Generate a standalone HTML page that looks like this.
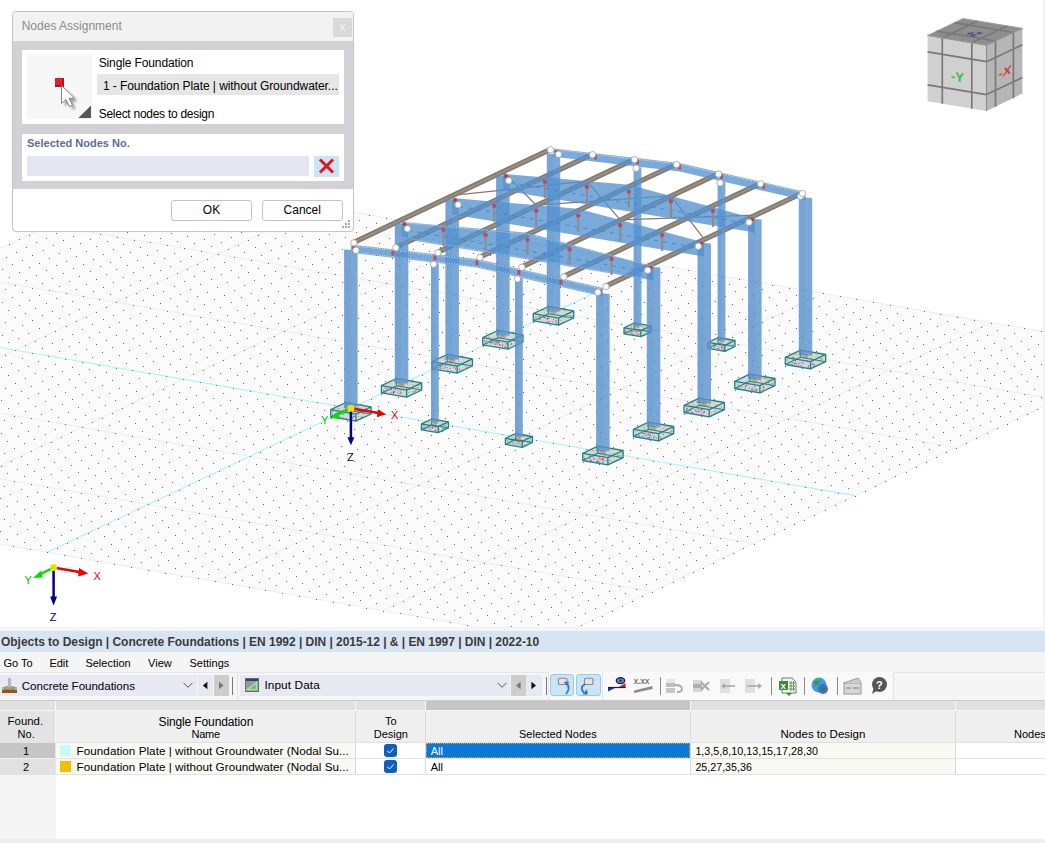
<!DOCTYPE html>
<html><head><meta charset="utf-8"><style>
*{margin:0;padding:0;box-sizing:border-box}
html,body{width:1045px;height:843px;overflow:hidden;background:#fff;font-family:"Liberation Sans",sans-serif;}
.abs{position:absolute}
#vp{position:absolute;left:0;top:0;width:1045px;height:627px;background:#fff;overflow:hidden}
#vp svg.scene{position:absolute;left:0;top:0}
.t{position:absolute;white-space:nowrap;color:#000;font-size:12px;line-height:14px}
</style></head><body>
<div id="vp">
<svg class="scene" width="1045" height="627" viewBox="0 0 1045 627" font-family="Liberation Sans">
<polygon points="150.8,177.0 1158.8,351.6 551.0,639.6 -457.0,465.0" fill="#fbfbfb"/>
<path d="M150.8 177.0L-457.0 465.0M150.8 177.0L1158.8 351.6M318.8 206.1L-289.0 494.1M49.5 225.0L1057.5 399.6M486.8 235.2L-121.0 523.2M-51.8 273.0L956.2 447.6M822.8 293.4L215.0 581.4M-254.4 369.0L753.6 543.6M990.8 322.5L383.0 610.5M-355.7 417.0L652.3 591.6M1158.8 351.6L551.0 639.6M-457.0 465.0L551.0 639.6" stroke="#ededed" stroke-width="1" fill="none"/>
<path d="M-153.1 321.0L854.9 495.6M654.8 264.3L47.0 552.3" stroke="#b2f2fb" stroke-width="1.1" fill="none"/>
<path d="M151 177h1v1h-1zM141 182h1v1h-1zM131 187h1v1h-1zM120 191h1v1h-1zM110 196h1v1h-1zM100 201h1v1h-1zM90 206h1v1h-1zM80 211h1v1h-1zM70 215h1v1h-1zM60 220h1v1h-1zM50 225h1v1h-1zM39 230h1v1h-1zM29 235h1v1h-1zM19 239h1v1h-1zM9 244h1v1h-1zM-1 249h1v1h-1zM168 180h1v1h-1zM157 185h1v1h-1zM147 190h1v1h-1zM137 194h1v1h-1zM127 199h1v1h-1zM117 204h1v1h-1zM107 209h1v1h-1zM97 214h1v1h-1zM87 218h1v1h-1zM76 223h1v1h-1zM66 228h1v1h-1zM56 233h1v1h-1zM46 238h1v1h-1zM36 242h1v1h-1zM26 247h1v1h-1zM16 252h1v1h-1zM6 257h1v1h-1zM184 183h1v1h-1zM174 188h1v1h-1zM164 192h1v1h-1zM154 197h1v1h-1zM144 202h1v1h-1zM134 207h1v1h-1zM124 212h1v1h-1zM113 216h1v1h-1zM103 221h1v1h-1zM93 226h1v1h-1zM83 231h1v1h-1zM73 236h1v1h-1zM63 240h1v1h-1zM53 245h1v1h-1zM43 250h1v1h-1zM32 255h1v1h-1zM22 260h1v1h-1zM12 264h1v1h-1zM2 269h1v1h-1zM201 186h1v1h-1zM191 191h1v1h-1zM181 195h1v1h-1zM171 200h1v1h-1zM161 205h1v1h-1zM151 210h1v1h-1zM140 215h1v1h-1zM130 219h1v1h-1zM120 224h1v1h-1zM110 229h1v1h-1zM100 234h1v1h-1zM90 239h1v1h-1zM80 243h1v1h-1zM70 248h1v1h-1zM59 253h1v1h-1zM49 258h1v1h-1zM39 263h1v1h-1zM29 267h1v1h-1zM19 272h1v1h-1zM9 277h1v1h-1zM-1 282h1v1h-1zM218 189h1v1h-1zM208 193h1v1h-1zM198 198h1v1h-1zM188 203h1v1h-1zM177 208h1v1h-1zM167 213h1v1h-1zM157 217h1v1h-1zM147 222h1v1h-1zM137 227h1v1h-1zM127 232h1v1h-1zM117 237h1v1h-1zM107 241h1v1h-1zM96 246h1v1h-1zM86 251h1v1h-1zM76 256h1v1h-1zM66 261h1v1h-1zM56 265h1v1h-1zM46 270h1v1h-1zM36 275h1v1h-1zM26 280h1v1h-1zM15 285h1v1h-1zM5 289h1v1h-1zM235 192h1v1h-1zM225 196h1v1h-1zM215 201h1v1h-1zM204 206h1v1h-1zM194 211h1v1h-1zM184 216h1v1h-1zM174 220h1v1h-1zM164 225h1v1h-1zM154 230h1v1h-1zM144 235h1v1h-1zM134 240h1v1h-1zM123 244h1v1h-1zM113 249h1v1h-1zM103 254h1v1h-1zM93 259h1v1h-1zM83 264h1v1h-1zM73 268h1v1h-1zM63 273h1v1h-1zM52 278h1v1h-1zM42 283h1v1h-1zM32 288h1v1h-1zM22 292h1v1h-1zM12 297h1v1h-1zM2 302h1v1h-1zM252 194h1v1h-1zM241 199h1v1h-1zM231 204h1v1h-1zM221 209h1v1h-1zM211 214h1v1h-1zM201 218h1v1h-1zM191 223h1v1h-1zM181 228h1v1h-1zM171 233h1v1h-1zM160 238h1v1h-1zM150 242h1v1h-1zM140 247h1v1h-1zM130 252h1v1h-1zM120 257h1v1h-1zM110 262h1v1h-1zM100 266h1v1h-1zM90 271h1v1h-1zM79 276h1v1h-1zM69 281h1v1h-1zM59 286h1v1h-1zM49 290h1v1h-1zM39 295h1v1h-1zM29 300h1v1h-1zM19 305h1v1h-1zM8 310h1v1h-1zM-2 314h1v1h-1zM268 197h1v1h-1zM258 202h1v1h-1zM248 207h1v1h-1zM238 212h1v1h-1zM228 217h1v1h-1zM218 221h1v1h-1zM208 226h1v1h-1zM197 231h1v1h-1zM187 236h1v1h-1zM177 241h1v1h-1zM167 245h1v1h-1zM157 250h1v1h-1zM147 255h1v1h-1zM137 260h1v1h-1zM127 265h1v1h-1zM116 269h1v1h-1zM106 274h1v1h-1zM96 279h1v1h-1zM86 284h1v1h-1zM76 289h1v1h-1zM66 293h1v1h-1zM56 298h1v1h-1zM46 303h1v1h-1zM35 308h1v1h-1zM25 313h1v1h-1zM15 317h1v1h-1zM5 322h1v1h-1zM285 200h1v1h-1zM275 205h1v1h-1zM265 210h1v1h-1zM255 215h1v1h-1zM245 219h1v1h-1zM235 224h1v1h-1zM224 229h1v1h-1zM214 234h1v1h-1zM204 239h1v1h-1zM194 243h1v1h-1zM184 248h1v1h-1zM174 253h1v1h-1zM164 258h1v1h-1zM154 263h1v1h-1zM143 267h1v1h-1zM133 272h1v1h-1zM123 277h1v1h-1zM113 282h1v1h-1zM103 287h1v1h-1zM93 291h1v1h-1zM83 296h1v1h-1zM72 301h1v1h-1zM62 306h1v1h-1zM52 311h1v1h-1zM42 315h1v1h-1zM32 320h1v1h-1zM22 325h1v1h-1zM12 330h1v1h-1zM2 335h1v1h-1zM302 203h1v1h-1zM292 208h1v1h-1zM282 213h1v1h-1zM272 218h1v1h-1zM261 222h1v1h-1zM251 227h1v1h-1zM241 232h1v1h-1zM231 237h1v1h-1zM221 242h1v1h-1zM211 246h1v1h-1zM201 251h1v1h-1zM191 256h1v1h-1zM180 261h1v1h-1zM170 266h1v1h-1zM160 270h1v1h-1zM150 275h1v1h-1zM140 280h1v1h-1zM130 285h1v1h-1zM120 290h1v1h-1zM110 294h1v1h-1zM99 299h1v1h-1zM89 304h1v1h-1zM79 309h1v1h-1zM69 314h1v1h-1zM59 318h1v1h-1zM49 323h1v1h-1zM39 328h1v1h-1zM28 333h1v1h-1zM18 338h1v1h-1zM8 342h1v1h-1zM-2 347h1v1h-1zM319 206h1v1h-1zM309 211h1v1h-1zM299 216h1v1h-1zM288 221h1v1h-1zM278 225h1v1h-1zM268 230h1v1h-1zM258 235h1v1h-1zM248 240h1v1h-1zM238 245h1v1h-1zM228 249h1v1h-1zM218 254h1v1h-1zM207 259h1v1h-1zM197 264h1v1h-1zM187 269h1v1h-1zM177 273h1v1h-1zM167 278h1v1h-1zM157 283h1v1h-1zM147 288h1v1h-1zM136 293h1v1h-1zM126 297h1v1h-1zM116 302h1v1h-1zM106 307h1v1h-1zM96 312h1v1h-1zM86 317h1v1h-1zM76 321h1v1h-1zM66 326h1v1h-1zM55 331h1v1h-1zM45 336h1v1h-1zM35 341h1v1h-1zM25 345h1v1h-1zM15 350h1v1h-1zM5 355h1v1h-1zM336 209h1v1h-1zM325 214h1v1h-1zM315 219h1v1h-1zM305 223h1v1h-1zM295 228h1v1h-1zM285 233h1v1h-1zM275 238h1v1h-1zM265 243h1v1h-1zM255 247h1v1h-1zM244 252h1v1h-1zM234 257h1v1h-1zM224 262h1v1h-1zM214 267h1v1h-1zM204 271h1v1h-1zM194 276h1v1h-1zM184 281h1v1h-1zM174 286h1v1h-1zM163 291h1v1h-1zM153 295h1v1h-1zM143 300h1v1h-1zM133 305h1v1h-1zM123 310h1v1h-1zM113 315h1v1h-1zM103 319h1v1h-1zM92 324h1v1h-1zM82 329h1v1h-1zM72 334h1v1h-1zM62 339h1v1h-1zM52 343h1v1h-1zM42 348h1v1h-1zM32 353h1v1h-1zM22 358h1v1h-1zM11 363h1v1h-1zM1 367h1v1h-1zM352 212h1v1h-1zM342 217h1v1h-1zM332 222h1v1h-1zM322 226h1v1h-1zM312 231h1v1h-1zM302 236h1v1h-1zM292 241h1v1h-1zM281 246h1v1h-1zM271 250h1v1h-1zM261 255h1v1h-1zM251 260h1v1h-1zM241 265h1v1h-1zM231 270h1v1h-1zM221 274h1v1h-1zM211 279h1v1h-1zM200 284h1v1h-1zM190 289h1v1h-1zM180 294h1v1h-1zM170 298h1v1h-1zM160 303h1v1h-1zM150 308h1v1h-1zM140 313h1v1h-1zM130 318h1v1h-1zM119 322h1v1h-1zM109 327h1v1h-1zM99 332h1v1h-1zM89 337h1v1h-1zM79 342h1v1h-1zM69 346h1v1h-1zM59 351h1v1h-1zM48 356h1v1h-1zM38 361h1v1h-1zM28 366h1v1h-1zM18 370h1v1h-1zM8 375h1v1h-1zM369 215h1v1h-1zM359 220h1v1h-1zM349 224h1v1h-1zM339 229h1v1h-1zM329 234h1v1h-1zM319 239h1v1h-1zM308 244h1v1h-1zM298 248h1v1h-1zM288 253h1v1h-1zM278 258h1v1h-1zM268 263h1v1h-1zM258 268h1v1h-1zM248 272h1v1h-1zM238 277h1v1h-1zM227 282h1v1h-1zM217 287h1v1h-1zM207 292h1v1h-1zM197 296h1v1h-1zM187 301h1v1h-1zM177 306h1v1h-1zM167 311h1v1h-1zM156 316h1v1h-1zM146 320h1v1h-1zM136 325h1v1h-1zM126 330h1v1h-1zM116 335h1v1h-1zM106 340h1v1h-1zM96 344h1v1h-1zM86 349h1v1h-1zM75 354h1v1h-1zM65 359h1v1h-1zM55 364h1v1h-1zM45 368h1v1h-1zM35 373h1v1h-1zM25 378h1v1h-1zM15 383h1v1h-1zM5 388h1v1h-1zM386 218h1v1h-1zM376 223h1v1h-1zM366 227h1v1h-1zM356 232h1v1h-1zM345 237h1v1h-1zM335 242h1v1h-1zM325 247h1v1h-1zM315 251h1v1h-1zM305 256h1v1h-1zM295 261h1v1h-1zM285 266h1v1h-1zM275 271h1v1h-1zM264 275h1v1h-1zM254 280h1v1h-1zM244 285h1v1h-1zM234 290h1v1h-1zM224 295h1v1h-1zM214 299h1v1h-1zM204 304h1v1h-1zM194 309h1v1h-1zM183 314h1v1h-1zM173 319h1v1h-1zM163 323h1v1h-1zM153 328h1v1h-1zM143 333h1v1h-1zM133 338h1v1h-1zM123 343h1v1h-1zM112 347h1v1h-1zM102 352h1v1h-1zM92 357h1v1h-1zM82 362h1v1h-1zM72 367h1v1h-1zM62 371h1v1h-1zM52 376h1v1h-1zM42 381h1v1h-1zM31 386h1v1h-1zM21 391h1v1h-1zM11 395h1v1h-1zM1 400h1v1h-1zM403 221h1v1h-1zM393 225h1v1h-1zM383 230h1v1h-1zM372 235h1v1h-1zM362 240h1v1h-1zM352 245h1v1h-1zM342 249h1v1h-1zM332 254h1v1h-1zM322 259h1v1h-1zM312 264h1v1h-1zM302 269h1v1h-1zM291 273h1v1h-1zM281 278h1v1h-1zM271 283h1v1h-1zM261 288h1v1h-1zM251 293h1v1h-1zM241 297h1v1h-1zM231 302h1v1h-1zM220 307h1v1h-1zM210 312h1v1h-1zM200 317h1v1h-1zM190 321h1v1h-1zM180 326h1v1h-1zM170 331h1v1h-1zM160 336h1v1h-1zM150 341h1v1h-1zM139 345h1v1h-1zM129 350h1v1h-1zM119 355h1v1h-1zM109 360h1v1h-1zM99 365h1v1h-1zM89 369h1v1h-1zM79 374h1v1h-1zM69 379h1v1h-1zM58 384h1v1h-1zM48 389h1v1h-1zM38 393h1v1h-1zM28 398h1v1h-1zM18 403h1v1h-1zM8 408h1v1h-1zM420 224h1v1h-1zM409 228h1v1h-1zM399 233h1v1h-1zM389 238h1v1h-1zM379 243h1v1h-1zM369 248h1v1h-1zM359 252h1v1h-1zM349 257h1v1h-1zM339 262h1v1h-1zM328 267h1v1h-1zM318 272h1v1h-1zM308 276h1v1h-1zM298 281h1v1h-1zM288 286h1v1h-1zM278 291h1v1h-1zM268 296h1v1h-1zM258 300h1v1h-1zM247 305h1v1h-1zM237 310h1v1h-1zM227 315h1v1h-1zM217 320h1v1h-1zM207 324h1v1h-1zM197 329h1v1h-1zM187 334h1v1h-1zM176 339h1v1h-1zM166 344h1v1h-1zM156 348h1v1h-1zM146 353h1v1h-1zM136 358h1v1h-1zM126 363h1v1h-1zM116 368h1v1h-1zM106 372h1v1h-1zM95 377h1v1h-1zM85 382h1v1h-1zM75 387h1v1h-1zM65 392h1v1h-1zM55 396h1v1h-1zM45 401h1v1h-1zM35 406h1v1h-1zM25 411h1v1h-1zM14 416h1v1h-1zM4 420h1v1h-1zM436 226h1v1h-1zM426 231h1v1h-1zM416 236h1v1h-1zM406 241h1v1h-1zM396 246h1v1h-1zM386 250h1v1h-1zM376 255h1v1h-1zM365 260h1v1h-1zM355 265h1v1h-1zM345 270h1v1h-1zM335 274h1v1h-1zM325 279h1v1h-1zM315 284h1v1h-1zM305 289h1v1h-1zM295 294h1v1h-1zM284 298h1v1h-1zM274 303h1v1h-1zM264 308h1v1h-1zM254 313h1v1h-1zM244 318h1v1h-1zM234 322h1v1h-1zM224 327h1v1h-1zM214 332h1v1h-1zM203 337h1v1h-1zM193 342h1v1h-1zM183 346h1v1h-1zM173 351h1v1h-1zM163 356h1v1h-1zM153 361h1v1h-1zM143 366h1v1h-1zM132 370h1v1h-1zM122 375h1v1h-1zM112 380h1v1h-1zM102 385h1v1h-1zM92 390h1v1h-1zM82 394h1v1h-1zM72 399h1v1h-1zM62 404h1v1h-1zM51 409h1v1h-1zM41 414h1v1h-1zM31 418h1v1h-1zM21 423h1v1h-1zM11 428h1v1h-1zM1 433h1v1h-1zM453 229h1v1h-1zM443 234h1v1h-1zM433 239h1v1h-1zM423 244h1v1h-1zM413 249h1v1h-1zM403 253h1v1h-1zM392 258h1v1h-1zM382 263h1v1h-1zM372 268h1v1h-1zM362 273h1v1h-1zM352 277h1v1h-1zM342 282h1v1h-1zM332 287h1v1h-1zM322 292h1v1h-1zM311 297h1v1h-1zM301 301h1v1h-1zM291 306h1v1h-1zM281 311h1v1h-1zM271 316h1v1h-1zM261 321h1v1h-1zM251 325h1v1h-1zM240 330h1v1h-1zM230 335h1v1h-1zM220 340h1v1h-1zM210 345h1v1h-1zM200 349h1v1h-1zM190 354h1v1h-1zM180 359h1v1h-1zM170 364h1v1h-1zM159 369h1v1h-1zM149 373h1v1h-1zM139 378h1v1h-1zM129 383h1v1h-1zM119 388h1v1h-1zM109 393h1v1h-1zM99 397h1v1h-1zM89 402h1v1h-1zM78 407h1v1h-1zM68 412h1v1h-1zM58 417h1v1h-1zM48 421h1v1h-1zM38 426h1v1h-1zM28 431h1v1h-1zM18 436h1v1h-1zM7 441h1v1h-1zM470 232h1v1h-1zM460 237h1v1h-1zM450 242h1v1h-1zM440 247h1v1h-1zM429 251h1v1h-1zM419 256h1v1h-1zM409 261h1v1h-1zM399 266h1v1h-1zM389 271h1v1h-1zM379 275h1v1h-1zM369 280h1v1h-1zM359 285h1v1h-1zM348 290h1v1h-1zM338 295h1v1h-1zM328 299h1v1h-1zM318 304h1v1h-1zM308 309h1v1h-1zM298 314h1v1h-1zM288 319h1v1h-1zM278 323h1v1h-1zM267 328h1v1h-1zM257 333h1v1h-1zM247 338h1v1h-1zM237 343h1v1h-1zM227 347h1v1h-1zM217 352h1v1h-1zM207 357h1v1h-1zM196 362h1v1h-1zM186 367h1v1h-1zM176 371h1v1h-1zM166 376h1v1h-1zM156 381h1v1h-1zM146 386h1v1h-1zM136 391h1v1h-1zM126 395h1v1h-1zM115 400h1v1h-1zM105 405h1v1h-1zM95 410h1v1h-1zM85 415h1v1h-1zM75 419h1v1h-1zM65 424h1v1h-1zM55 429h1v1h-1zM45 434h1v1h-1zM34 439h1v1h-1zM24 443h1v1h-1zM14 448h1v1h-1zM4 453h1v1h-1zM487 235h1v1h-1zM477 240h1v1h-1zM467 245h1v1h-1zM456 250h1v1h-1zM446 254h1v1h-1zM436 259h1v1h-1zM426 264h1v1h-1zM416 269h1v1h-1zM406 274h1v1h-1zM396 278h1v1h-1zM386 283h1v1h-1zM375 288h1v1h-1zM365 293h1v1h-1zM355 298h1v1h-1zM345 302h1v1h-1zM335 307h1v1h-1zM325 312h1v1h-1zM315 317h1v1h-1zM304 322h1v1h-1zM294 326h1v1h-1zM284 331h1v1h-1zM274 336h1v1h-1zM264 341h1v1h-1zM254 346h1v1h-1zM244 350h1v1h-1zM234 355h1v1h-1zM223 360h1v1h-1zM213 365h1v1h-1zM203 370h1v1h-1zM193 374h1v1h-1zM183 379h1v1h-1zM173 384h1v1h-1zM163 389h1v1h-1zM153 394h1v1h-1zM142 398h1v1h-1zM132 403h1v1h-1zM122 408h1v1h-1zM112 413h1v1h-1zM102 418h1v1h-1zM92 422h1v1h-1zM82 427h1v1h-1zM71 432h1v1h-1zM61 437h1v1h-1zM51 442h1v1h-1zM41 446h1v1h-1zM31 451h1v1h-1zM21 456h1v1h-1zM11 461h1v1h-1zM1 466h1v1h-1zM504 238h1v1h-1zM493 243h1v1h-1zM483 248h1v1h-1zM473 253h1v1h-1zM463 257h1v1h-1zM453 262h1v1h-1zM443 267h1v1h-1zM433 272h1v1h-1zM423 277h1v1h-1zM412 281h1v1h-1zM402 286h1v1h-1zM392 291h1v1h-1zM382 296h1v1h-1zM372 301h1v1h-1zM362 305h1v1h-1zM352 310h1v1h-1zM342 315h1v1h-1zM331 320h1v1h-1zM321 325h1v1h-1zM311 329h1v1h-1zM301 334h1v1h-1zM291 339h1v1h-1zM281 344h1v1h-1zM271 349h1v1h-1zM260 353h1v1h-1zM250 358h1v1h-1zM240 363h1v1h-1zM230 368h1v1h-1zM220 373h1v1h-1zM210 377h1v1h-1zM200 382h1v1h-1zM190 387h1v1h-1zM179 392h1v1h-1zM169 397h1v1h-1zM159 401h1v1h-1zM149 406h1v1h-1zM139 411h1v1h-1zM129 416h1v1h-1zM119 421h1v1h-1zM109 425h1v1h-1zM98 430h1v1h-1zM88 435h1v1h-1zM78 440h1v1h-1zM68 445h1v1h-1zM58 449h1v1h-1zM48 454h1v1h-1zM38 459h1v1h-1zM27 464h1v1h-1zM17 469h1v1h-1zM7 473h1v1h-1zM520 241h1v1h-1zM510 246h1v1h-1zM500 251h1v1h-1zM490 255h1v1h-1zM480 260h1v1h-1zM470 265h1v1h-1zM460 270h1v1h-1zM449 275h1v1h-1zM439 279h1v1h-1zM429 284h1v1h-1zM419 289h1v1h-1zM409 294h1v1h-1zM399 299h1v1h-1zM389 303h1v1h-1zM379 308h1v1h-1zM368 313h1v1h-1zM358 318h1v1h-1zM348 323h1v1h-1zM338 327h1v1h-1zM328 332h1v1h-1zM318 337h1v1h-1zM308 342h1v1h-1zM298 347h1v1h-1zM287 351h1v1h-1zM277 356h1v1h-1zM267 361h1v1h-1zM257 366h1v1h-1zM247 371h1v1h-1zM237 375h1v1h-1zM227 380h1v1h-1zM216 385h1v1h-1zM206 390h1v1h-1zM196 395h1v1h-1zM186 399h1v1h-1zM176 404h1v1h-1zM166 409h1v1h-1zM156 414h1v1h-1zM146 419h1v1h-1zM135 423h1v1h-1zM125 428h1v1h-1zM115 433h1v1h-1zM105 438h1v1h-1zM95 443h1v1h-1zM85 447h1v1h-1zM75 452h1v1h-1zM65 457h1v1h-1zM54 462h1v1h-1zM44 467h1v1h-1zM34 471h1v1h-1zM24 476h1v1h-1zM14 481h1v1h-1zM4 486h1v1h-1zM537 244h1v1h-1zM527 249h1v1h-1zM517 254h1v1h-1zM507 258h1v1h-1zM497 263h1v1h-1zM487 268h1v1h-1zM476 273h1v1h-1zM466 278h1v1h-1zM456 282h1v1h-1zM446 287h1v1h-1zM436 292h1v1h-1zM426 297h1v1h-1zM416 302h1v1h-1zM406 306h1v1h-1zM395 311h1v1h-1zM385 316h1v1h-1zM375 321h1v1h-1zM365 326h1v1h-1zM355 330h1v1h-1zM345 335h1v1h-1zM335 340h1v1h-1zM324 345h1v1h-1zM314 350h1v1h-1zM304 354h1v1h-1zM294 359h1v1h-1zM284 364h1v1h-1zM274 369h1v1h-1zM264 374h1v1h-1zM254 378h1v1h-1zM243 383h1v1h-1zM233 388h1v1h-1zM223 393h1v1h-1zM213 398h1v1h-1zM203 402h1v1h-1zM193 407h1v1h-1zM183 412h1v1h-1zM173 417h1v1h-1zM162 422h1v1h-1zM152 426h1v1h-1zM142 431h1v1h-1zM132 436h1v1h-1zM122 441h1v1h-1zM112 446h1v1h-1zM102 450h1v1h-1zM91 455h1v1h-1zM81 460h1v1h-1zM71 465h1v1h-1zM61 470h1v1h-1zM51 474h1v1h-1zM41 479h1v1h-1zM31 484h1v1h-1zM21 489h1v1h-1zM10 494h1v1h-1zM0 498h1v1h-1zM554 247h1v1h-1zM544 252h1v1h-1zM534 256h1v1h-1zM524 261h1v1h-1zM513 266h1v1h-1zM503 271h1v1h-1zM493 276h1v1h-1zM483 280h1v1h-1zM473 285h1v1h-1zM463 290h1v1h-1zM453 295h1v1h-1zM443 300h1v1h-1zM432 304h1v1h-1zM422 309h1v1h-1zM412 314h1v1h-1zM402 319h1v1h-1zM392 324h1v1h-1zM382 328h1v1h-1zM372 333h1v1h-1zM362 338h1v1h-1zM351 343h1v1h-1zM341 348h1v1h-1zM331 352h1v1h-1zM321 357h1v1h-1zM311 362h1v1h-1zM301 367h1v1h-1zM291 372h1v1h-1zM280 376h1v1h-1zM270 381h1v1h-1zM260 386h1v1h-1zM250 391h1v1h-1zM240 396h1v1h-1zM230 400h1v1h-1zM220 405h1v1h-1zM210 410h1v1h-1zM199 415h1v1h-1zM189 420h1v1h-1zM179 424h1v1h-1zM169 429h1v1h-1zM159 434h1v1h-1zM149 439h1v1h-1zM139 444h1v1h-1zM129 448h1v1h-1zM118 453h1v1h-1zM108 458h1v1h-1zM98 463h1v1h-1zM88 468h1v1h-1zM78 472h1v1h-1zM68 477h1v1h-1zM58 482h1v1h-1zM47 487h1v1h-1zM37 492h1v1h-1zM27 496h1v1h-1zM17 501h1v1h-1zM7 506h1v1h-1zM571 250h1v1h-1zM561 255h1v1h-1zM551 259h1v1h-1zM540 264h1v1h-1zM530 269h1v1h-1zM520 274h1v1h-1zM510 279h1v1h-1zM500 283h1v1h-1zM490 288h1v1h-1zM480 293h1v1h-1zM470 298h1v1h-1zM459 303h1v1h-1zM449 307h1v1h-1zM439 312h1v1h-1zM429 317h1v1h-1zM419 322h1v1h-1zM409 327h1v1h-1zM399 331h1v1h-1zM388 336h1v1h-1zM378 341h1v1h-1zM368 346h1v1h-1zM358 351h1v1h-1zM348 355h1v1h-1zM338 360h1v1h-1zM328 365h1v1h-1zM318 370h1v1h-1zM307 375h1v1h-1zM297 379h1v1h-1zM287 384h1v1h-1zM277 389h1v1h-1zM267 394h1v1h-1zM257 399h1v1h-1zM247 403h1v1h-1zM237 408h1v1h-1zM226 413h1v1h-1zM216 418h1v1h-1zM206 423h1v1h-1zM196 427h1v1h-1zM186 432h1v1h-1zM176 437h1v1h-1zM166 442h1v1h-1zM155 447h1v1h-1zM145 451h1v1h-1zM135 456h1v1h-1zM125 461h1v1h-1zM115 466h1v1h-1zM105 471h1v1h-1zM95 475h1v1h-1zM85 480h1v1h-1zM74 485h1v1h-1zM64 490h1v1h-1zM54 495h1v1h-1zM44 499h1v1h-1zM34 504h1v1h-1zM24 509h1v1h-1zM14 514h1v1h-1zM4 519h1v1h-1zM588 253h1v1h-1zM577 257h1v1h-1zM567 262h1v1h-1zM557 267h1v1h-1zM547 272h1v1h-1zM537 277h1v1h-1zM527 281h1v1h-1zM517 286h1v1h-1zM507 291h1v1h-1zM496 296h1v1h-1zM486 301h1v1h-1zM476 305h1v1h-1zM466 310h1v1h-1zM456 315h1v1h-1zM446 320h1v1h-1zM436 325h1v1h-1zM426 329h1v1h-1zM415 334h1v1h-1zM405 339h1v1h-1zM395 344h1v1h-1zM385 349h1v1h-1zM375 353h1v1h-1zM365 358h1v1h-1zM355 363h1v1h-1zM344 368h1v1h-1zM334 373h1v1h-1zM324 377h1v1h-1zM314 382h1v1h-1zM304 387h1v1h-1zM294 392h1v1h-1zM284 397h1v1h-1zM274 401h1v1h-1zM263 406h1v1h-1zM253 411h1v1h-1zM243 416h1v1h-1zM233 421h1v1h-1zM223 425h1v1h-1zM213 430h1v1h-1zM203 435h1v1h-1zM193 440h1v1h-1zM182 445h1v1h-1zM172 449h1v1h-1zM162 454h1v1h-1zM152 459h1v1h-1zM142 464h1v1h-1zM132 469h1v1h-1zM122 473h1v1h-1zM111 478h1v1h-1zM101 483h1v1h-1zM91 488h1v1h-1zM81 493h1v1h-1zM71 497h1v1h-1zM61 502h1v1h-1zM51 507h1v1h-1zM41 512h1v1h-1zM30 517h1v1h-1zM20 521h1v1h-1zM10 526h1v1h-1zM0 531h1v1h-1zM604 256h1v1h-1zM594 260h1v1h-1zM584 265h1v1h-1zM574 270h1v1h-1zM564 275h1v1h-1zM554 280h1v1h-1zM544 284h1v1h-1zM533 289h1v1h-1zM523 294h1v1h-1zM513 299h1v1h-1zM503 304h1v1h-1zM493 308h1v1h-1zM483 313h1v1h-1zM473 318h1v1h-1zM463 323h1v1h-1zM452 328h1v1h-1zM442 332h1v1h-1zM432 337h1v1h-1zM422 342h1v1h-1zM412 347h1v1h-1zM402 352h1v1h-1zM392 356h1v1h-1zM382 361h1v1h-1zM371 366h1v1h-1zM361 371h1v1h-1zM351 376h1v1h-1zM341 380h1v1h-1zM331 385h1v1h-1zM321 390h1v1h-1zM311 395h1v1h-1zM301 400h1v1h-1zM290 404h1v1h-1zM280 409h1v1h-1zM270 414h1v1h-1zM260 419h1v1h-1zM250 424h1v1h-1zM240 428h1v1h-1zM230 433h1v1h-1zM219 438h1v1h-1zM209 443h1v1h-1zM199 448h1v1h-1zM189 452h1v1h-1zM179 457h1v1h-1zM169 462h1v1h-1zM159 467h1v1h-1zM149 472h1v1h-1zM138 476h1v1h-1zM128 481h1v1h-1zM118 486h1v1h-1zM108 491h1v1h-1zM98 496h1v1h-1zM88 500h1v1h-1zM78 505h1v1h-1zM68 510h1v1h-1zM57 515h1v1h-1zM47 520h1v1h-1zM37 524h1v1h-1zM27 529h1v1h-1zM17 534h1v1h-1zM7 539h1v1h-1zM621 258h1v1h-1zM611 263h1v1h-1zM601 268h1v1h-1zM591 273h1v1h-1zM581 278h1v1h-1zM571 282h1v1h-1zM560 287h1v1h-1zM550 292h1v1h-1zM540 297h1v1h-1zM530 302h1v1h-1zM520 306h1v1h-1zM510 311h1v1h-1zM500 316h1v1h-1zM490 321h1v1h-1zM479 326h1v1h-1zM469 330h1v1h-1zM459 335h1v1h-1zM449 340h1v1h-1zM439 345h1v1h-1zM429 350h1v1h-1zM419 354h1v1h-1zM408 359h1v1h-1zM398 364h1v1h-1zM388 369h1v1h-1zM378 374h1v1h-1zM368 378h1v1h-1zM358 383h1v1h-1zM348 388h1v1h-1zM338 393h1v1h-1zM327 398h1v1h-1zM317 402h1v1h-1zM307 407h1v1h-1zM297 412h1v1h-1zM287 417h1v1h-1zM277 422h1v1h-1zM267 426h1v1h-1zM257 431h1v1h-1zM246 436h1v1h-1zM236 441h1v1h-1zM226 446h1v1h-1zM216 450h1v1h-1zM206 455h1v1h-1zM196 460h1v1h-1zM186 465h1v1h-1zM175 470h1v1h-1zM165 474h1v1h-1zM155 479h1v1h-1zM145 484h1v1h-1zM135 489h1v1h-1zM125 494h1v1h-1zM115 498h1v1h-1zM105 503h1v1h-1zM94 508h1v1h-1zM84 513h1v1h-1zM74 518h1v1h-1zM64 522h1v1h-1zM54 527h1v1h-1zM44 532h1v1h-1zM34 537h1v1h-1zM24 542h1v1h-1zM13 546h1v1h-1zM638 261h1v1h-1zM628 266h1v1h-1zM618 271h1v1h-1zM608 276h1v1h-1zM597 281h1v1h-1zM587 285h1v1h-1zM577 290h1v1h-1zM567 295h1v1h-1zM557 300h1v1h-1zM547 305h1v1h-1zM537 309h1v1h-1zM527 314h1v1h-1zM516 319h1v1h-1zM506 324h1v1h-1zM496 329h1v1h-1zM486 333h1v1h-1zM476 338h1v1h-1zM466 343h1v1h-1zM456 348h1v1h-1zM446 353h1v1h-1zM435 357h1v1h-1zM425 362h1v1h-1zM415 367h1v1h-1zM405 372h1v1h-1zM395 377h1v1h-1zM385 381h1v1h-1zM375 386h1v1h-1zM364 391h1v1h-1zM354 396h1v1h-1zM344 401h1v1h-1zM334 405h1v1h-1zM324 410h1v1h-1zM314 415h1v1h-1zM304 420h1v1h-1zM294 425h1v1h-1zM283 429h1v1h-1zM273 434h1v1h-1zM263 439h1v1h-1zM253 444h1v1h-1zM243 449h1v1h-1zM233 453h1v1h-1zM223 458h1v1h-1zM213 463h1v1h-1zM202 468h1v1h-1zM192 473h1v1h-1zM182 477h1v1h-1zM172 482h1v1h-1zM162 487h1v1h-1zM152 492h1v1h-1zM142 497h1v1h-1zM131 501h1v1h-1zM121 506h1v1h-1zM111 511h1v1h-1zM101 516h1v1h-1zM91 521h1v1h-1zM81 525h1v1h-1zM71 530h1v1h-1zM61 535h1v1h-1zM50 540h1v1h-1zM40 545h1v1h-1zM30 549h1v1h-1zM655 264h1v1h-1zM645 269h1v1h-1zM635 274h1v1h-1zM624 279h1v1h-1zM614 284h1v1h-1zM604 288h1v1h-1zM594 293h1v1h-1zM584 298h1v1h-1zM574 303h1v1h-1zM564 308h1v1h-1zM554 312h1v1h-1zM543 317h1v1h-1zM533 322h1v1h-1zM523 327h1v1h-1zM513 332h1v1h-1zM503 336h1v1h-1zM493 341h1v1h-1zM483 346h1v1h-1zM472 351h1v1h-1zM462 356h1v1h-1zM452 360h1v1h-1zM442 365h1v1h-1zM432 370h1v1h-1zM422 375h1v1h-1zM412 380h1v1h-1zM402 384h1v1h-1zM391 389h1v1h-1zM381 394h1v1h-1zM371 399h1v1h-1zM361 404h1v1h-1zM351 408h1v1h-1zM341 413h1v1h-1zM331 418h1v1h-1zM321 423h1v1h-1zM310 428h1v1h-1zM300 432h1v1h-1zM290 437h1v1h-1zM280 442h1v1h-1zM270 447h1v1h-1zM260 452h1v1h-1zM250 456h1v1h-1zM239 461h1v1h-1zM229 466h1v1h-1zM219 471h1v1h-1zM209 476h1v1h-1zM199 480h1v1h-1zM189 485h1v1h-1zM179 490h1v1h-1zM169 495h1v1h-1zM158 500h1v1h-1zM148 504h1v1h-1zM138 509h1v1h-1zM128 514h1v1h-1zM118 519h1v1h-1zM108 524h1v1h-1zM98 528h1v1h-1zM88 533h1v1h-1zM77 538h1v1h-1zM67 543h1v1h-1zM57 548h1v1h-1zM47 552h1v1h-1zM672 267h1v1h-1zM661 272h1v1h-1zM651 277h1v1h-1zM641 282h1v1h-1zM631 286h1v1h-1zM621 291h1v1h-1zM611 296h1v1h-1zM601 301h1v1h-1zM591 306h1v1h-1zM580 310h1v1h-1zM570 315h1v1h-1zM560 320h1v1h-1zM550 325h1v1h-1zM540 330h1v1h-1zM530 334h1v1h-1zM520 339h1v1h-1zM510 344h1v1h-1zM499 349h1v1h-1zM489 354h1v1h-1zM479 358h1v1h-1zM469 363h1v1h-1zM459 368h1v1h-1zM449 373h1v1h-1zM439 378h1v1h-1zM428 382h1v1h-1zM418 387h1v1h-1zM408 392h1v1h-1zM398 397h1v1h-1zM388 402h1v1h-1zM378 406h1v1h-1zM368 411h1v1h-1zM358 416h1v1h-1zM347 421h1v1h-1zM337 426h1v1h-1zM327 430h1v1h-1zM317 435h1v1h-1zM307 440h1v1h-1zM297 445h1v1h-1zM287 450h1v1h-1zM277 454h1v1h-1zM266 459h1v1h-1zM256 464h1v1h-1zM246 469h1v1h-1zM236 474h1v1h-1zM226 478h1v1h-1zM216 483h1v1h-1zM206 488h1v1h-1zM195 493h1v1h-1zM185 498h1v1h-1zM175 502h1v1h-1zM165 507h1v1h-1zM155 512h1v1h-1zM145 517h1v1h-1zM135 522h1v1h-1zM125 526h1v1h-1zM114 531h1v1h-1zM104 536h1v1h-1zM94 541h1v1h-1zM84 546h1v1h-1zM74 550h1v1h-1zM64 555h1v1h-1zM688 270h1v1h-1zM678 275h1v1h-1zM668 280h1v1h-1zM658 285h1v1h-1zM648 289h1v1h-1zM638 294h1v1h-1zM628 299h1v1h-1zM617 304h1v1h-1zM607 309h1v1h-1zM597 313h1v1h-1zM587 318h1v1h-1zM577 323h1v1h-1zM567 328h1v1h-1zM557 333h1v1h-1zM547 337h1v1h-1zM536 342h1v1h-1zM526 347h1v1h-1zM516 352h1v1h-1zM506 357h1v1h-1zM496 361h1v1h-1zM486 366h1v1h-1zM476 371h1v1h-1zM466 376h1v1h-1zM455 381h1v1h-1zM445 385h1v1h-1zM435 390h1v1h-1zM425 395h1v1h-1zM415 400h1v1h-1zM405 405h1v1h-1zM395 409h1v1h-1zM385 414h1v1h-1zM374 419h1v1h-1zM364 424h1v1h-1zM354 429h1v1h-1zM344 433h1v1h-1zM334 438h1v1h-1zM324 443h1v1h-1zM314 448h1v1h-1zM303 453h1v1h-1zM293 457h1v1h-1zM283 462h1v1h-1zM273 467h1v1h-1zM263 472h1v1h-1zM253 477h1v1h-1zM243 481h1v1h-1zM233 486h1v1h-1zM222 491h1v1h-1zM212 496h1v1h-1zM202 501h1v1h-1zM192 505h1v1h-1zM182 510h1v1h-1zM172 515h1v1h-1zM162 520h1v1h-1zM152 525h1v1h-1zM141 529h1v1h-1zM131 534h1v1h-1zM121 539h1v1h-1zM111 544h1v1h-1zM101 549h1v1h-1zM91 553h1v1h-1zM81 558h1v1h-1zM705 273h1v1h-1zM695 278h1v1h-1zM685 283h1v1h-1zM675 287h1v1h-1zM665 292h1v1h-1zM655 297h1v1h-1zM644 302h1v1h-1zM634 307h1v1h-1zM624 311h1v1h-1zM614 316h1v1h-1zM604 321h1v1h-1zM594 326h1v1h-1zM584 331h1v1h-1zM574 335h1v1h-1zM563 340h1v1h-1zM553 345h1v1h-1zM543 350h1v1h-1zM533 355h1v1h-1zM523 359h1v1h-1zM513 364h1v1h-1zM503 369h1v1h-1zM492 374h1v1h-1zM482 379h1v1h-1zM472 383h1v1h-1zM462 388h1v1h-1zM452 393h1v1h-1zM442 398h1v1h-1zM432 403h1v1h-1zM422 407h1v1h-1zM411 412h1v1h-1zM401 417h1v1h-1zM391 422h1v1h-1zM381 427h1v1h-1zM371 431h1v1h-1zM361 436h1v1h-1zM351 441h1v1h-1zM341 446h1v1h-1zM330 451h1v1h-1zM320 455h1v1h-1zM310 460h1v1h-1zM300 465h1v1h-1zM290 470h1v1h-1zM280 475h1v1h-1zM270 479h1v1h-1zM259 484h1v1h-1zM249 489h1v1h-1zM239 494h1v1h-1zM229 499h1v1h-1zM219 503h1v1h-1zM209 508h1v1h-1zM199 513h1v1h-1zM189 518h1v1h-1zM178 523h1v1h-1zM168 527h1v1h-1zM158 532h1v1h-1zM148 537h1v1h-1zM138 542h1v1h-1zM128 547h1v1h-1zM118 551h1v1h-1zM108 556h1v1h-1zM97 561h1v1h-1zM722 276h1v1h-1zM712 281h1v1h-1zM702 286h1v1h-1zM692 290h1v1h-1zM681 295h1v1h-1zM671 300h1v1h-1zM661 305h1v1h-1zM651 310h1v1h-1zM641 314h1v1h-1zM631 319h1v1h-1zM621 324h1v1h-1zM611 329h1v1h-1zM600 334h1v1h-1zM590 338h1v1h-1zM580 343h1v1h-1zM570 348h1v1h-1zM560 353h1v1h-1zM550 358h1v1h-1zM540 362h1v1h-1zM530 367h1v1h-1zM519 372h1v1h-1zM509 377h1v1h-1zM499 382h1v1h-1zM489 386h1v1h-1zM479 391h1v1h-1zM469 396h1v1h-1zM459 401h1v1h-1zM448 406h1v1h-1zM438 410h1v1h-1zM428 415h1v1h-1zM418 420h1v1h-1zM408 425h1v1h-1zM398 430h1v1h-1zM388 434h1v1h-1zM378 439h1v1h-1zM367 444h1v1h-1zM357 449h1v1h-1zM347 454h1v1h-1zM337 458h1v1h-1zM327 463h1v1h-1zM317 468h1v1h-1zM307 473h1v1h-1zM297 478h1v1h-1zM286 482h1v1h-1zM276 487h1v1h-1zM266 492h1v1h-1zM256 497h1v1h-1zM246 502h1v1h-1zM236 506h1v1h-1zM226 511h1v1h-1zM215 516h1v1h-1zM205 521h1v1h-1zM195 526h1v1h-1zM185 530h1v1h-1zM175 535h1v1h-1zM165 540h1v1h-1zM155 545h1v1h-1zM145 550h1v1h-1zM134 554h1v1h-1zM124 559h1v1h-1zM114 564h1v1h-1zM739 279h1v1h-1zM729 284h1v1h-1zM719 288h1v1h-1zM708 293h1v1h-1zM698 298h1v1h-1zM688 303h1v1h-1zM678 308h1v1h-1zM668 312h1v1h-1zM658 317h1v1h-1zM648 322h1v1h-1zM638 327h1v1h-1zM627 332h1v1h-1zM617 336h1v1h-1zM607 341h1v1h-1zM597 346h1v1h-1zM587 351h1v1h-1zM577 356h1v1h-1zM567 360h1v1h-1zM556 365h1v1h-1zM546 370h1v1h-1zM536 375h1v1h-1zM526 380h1v1h-1zM516 384h1v1h-1zM506 389h1v1h-1zM496 394h1v1h-1zM486 399h1v1h-1zM475 404h1v1h-1zM465 408h1v1h-1zM455 413h1v1h-1zM445 418h1v1h-1zM435 423h1v1h-1zM425 428h1v1h-1zM415 432h1v1h-1zM405 437h1v1h-1zM394 442h1v1h-1zM384 447h1v1h-1zM374 452h1v1h-1zM364 456h1v1h-1zM354 461h1v1h-1zM344 466h1v1h-1zM334 471h1v1h-1zM323 476h1v1h-1zM313 480h1v1h-1zM303 485h1v1h-1zM293 490h1v1h-1zM283 495h1v1h-1zM273 500h1v1h-1zM263 504h1v1h-1zM253 509h1v1h-1zM242 514h1v1h-1zM232 519h1v1h-1zM222 524h1v1h-1zM212 528h1v1h-1zM202 533h1v1h-1zM192 538h1v1h-1zM182 543h1v1h-1zM172 548h1v1h-1zM161 552h1v1h-1zM151 557h1v1h-1zM141 562h1v1h-1zM131 567h1v1h-1zM756 282h1v1h-1zM745 287h1v1h-1zM735 291h1v1h-1zM725 296h1v1h-1zM715 301h1v1h-1zM705 306h1v1h-1zM695 311h1v1h-1zM685 315h1v1h-1zM675 320h1v1h-1zM664 325h1v1h-1zM654 330h1v1h-1zM644 335h1v1h-1zM634 339h1v1h-1zM624 344h1v1h-1zM614 349h1v1h-1zM604 354h1v1h-1zM594 359h1v1h-1zM583 363h1v1h-1zM573 368h1v1h-1zM563 373h1v1h-1zM553 378h1v1h-1zM543 383h1v1h-1zM533 387h1v1h-1zM523 392h1v1h-1zM512 397h1v1h-1zM502 402h1v1h-1zM492 407h1v1h-1zM482 411h1v1h-1zM472 416h1v1h-1zM462 421h1v1h-1zM452 426h1v1h-1zM442 431h1v1h-1zM431 435h1v1h-1zM421 440h1v1h-1zM411 445h1v1h-1zM401 450h1v1h-1zM391 455h1v1h-1zM381 459h1v1h-1zM371 464h1v1h-1zM361 469h1v1h-1zM350 474h1v1h-1zM340 479h1v1h-1zM330 483h1v1h-1zM320 488h1v1h-1zM310 493h1v1h-1zM300 498h1v1h-1zM290 503h1v1h-1zM279 507h1v1h-1zM269 512h1v1h-1zM259 517h1v1h-1zM249 522h1v1h-1zM239 527h1v1h-1zM229 531h1v1h-1zM219 536h1v1h-1zM209 541h1v1h-1zM198 546h1v1h-1zM188 551h1v1h-1zM178 555h1v1h-1zM168 560h1v1h-1zM158 565h1v1h-1zM148 570h1v1h-1zM772 285h1v1h-1zM762 289h1v1h-1zM752 294h1v1h-1zM742 299h1v1h-1zM732 304h1v1h-1zM722 309h1v1h-1zM712 313h1v1h-1zM701 318h1v1h-1zM691 323h1v1h-1zM681 328h1v1h-1zM671 333h1v1h-1zM661 337h1v1h-1zM651 342h1v1h-1zM641 347h1v1h-1zM631 352h1v1h-1zM620 357h1v1h-1zM610 361h1v1h-1zM600 366h1v1h-1zM590 371h1v1h-1zM580 376h1v1h-1zM570 381h1v1h-1zM560 385h1v1h-1zM550 390h1v1h-1zM539 395h1v1h-1zM529 400h1v1h-1zM519 405h1v1h-1zM509 409h1v1h-1zM499 414h1v1h-1zM489 419h1v1h-1zM479 424h1v1h-1zM469 429h1v1h-1zM458 433h1v1h-1zM448 438h1v1h-1zM438 443h1v1h-1zM428 448h1v1h-1zM418 453h1v1h-1zM408 457h1v1h-1zM398 462h1v1h-1zM387 467h1v1h-1zM377 472h1v1h-1zM367 477h1v1h-1zM357 481h1v1h-1zM347 486h1v1h-1zM337 491h1v1h-1zM327 496h1v1h-1zM317 501h1v1h-1zM306 505h1v1h-1zM296 510h1v1h-1zM286 515h1v1h-1zM276 520h1v1h-1zM266 525h1v1h-1zM256 529h1v1h-1zM246 534h1v1h-1zM236 539h1v1h-1zM225 544h1v1h-1zM215 549h1v1h-1zM205 553h1v1h-1zM195 558h1v1h-1zM185 563h1v1h-1zM175 568h1v1h-1zM165 573h1v1h-1zM789 288h1v1h-1zM779 292h1v1h-1zM769 297h1v1h-1zM759 302h1v1h-1zM749 307h1v1h-1zM739 312h1v1h-1zM728 316h1v1h-1zM718 321h1v1h-1zM708 326h1v1h-1zM698 331h1v1h-1zM688 336h1v1h-1zM678 340h1v1h-1zM668 345h1v1h-1zM658 350h1v1h-1zM647 355h1v1h-1zM637 360h1v1h-1zM627 364h1v1h-1zM617 369h1v1h-1zM607 374h1v1h-1zM597 379h1v1h-1zM587 384h1v1h-1zM576 388h1v1h-1zM566 393h1v1h-1zM556 398h1v1h-1zM546 403h1v1h-1zM536 408h1v1h-1zM526 412h1v1h-1zM516 417h1v1h-1zM506 422h1v1h-1zM495 427h1v1h-1zM485 432h1v1h-1zM475 436h1v1h-1zM465 441h1v1h-1zM455 446h1v1h-1zM445 451h1v1h-1zM435 456h1v1h-1zM425 460h1v1h-1zM414 465h1v1h-1zM404 470h1v1h-1zM394 475h1v1h-1zM384 480h1v1h-1zM374 484h1v1h-1zM364 489h1v1h-1zM354 494h1v1h-1zM343 499h1v1h-1zM333 504h1v1h-1zM323 508h1v1h-1zM313 513h1v1h-1zM303 518h1v1h-1zM293 523h1v1h-1zM283 528h1v1h-1zM273 532h1v1h-1zM262 537h1v1h-1zM252 542h1v1h-1zM242 547h1v1h-1zM232 552h1v1h-1zM222 556h1v1h-1zM212 561h1v1h-1zM202 566h1v1h-1zM192 571h1v1h-1zM181 576h1v1h-1zM806 290h1v1h-1zM796 295h1v1h-1zM786 300h1v1h-1zM776 305h1v1h-1zM765 310h1v1h-1zM755 314h1v1h-1zM745 319h1v1h-1zM735 324h1v1h-1zM725 329h1v1h-1zM715 334h1v1h-1zM705 338h1v1h-1zM695 343h1v1h-1zM684 348h1v1h-1zM674 353h1v1h-1zM664 358h1v1h-1zM654 362h1v1h-1zM644 367h1v1h-1zM634 372h1v1h-1zM624 377h1v1h-1zM614 382h1v1h-1zM603 386h1v1h-1zM593 391h1v1h-1zM583 396h1v1h-1zM573 401h1v1h-1zM563 406h1v1h-1zM553 410h1v1h-1zM543 415h1v1h-1zM532 420h1v1h-1zM522 425h1v1h-1zM512 430h1v1h-1zM502 434h1v1h-1zM492 439h1v1h-1zM482 444h1v1h-1zM472 449h1v1h-1zM462 454h1v1h-1zM451 458h1v1h-1zM441 463h1v1h-1zM431 468h1v1h-1zM421 473h1v1h-1zM411 478h1v1h-1zM401 482h1v1h-1zM391 487h1v1h-1zM381 492h1v1h-1zM370 497h1v1h-1zM360 502h1v1h-1zM350 506h1v1h-1zM340 511h1v1h-1zM330 516h1v1h-1zM320 521h1v1h-1zM310 526h1v1h-1zM300 530h1v1h-1zM289 535h1v1h-1zM279 540h1v1h-1zM269 545h1v1h-1zM259 550h1v1h-1zM249 554h1v1h-1zM239 559h1v1h-1zM229 564h1v1h-1zM218 569h1v1h-1zM208 574h1v1h-1zM198 578h1v1h-1zM823 293h1v1h-1zM813 298h1v1h-1zM803 303h1v1h-1zM792 308h1v1h-1zM782 313h1v1h-1zM772 317h1v1h-1zM762 322h1v1h-1zM752 327h1v1h-1zM742 332h1v1h-1zM732 337h1v1h-1zM722 341h1v1h-1zM711 346h1v1h-1zM701 351h1v1h-1zM691 356h1v1h-1zM681 361h1v1h-1zM671 365h1v1h-1zM661 370h1v1h-1zM651 375h1v1h-1zM640 380h1v1h-1zM630 385h1v1h-1zM620 389h1v1h-1zM610 394h1v1h-1zM600 399h1v1h-1zM590 404h1v1h-1zM580 409h1v1h-1zM570 413h1v1h-1zM559 418h1v1h-1zM549 423h1v1h-1zM539 428h1v1h-1zM529 433h1v1h-1zM519 437h1v1h-1zM509 442h1v1h-1zM499 447h1v1h-1zM489 452h1v1h-1zM478 457h1v1h-1zM468 461h1v1h-1zM458 466h1v1h-1zM448 471h1v1h-1zM438 476h1v1h-1zM428 481h1v1h-1zM418 485h1v1h-1zM407 490h1v1h-1zM397 495h1v1h-1zM387 500h1v1h-1zM377 505h1v1h-1zM367 509h1v1h-1zM357 514h1v1h-1zM347 519h1v1h-1zM337 524h1v1h-1zM326 529h1v1h-1zM316 533h1v1h-1zM306 538h1v1h-1zM296 543h1v1h-1zM286 548h1v1h-1zM276 553h1v1h-1zM266 557h1v1h-1zM256 562h1v1h-1zM245 567h1v1h-1zM235 572h1v1h-1zM225 577h1v1h-1zM215 581h1v1h-1zM840 296h1v1h-1zM829 301h1v1h-1zM819 306h1v1h-1zM809 311h1v1h-1zM799 316h1v1h-1zM789 320h1v1h-1zM779 325h1v1h-1zM769 330h1v1h-1zM759 335h1v1h-1zM748 340h1v1h-1zM738 344h1v1h-1zM728 349h1v1h-1zM718 354h1v1h-1zM708 359h1v1h-1zM698 364h1v1h-1zM688 368h1v1h-1zM678 373h1v1h-1zM667 378h1v1h-1zM657 383h1v1h-1zM647 388h1v1h-1zM637 392h1v1h-1zM627 397h1v1h-1zM617 402h1v1h-1zM607 407h1v1h-1zM596 412h1v1h-1zM586 416h1v1h-1zM576 421h1v1h-1zM566 426h1v1h-1zM556 431h1v1h-1zM546 436h1v1h-1zM536 440h1v1h-1zM526 445h1v1h-1zM515 450h1v1h-1zM505 455h1v1h-1zM495 460h1v1h-1zM485 464h1v1h-1zM475 469h1v1h-1zM465 474h1v1h-1zM455 479h1v1h-1zM445 484h1v1h-1zM434 488h1v1h-1zM424 493h1v1h-1zM414 498h1v1h-1zM404 503h1v1h-1zM394 508h1v1h-1zM384 512h1v1h-1zM374 517h1v1h-1zM363 522h1v1h-1zM353 527h1v1h-1zM343 532h1v1h-1zM333 536h1v1h-1zM323 541h1v1h-1zM313 546h1v1h-1zM303 551h1v1h-1zM293 556h1v1h-1zM282 560h1v1h-1zM272 565h1v1h-1zM262 570h1v1h-1zM252 575h1v1h-1zM242 580h1v1h-1zM232 584h1v1h-1zM856 299h1v1h-1zM846 304h1v1h-1zM836 309h1v1h-1zM826 314h1v1h-1zM816 318h1v1h-1zM806 323h1v1h-1zM796 328h1v1h-1zM785 333h1v1h-1zM775 338h1v1h-1zM765 342h1v1h-1zM755 347h1v1h-1zM745 352h1v1h-1zM735 357h1v1h-1zM725 362h1v1h-1zM715 366h1v1h-1zM704 371h1v1h-1zM694 376h1v1h-1zM684 381h1v1h-1zM674 386h1v1h-1zM664 390h1v1h-1zM654 395h1v1h-1zM644 400h1v1h-1zM634 405h1v1h-1zM623 410h1v1h-1zM613 414h1v1h-1zM603 419h1v1h-1zM593 424h1v1h-1zM583 429h1v1h-1zM573 434h1v1h-1zM563 438h1v1h-1zM553 443h1v1h-1zM542 448h1v1h-1zM532 453h1v1h-1zM522 458h1v1h-1zM512 462h1v1h-1zM502 467h1v1h-1zM492 472h1v1h-1zM482 477h1v1h-1zM471 482h1v1h-1zM461 486h1v1h-1zM451 491h1v1h-1zM441 496h1v1h-1zM431 501h1v1h-1zM421 506h1v1h-1zM411 510h1v1h-1zM401 515h1v1h-1zM390 520h1v1h-1zM380 525h1v1h-1zM370 530h1v1h-1zM360 534h1v1h-1zM350 539h1v1h-1zM340 544h1v1h-1zM330 549h1v1h-1zM320 554h1v1h-1zM309 558h1v1h-1zM299 563h1v1h-1zM289 568h1v1h-1zM279 573h1v1h-1zM269 578h1v1h-1zM259 582h1v1h-1zM249 587h1v1h-1zM873 302h1v1h-1zM863 307h1v1h-1zM853 312h1v1h-1zM843 317h1v1h-1zM833 321h1v1h-1zM823 326h1v1h-1zM812 331h1v1h-1zM802 336h1v1h-1zM792 341h1v1h-1zM782 345h1v1h-1zM772 350h1v1h-1zM762 355h1v1h-1zM752 360h1v1h-1zM742 365h1v1h-1zM731 369h1v1h-1zM721 374h1v1h-1zM711 379h1v1h-1zM701 384h1v1h-1zM691 389h1v1h-1zM681 393h1v1h-1zM671 398h1v1h-1zM660 403h1v1h-1zM650 408h1v1h-1zM640 413h1v1h-1zM630 417h1v1h-1zM620 422h1v1h-1zM610 427h1v1h-1zM600 432h1v1h-1zM590 437h1v1h-1zM579 441h1v1h-1zM569 446h1v1h-1zM559 451h1v1h-1zM549 456h1v1h-1zM539 461h1v1h-1zM529 465h1v1h-1zM519 470h1v1h-1zM509 475h1v1h-1zM498 480h1v1h-1zM488 485h1v1h-1zM478 489h1v1h-1zM468 494h1v1h-1zM458 499h1v1h-1zM448 504h1v1h-1zM438 509h1v1h-1zM427 513h1v1h-1zM417 518h1v1h-1zM407 523h1v1h-1zM397 528h1v1h-1zM387 533h1v1h-1zM377 537h1v1h-1zM367 542h1v1h-1zM357 547h1v1h-1zM346 552h1v1h-1zM336 557h1v1h-1zM326 561h1v1h-1zM316 566h1v1h-1zM306 571h1v1h-1zM296 576h1v1h-1zM286 581h1v1h-1zM276 585h1v1h-1zM265 590h1v1h-1zM890 305h1v1h-1zM880 310h1v1h-1zM870 315h1v1h-1zM860 319h1v1h-1zM849 324h1v1h-1zM839 329h1v1h-1zM829 334h1v1h-1zM819 339h1v1h-1zM809 343h1v1h-1zM799 348h1v1h-1zM789 353h1v1h-1zM779 358h1v1h-1zM768 363h1v1h-1zM758 367h1v1h-1zM748 372h1v1h-1zM738 377h1v1h-1zM728 382h1v1h-1zM718 387h1v1h-1zM708 391h1v1h-1zM698 396h1v1h-1zM687 401h1v1h-1zM677 406h1v1h-1zM667 411h1v1h-1zM657 415h1v1h-1zM647 420h1v1h-1zM637 425h1v1h-1zM627 430h1v1h-1zM616 435h1v1h-1zM606 439h1v1h-1zM596 444h1v1h-1zM586 449h1v1h-1zM576 454h1v1h-1zM566 459h1v1h-1zM556 463h1v1h-1zM546 468h1v1h-1zM535 473h1v1h-1zM525 478h1v1h-1zM515 483h1v1h-1zM505 487h1v1h-1zM495 492h1v1h-1zM485 497h1v1h-1zM475 502h1v1h-1zM465 507h1v1h-1zM454 511h1v1h-1zM444 516h1v1h-1zM434 521h1v1h-1zM424 526h1v1h-1zM414 531h1v1h-1zM404 535h1v1h-1zM394 540h1v1h-1zM384 545h1v1h-1zM373 550h1v1h-1zM363 555h1v1h-1zM353 559h1v1h-1zM343 564h1v1h-1zM333 569h1v1h-1zM323 574h1v1h-1zM313 579h1v1h-1zM302 583h1v1h-1zM292 588h1v1h-1zM282 593h1v1h-1zM907 308h1v1h-1zM897 313h1v1h-1zM887 318h1v1h-1zM876 322h1v1h-1zM866 327h1v1h-1zM856 332h1v1h-1zM846 337h1v1h-1zM836 342h1v1h-1zM826 346h1v1h-1zM816 351h1v1h-1zM806 356h1v1h-1zM795 361h1v1h-1zM785 366h1v1h-1zM775 370h1v1h-1zM765 375h1v1h-1zM755 380h1v1h-1zM745 385h1v1h-1zM735 390h1v1h-1zM724 394h1v1h-1zM714 399h1v1h-1zM704 404h1v1h-1zM694 409h1v1h-1zM684 414h1v1h-1zM674 418h1v1h-1zM664 423h1v1h-1zM654 428h1v1h-1zM643 433h1v1h-1zM633 438h1v1h-1zM623 442h1v1h-1zM613 447h1v1h-1zM603 452h1v1h-1zM593 457h1v1h-1zM583 462h1v1h-1zM573 466h1v1h-1zM562 471h1v1h-1zM552 476h1v1h-1zM542 481h1v1h-1zM532 486h1v1h-1zM522 490h1v1h-1zM512 495h1v1h-1zM502 500h1v1h-1zM491 505h1v1h-1zM481 510h1v1h-1zM471 514h1v1h-1zM461 519h1v1h-1zM451 524h1v1h-1zM441 529h1v1h-1zM431 534h1v1h-1zM421 538h1v1h-1zM410 543h1v1h-1zM400 548h1v1h-1zM390 553h1v1h-1zM380 558h1v1h-1zM370 562h1v1h-1zM360 567h1v1h-1zM350 572h1v1h-1zM340 577h1v1h-1zM329 582h1v1h-1zM319 586h1v1h-1zM309 591h1v1h-1zM299 596h1v1h-1zM924 311h1v1h-1zM913 316h1v1h-1zM903 320h1v1h-1zM893 325h1v1h-1zM883 330h1v1h-1zM873 335h1v1h-1zM863 340h1v1h-1zM853 344h1v1h-1zM843 349h1v1h-1zM832 354h1v1h-1zM822 359h1v1h-1zM812 364h1v1h-1zM802 368h1v1h-1zM792 373h1v1h-1zM782 378h1v1h-1zM772 383h1v1h-1zM762 388h1v1h-1zM751 392h1v1h-1zM741 397h1v1h-1zM731 402h1v1h-1zM721 407h1v1h-1zM711 412h1v1h-1zM701 416h1v1h-1zM691 421h1v1h-1zM680 426h1v1h-1zM670 431h1v1h-1zM660 436h1v1h-1zM650 440h1v1h-1zM640 445h1v1h-1zM630 450h1v1h-1zM620 455h1v1h-1zM610 460h1v1h-1zM599 464h1v1h-1zM589 469h1v1h-1zM579 474h1v1h-1zM569 479h1v1h-1zM559 484h1v1h-1zM549 488h1v1h-1zM539 493h1v1h-1zM529 498h1v1h-1zM518 503h1v1h-1zM508 508h1v1h-1zM498 512h1v1h-1zM488 517h1v1h-1zM478 522h1v1h-1zM468 527h1v1h-1zM458 532h1v1h-1zM447 536h1v1h-1zM437 541h1v1h-1zM427 546h1v1h-1zM417 551h1v1h-1zM407 556h1v1h-1zM397 560h1v1h-1zM387 565h1v1h-1zM377 570h1v1h-1zM366 575h1v1h-1zM356 580h1v1h-1zM346 584h1v1h-1zM336 589h1v1h-1zM326 594h1v1h-1zM316 599h1v1h-1zM940 314h1v1h-1zM930 319h1v1h-1zM920 323h1v1h-1zM910 328h1v1h-1zM900 333h1v1h-1zM890 338h1v1h-1zM880 343h1v1h-1zM869 347h1v1h-1zM859 352h1v1h-1zM849 357h1v1h-1zM839 362h1v1h-1zM829 367h1v1h-1zM819 371h1v1h-1zM809 376h1v1h-1zM799 381h1v1h-1zM788 386h1v1h-1zM778 391h1v1h-1zM768 395h1v1h-1zM758 400h1v1h-1zM748 405h1v1h-1zM738 410h1v1h-1zM728 415h1v1h-1zM718 419h1v1h-1zM707 424h1v1h-1zM697 429h1v1h-1zM687 434h1v1h-1zM677 439h1v1h-1zM667 443h1v1h-1zM657 448h1v1h-1zM647 453h1v1h-1zM637 458h1v1h-1zM626 463h1v1h-1zM616 467h1v1h-1zM606 472h1v1h-1zM596 477h1v1h-1zM586 482h1v1h-1zM576 487h1v1h-1zM566 491h1v1h-1zM555 496h1v1h-1zM545 501h1v1h-1zM535 506h1v1h-1zM525 511h1v1h-1zM515 515h1v1h-1zM505 520h1v1h-1zM495 525h1v1h-1zM485 530h1v1h-1zM474 535h1v1h-1zM464 539h1v1h-1zM454 544h1v1h-1zM444 549h1v1h-1zM434 554h1v1h-1zM424 559h1v1h-1zM414 563h1v1h-1zM404 568h1v1h-1zM393 573h1v1h-1zM383 578h1v1h-1zM373 583h1v1h-1zM363 587h1v1h-1zM353 592h1v1h-1zM343 597h1v1h-1zM333 602h1v1h-1zM957 317h1v1h-1zM947 321h1v1h-1zM937 326h1v1h-1zM927 331h1v1h-1zM917 336h1v1h-1zM907 341h1v1h-1zM896 345h1v1h-1zM886 350h1v1h-1zM876 355h1v1h-1zM866 360h1v1h-1zM856 365h1v1h-1zM846 369h1v1h-1zM836 374h1v1h-1zM826 379h1v1h-1zM815 384h1v1h-1zM805 389h1v1h-1zM795 393h1v1h-1zM785 398h1v1h-1zM775 403h1v1h-1zM765 408h1v1h-1zM755 413h1v1h-1zM744 417h1v1h-1zM734 422h1v1h-1zM724 427h1v1h-1zM714 432h1v1h-1zM704 437h1v1h-1zM694 441h1v1h-1zM684 446h1v1h-1zM674 451h1v1h-1zM663 456h1v1h-1zM653 461h1v1h-1zM643 465h1v1h-1zM633 470h1v1h-1zM623 475h1v1h-1zM613 480h1v1h-1zM603 485h1v1h-1zM593 489h1v1h-1zM582 494h1v1h-1zM572 499h1v1h-1zM562 504h1v1h-1zM552 509h1v1h-1zM542 513h1v1h-1zM532 518h1v1h-1zM522 523h1v1h-1zM511 528h1v1h-1zM501 533h1v1h-1zM491 537h1v1h-1zM481 542h1v1h-1zM471 547h1v1h-1zM461 552h1v1h-1zM451 557h1v1h-1zM441 561h1v1h-1zM430 566h1v1h-1zM420 571h1v1h-1zM410 576h1v1h-1zM400 581h1v1h-1zM390 585h1v1h-1zM380 590h1v1h-1zM370 595h1v1h-1zM360 600h1v1h-1zM349 605h1v1h-1zM974 320h1v1h-1zM964 324h1v1h-1zM954 329h1v1h-1zM944 334h1v1h-1zM933 339h1v1h-1zM923 344h1v1h-1zM913 348h1v1h-1zM903 353h1v1h-1zM893 358h1v1h-1zM883 363h1v1h-1zM873 368h1v1h-1zM863 372h1v1h-1zM852 377h1v1h-1zM842 382h1v1h-1zM832 387h1v1h-1zM822 392h1v1h-1zM812 396h1v1h-1zM802 401h1v1h-1zM792 406h1v1h-1zM782 411h1v1h-1zM771 416h1v1h-1zM761 420h1v1h-1zM751 425h1v1h-1zM741 430h1v1h-1zM731 435h1v1h-1zM721 440h1v1h-1zM711 444h1v1h-1zM700 449h1v1h-1zM690 454h1v1h-1zM680 459h1v1h-1zM670 464h1v1h-1zM660 468h1v1h-1zM650 473h1v1h-1zM640 478h1v1h-1zM630 483h1v1h-1zM619 488h1v1h-1zM609 492h1v1h-1zM599 497h1v1h-1zM589 502h1v1h-1zM579 507h1v1h-1zM569 512h1v1h-1zM559 516h1v1h-1zM549 521h1v1h-1zM538 526h1v1h-1zM528 531h1v1h-1zM518 536h1v1h-1zM508 540h1v1h-1zM498 545h1v1h-1zM488 550h1v1h-1zM478 555h1v1h-1zM467 560h1v1h-1zM457 564h1v1h-1zM447 569h1v1h-1zM437 574h1v1h-1zM427 579h1v1h-1zM417 584h1v1h-1zM407 588h1v1h-1zM397 593h1v1h-1zM386 598h1v1h-1zM376 603h1v1h-1zM366 608h1v1h-1zM991 323h1v1h-1zM981 327h1v1h-1zM971 332h1v1h-1zM960 337h1v1h-1zM950 342h1v1h-1zM940 347h1v1h-1zM930 351h1v1h-1zM920 356h1v1h-1zM910 361h1v1h-1zM900 366h1v1h-1zM890 371h1v1h-1zM879 375h1v1h-1zM869 380h1v1h-1zM859 385h1v1h-1zM849 390h1v1h-1zM839 395h1v1h-1zM829 399h1v1h-1zM819 404h1v1h-1zM808 409h1v1h-1zM798 414h1v1h-1zM788 419h1v1h-1zM778 423h1v1h-1zM768 428h1v1h-1zM758 433h1v1h-1zM748 438h1v1h-1zM738 443h1v1h-1zM727 447h1v1h-1zM717 452h1v1h-1zM707 457h1v1h-1zM697 462h1v1h-1zM687 467h1v1h-1zM677 471h1v1h-1zM667 476h1v1h-1zM657 481h1v1h-1zM646 486h1v1h-1zM636 491h1v1h-1zM626 495h1v1h-1zM616 500h1v1h-1zM606 505h1v1h-1zM596 510h1v1h-1zM586 515h1v1h-1zM575 519h1v1h-1zM565 524h1v1h-1zM555 529h1v1h-1zM545 534h1v1h-1zM535 539h1v1h-1zM525 543h1v1h-1zM515 548h1v1h-1zM505 553h1v1h-1zM494 558h1v1h-1zM484 563h1v1h-1zM474 567h1v1h-1zM464 572h1v1h-1zM454 577h1v1h-1zM444 582h1v1h-1zM434 587h1v1h-1zM424 591h1v1h-1zM413 596h1v1h-1zM403 601h1v1h-1zM393 606h1v1h-1zM383 611h1v1h-1zM1008 325h1v1h-1zM997 330h1v1h-1zM987 335h1v1h-1zM977 340h1v1h-1zM967 345h1v1h-1zM957 349h1v1h-1zM947 354h1v1h-1zM937 359h1v1h-1zM927 364h1v1h-1zM916 369h1v1h-1zM906 373h1v1h-1zM896 378h1v1h-1zM886 383h1v1h-1zM876 388h1v1h-1zM866 393h1v1h-1zM856 397h1v1h-1zM846 402h1v1h-1zM835 407h1v1h-1zM825 412h1v1h-1zM815 417h1v1h-1zM805 421h1v1h-1zM795 426h1v1h-1zM785 431h1v1h-1zM775 436h1v1h-1zM764 441h1v1h-1zM754 445h1v1h-1zM744 450h1v1h-1zM734 455h1v1h-1zM724 460h1v1h-1zM714 465h1v1h-1zM704 469h1v1h-1zM694 474h1v1h-1zM683 479h1v1h-1zM673 484h1v1h-1zM663 489h1v1h-1zM653 493h1v1h-1zM643 498h1v1h-1zM633 503h1v1h-1zM623 508h1v1h-1zM613 513h1v1h-1zM602 517h1v1h-1zM592 522h1v1h-1zM582 527h1v1h-1zM572 532h1v1h-1zM562 537h1v1h-1zM552 541h1v1h-1zM542 546h1v1h-1zM531 551h1v1h-1zM521 556h1v1h-1zM511 561h1v1h-1zM501 565h1v1h-1zM491 570h1v1h-1zM481 575h1v1h-1zM471 580h1v1h-1zM461 585h1v1h-1zM450 589h1v1h-1zM440 594h1v1h-1zM430 599h1v1h-1zM420 604h1v1h-1zM410 609h1v1h-1zM400 613h1v1h-1zM1024 328h1v1h-1zM1014 333h1v1h-1zM1004 338h1v1h-1zM994 343h1v1h-1zM984 348h1v1h-1zM974 352h1v1h-1zM964 357h1v1h-1zM953 362h1v1h-1zM943 367h1v1h-1zM933 372h1v1h-1zM923 376h1v1h-1zM913 381h1v1h-1zM903 386h1v1h-1zM893 391h1v1h-1zM883 396h1v1h-1zM872 400h1v1h-1zM862 405h1v1h-1zM852 410h1v1h-1zM842 415h1v1h-1zM832 420h1v1h-1zM822 424h1v1h-1zM812 429h1v1h-1zM802 434h1v1h-1zM791 439h1v1h-1zM781 444h1v1h-1zM771 448h1v1h-1zM761 453h1v1h-1zM751 458h1v1h-1zM741 463h1v1h-1zM731 468h1v1h-1zM721 472h1v1h-1zM710 477h1v1h-1zM700 482h1v1h-1zM690 487h1v1h-1zM680 492h1v1h-1zM670 496h1v1h-1zM660 501h1v1h-1zM650 506h1v1h-1zM639 511h1v1h-1zM629 516h1v1h-1zM619 520h1v1h-1zM609 525h1v1h-1zM599 530h1v1h-1zM589 535h1v1h-1zM579 540h1v1h-1zM569 544h1v1h-1zM558 549h1v1h-1zM548 554h1v1h-1zM538 559h1v1h-1zM528 564h1v1h-1zM518 568h1v1h-1zM508 573h1v1h-1zM498 578h1v1h-1zM488 583h1v1h-1zM477 588h1v1h-1zM467 592h1v1h-1zM457 597h1v1h-1zM447 602h1v1h-1zM437 607h1v1h-1zM427 612h1v1h-1zM417 616h1v1h-1zM1041 331h1v1h-1zM1031 336h1v1h-1zM1021 341h1v1h-1zM1011 346h1v1h-1zM1001 350h1v1h-1zM991 355h1v1h-1zM980 360h1v1h-1zM970 365h1v1h-1zM960 370h1v1h-1zM950 374h1v1h-1zM940 379h1v1h-1zM930 384h1v1h-1zM920 389h1v1h-1zM910 394h1v1h-1zM899 398h1v1h-1zM889 403h1v1h-1zM879 408h1v1h-1zM869 413h1v1h-1zM859 418h1v1h-1zM849 422h1v1h-1zM839 427h1v1h-1zM828 432h1v1h-1zM818 437h1v1h-1zM808 442h1v1h-1zM798 446h1v1h-1zM788 451h1v1h-1zM778 456h1v1h-1zM768 461h1v1h-1zM758 466h1v1h-1zM747 470h1v1h-1zM737 475h1v1h-1zM727 480h1v1h-1zM717 485h1v1h-1zM707 490h1v1h-1zM697 494h1v1h-1zM687 499h1v1h-1zM677 504h1v1h-1zM666 509h1v1h-1zM656 514h1v1h-1zM646 518h1v1h-1zM636 523h1v1h-1zM626 528h1v1h-1zM616 533h1v1h-1zM606 538h1v1h-1zM595 542h1v1h-1zM585 547h1v1h-1zM575 552h1v1h-1zM565 557h1v1h-1zM555 562h1v1h-1zM545 566h1v1h-1zM535 571h1v1h-1zM525 576h1v1h-1zM514 581h1v1h-1zM504 586h1v1h-1zM494 590h1v1h-1zM484 595h1v1h-1zM474 600h1v1h-1zM464 605h1v1h-1zM454 610h1v1h-1zM444 614h1v1h-1zM433 619h1v1h-1zM1038 344h1v1h-1zM1028 349h1v1h-1zM1017 353h1v1h-1zM1007 358h1v1h-1zM997 363h1v1h-1zM987 368h1v1h-1zM977 373h1v1h-1zM967 377h1v1h-1zM957 382h1v1h-1zM947 387h1v1h-1zM936 392h1v1h-1zM926 397h1v1h-1zM916 401h1v1h-1zM906 406h1v1h-1zM896 411h1v1h-1zM886 416h1v1h-1zM876 421h1v1h-1zM866 425h1v1h-1zM855 430h1v1h-1zM845 435h1v1h-1zM835 440h1v1h-1zM825 445h1v1h-1zM815 449h1v1h-1zM805 454h1v1h-1zM795 459h1v1h-1zM784 464h1v1h-1zM774 469h1v1h-1zM764 473h1v1h-1zM754 478h1v1h-1zM744 483h1v1h-1zM734 488h1v1h-1zM724 493h1v1h-1zM714 497h1v1h-1zM703 502h1v1h-1zM693 507h1v1h-1zM683 512h1v1h-1zM673 517h1v1h-1zM663 521h1v1h-1zM653 526h1v1h-1zM643 531h1v1h-1zM633 536h1v1h-1zM622 541h1v1h-1zM612 545h1v1h-1zM602 550h1v1h-1zM592 555h1v1h-1zM582 560h1v1h-1zM572 565h1v1h-1zM562 569h1v1h-1zM552 574h1v1h-1zM541 579h1v1h-1zM531 584h1v1h-1zM521 589h1v1h-1zM511 593h1v1h-1zM501 598h1v1h-1zM491 603h1v1h-1zM481 608h1v1h-1zM470 613h1v1h-1zM460 617h1v1h-1zM450 622h1v1h-1zM1044 351h1v1h-1zM1034 356h1v1h-1zM1024 361h1v1h-1zM1014 366h1v1h-1zM1004 371h1v1h-1zM994 375h1v1h-1zM984 380h1v1h-1zM974 385h1v1h-1zM963 390h1v1h-1zM953 395h1v1h-1zM943 399h1v1h-1zM933 404h1v1h-1zM923 409h1v1h-1zM913 414h1v1h-1zM903 419h1v1h-1zM892 423h1v1h-1zM882 428h1v1h-1zM872 433h1v1h-1zM862 438h1v1h-1zM852 443h1v1h-1zM842 447h1v1h-1zM832 452h1v1h-1zM822 457h1v1h-1zM811 462h1v1h-1zM801 467h1v1h-1zM791 471h1v1h-1zM781 476h1v1h-1zM771 481h1v1h-1zM761 486h1v1h-1zM751 491h1v1h-1zM741 495h1v1h-1zM730 500h1v1h-1zM720 505h1v1h-1zM710 510h1v1h-1zM700 515h1v1h-1zM690 519h1v1h-1zM680 524h1v1h-1zM670 529h1v1h-1zM659 534h1v1h-1zM649 539h1v1h-1zM639 543h1v1h-1zM629 548h1v1h-1zM619 553h1v1h-1zM609 558h1v1h-1zM599 563h1v1h-1zM589 567h1v1h-1zM578 572h1v1h-1zM568 577h1v1h-1zM558 582h1v1h-1zM548 587h1v1h-1zM538 591h1v1h-1zM528 596h1v1h-1zM518 601h1v1h-1zM508 606h1v1h-1zM497 611h1v1h-1zM487 615h1v1h-1zM477 620h1v1h-1zM467 625h1v1h-1zM1041 364h1v1h-1zM1031 369h1v1h-1zM1021 374h1v1h-1zM1011 378h1v1h-1zM1000 383h1v1h-1zM990 388h1v1h-1zM980 393h1v1h-1zM970 398h1v1h-1zM960 402h1v1h-1zM950 407h1v1h-1zM940 412h1v1h-1zM930 417h1v1h-1zM919 422h1v1h-1zM909 426h1v1h-1zM899 431h1v1h-1zM889 436h1v1h-1zM879 441h1v1h-1zM869 446h1v1h-1zM859 450h1v1h-1zM848 455h1v1h-1zM838 460h1v1h-1zM828 465h1v1h-1zM818 470h1v1h-1zM808 474h1v1h-1zM798 479h1v1h-1zM788 484h1v1h-1zM778 489h1v1h-1zM767 494h1v1h-1zM757 498h1v1h-1zM747 503h1v1h-1zM737 508h1v1h-1zM727 513h1v1h-1zM717 518h1v1h-1zM707 522h1v1h-1zM697 527h1v1h-1zM686 532h1v1h-1zM676 537h1v1h-1zM666 542h1v1h-1zM656 546h1v1h-1zM646 551h1v1h-1zM636 556h1v1h-1zM626 561h1v1h-1zM615 566h1v1h-1zM605 570h1v1h-1zM595 575h1v1h-1zM585 580h1v1h-1zM575 585h1v1h-1zM565 590h1v1h-1zM555 594h1v1h-1zM545 599h1v1h-1zM534 604h1v1h-1zM524 609h1v1h-1zM514 614h1v1h-1zM504 618h1v1h-1zM494 623h1v1h-1zM1037 376h1v1h-1zM1027 381h1v1h-1zM1017 386h1v1h-1zM1007 391h1v1h-1zM997 396h1v1h-1zM987 400h1v1h-1zM977 405h1v1h-1zM967 410h1v1h-1zM956 415h1v1h-1zM946 420h1v1h-1zM936 424h1v1h-1zM926 429h1v1h-1zM916 434h1v1h-1zM906 439h1v1h-1zM896 444h1v1h-1zM886 448h1v1h-1zM875 453h1v1h-1zM865 458h1v1h-1zM855 463h1v1h-1zM845 468h1v1h-1zM835 472h1v1h-1zM825 477h1v1h-1zM815 482h1v1h-1zM805 487h1v1h-1zM794 492h1v1h-1zM784 496h1v1h-1zM774 501h1v1h-1zM764 506h1v1h-1zM754 511h1v1h-1zM744 516h1v1h-1zM734 520h1v1h-1zM723 525h1v1h-1zM713 530h1v1h-1zM703 535h1v1h-1zM693 540h1v1h-1zM683 544h1v1h-1zM673 549h1v1h-1zM663 554h1v1h-1zM653 559h1v1h-1zM642 564h1v1h-1zM632 568h1v1h-1zM622 573h1v1h-1zM612 578h1v1h-1zM602 583h1v1h-1zM592 588h1v1h-1zM582 592h1v1h-1zM572 597h1v1h-1zM561 602h1v1h-1zM551 607h1v1h-1zM541 612h1v1h-1zM531 616h1v1h-1zM521 621h1v1h-1zM511 626h1v1h-1zM1044 384h1v1h-1zM1034 389h1v1h-1zM1024 394h1v1h-1zM1014 399h1v1h-1zM1004 403h1v1h-1zM994 408h1v1h-1zM983 413h1v1h-1zM973 418h1v1h-1zM963 423h1v1h-1zM953 427h1v1h-1zM943 432h1v1h-1zM933 437h1v1h-1zM923 442h1v1h-1zM912 447h1v1h-1zM902 451h1v1h-1zM892 456h1v1h-1zM882 461h1v1h-1zM872 466h1v1h-1zM862 471h1v1h-1zM852 475h1v1h-1zM842 480h1v1h-1zM831 485h1v1h-1zM821 490h1v1h-1zM811 495h1v1h-1zM801 499h1v1h-1zM791 504h1v1h-1zM781 509h1v1h-1zM771 514h1v1h-1zM761 519h1v1h-1zM750 523h1v1h-1zM740 528h1v1h-1zM730 533h1v1h-1zM720 538h1v1h-1zM710 543h1v1h-1zM700 547h1v1h-1zM690 552h1v1h-1zM679 557h1v1h-1zM669 562h1v1h-1zM659 567h1v1h-1zM649 571h1v1h-1zM639 576h1v1h-1zM629 581h1v1h-1zM619 586h1v1h-1zM609 591h1v1h-1zM598 595h1v1h-1zM588 600h1v1h-1zM578 605h1v1h-1zM568 610h1v1h-1zM558 615h1v1h-1zM548 619h1v1h-1zM538 624h1v1h-1zM1041 397h1v1h-1zM1031 401h1v1h-1zM1020 406h1v1h-1zM1010 411h1v1h-1zM1000 416h1v1h-1zM990 421h1v1h-1zM980 425h1v1h-1zM970 430h1v1h-1zM960 435h1v1h-1zM950 440h1v1h-1zM939 445h1v1h-1zM929 449h1v1h-1zM919 454h1v1h-1zM909 459h1v1h-1zM899 464h1v1h-1zM889 469h1v1h-1zM879 473h1v1h-1zM868 478h1v1h-1zM858 483h1v1h-1zM848 488h1v1h-1zM838 493h1v1h-1zM828 497h1v1h-1zM818 502h1v1h-1zM808 507h1v1h-1zM798 512h1v1h-1zM787 517h1v1h-1zM777 521h1v1h-1zM767 526h1v1h-1zM757 531h1v1h-1zM747 536h1v1h-1zM737 541h1v1h-1zM727 545h1v1h-1zM717 550h1v1h-1zM706 555h1v1h-1zM696 560h1v1h-1zM686 565h1v1h-1zM676 569h1v1h-1zM666 574h1v1h-1zM656 579h1v1h-1zM646 584h1v1h-1zM636 589h1v1h-1zM625 593h1v1h-1zM615 598h1v1h-1zM605 603h1v1h-1zM595 608h1v1h-1zM585 613h1v1h-1zM575 617h1v1h-1zM565 622h1v1h-1zM1037 409h1v1h-1zM1027 414h1v1h-1zM1017 419h1v1h-1zM1007 424h1v1h-1zM997 428h1v1h-1zM987 433h1v1h-1zM976 438h1v1h-1zM966 443h1v1h-1zM956 448h1v1h-1zM946 452h1v1h-1zM936 457h1v1h-1zM926 462h1v1h-1zM916 467h1v1h-1zM906 472h1v1h-1zM895 476h1v1h-1zM885 481h1v1h-1zM875 486h1v1h-1zM865 491h1v1h-1zM855 496h1v1h-1zM845 500h1v1h-1zM835 505h1v1h-1zM825 510h1v1h-1zM814 515h1v1h-1zM804 520h1v1h-1zM794 524h1v1h-1zM784 529h1v1h-1zM774 534h1v1h-1zM764 539h1v1h-1zM754 544h1v1h-1zM743 548h1v1h-1zM733 553h1v1h-1zM723 558h1v1h-1zM713 563h1v1h-1zM703 568h1v1h-1zM693 572h1v1h-1zM683 577h1v1h-1zM673 582h1v1h-1zM662 587h1v1h-1zM652 592h1v1h-1zM642 596h1v1h-1zM632 601h1v1h-1zM622 606h1v1h-1zM612 611h1v1h-1zM602 616h1v1h-1zM592 620h1v1h-1zM581 625h1v1h-1z" fill="#666666" shape-rendering="crispEdges"/>
<line x1="502.9" y1="171.4" x2="536.2" y2="205.2" stroke="#857a6c" stroke-width="1.3"/>
<line x1="586.9" y1="181.2" x2="452.2" y2="195.4" stroke="#857a6c" stroke-width="1.3"/>
<line x1="353.9" y1="242.4" x2="550.5" y2="149.3" stroke="#81776a" stroke-width="5.2"/><line x1="353.9" y1="242.4" x2="550.5" y2="149.3" stroke="#978d80" stroke-width="2.4"/>
<line x1="395.9" y1="247.3" x2="592.5" y2="154.2" stroke="#81776a" stroke-width="5.2"/><line x1="395.9" y1="247.3" x2="592.5" y2="154.2" stroke="#978d80" stroke-width="2.4"/>
<line x1="586.9" y1="181.2" x2="620.2" y2="219.8" stroke="#857a6c" stroke-width="1.3"/>
<line x1="670.9" y1="195.8" x2="536.2" y2="205.2" stroke="#857a6c" stroke-width="1.3"/>
<line x1="437.9" y1="252.2" x2="634.5" y2="159.1" stroke="#81776a" stroke-width="5.2"/><line x1="437.9" y1="252.2" x2="634.5" y2="159.1" stroke="#978d80" stroke-width="2.4"/>
<line x1="479.9" y1="257.1" x2="676.5" y2="164.0" stroke="#81776a" stroke-width="5.2"/><line x1="479.9" y1="257.1" x2="676.5" y2="164.0" stroke="#978d80" stroke-width="2.4"/>
<line x1="670.9" y1="195.8" x2="704.2" y2="239.1" stroke="#857a6c" stroke-width="1.3"/>
<line x1="754.9" y1="215.1" x2="620.2" y2="219.8" stroke="#857a6c" stroke-width="1.3"/>
<line x1="521.9" y1="266.8" x2="718.5" y2="173.6" stroke="#81776a" stroke-width="5.2"/><line x1="521.9" y1="266.8" x2="718.5" y2="173.6" stroke="#978d80" stroke-width="2.4"/>
<line x1="563.9" y1="276.4" x2="760.5" y2="183.3" stroke="#81776a" stroke-width="5.2"/><line x1="563.9" y1="276.4" x2="760.5" y2="183.3" stroke="#978d80" stroke-width="2.4"/>
<line x1="605.9" y1="286.1" x2="802.5" y2="193.0" stroke="#81776a" stroke-width="5.2"/><line x1="605.9" y1="286.1" x2="802.5" y2="193.0" stroke="#978d80" stroke-width="2.4"/>
<polygon points="548.5,306.5 573.7,310.9 573.7,318.0 558.5,325.2 533.3,320.9 533.3,313.7" fill="#c4c4c4" fill-opacity="0.68"/><polygon points="548.5,306.5 573.7,310.9 558.5,318.1 533.3,313.7" fill="#dadada" fill-opacity="0.35"/><rect x="552.5" y="309.5" width="1" height="1" fill="#e03838" opacity="0.75"/><rect x="535.4" y="316.6" width="1" height="1" fill="#e03838" opacity="0.75"/><rect x="555.6" y="308.3" width="1" height="1" fill="#38b838" opacity="0.75"/><rect x="539.1" y="318.2" width="1" height="1" fill="#3a48d8" opacity="0.75"/><rect x="538.9" y="318.5" width="1" height="1" fill="#3a48d8" opacity="0.75"/><rect x="547.6" y="317.5" width="1" height="1" fill="#e03838" opacity="0.75"/><rect x="561.7" y="321.5" width="1" height="1" fill="#e03838" opacity="0.75"/><rect x="565.3" y="317.2" width="1" height="1" fill="#d8c838" opacity="0.75"/><rect x="553.6" y="316.2" width="1" height="1" fill="#d8c838" opacity="0.75"/><rect x="564.1" y="310.3" width="1" height="1" fill="#38b838" opacity="0.75"/><rect x="560.3" y="309.6" width="1" height="1" fill="#d8c838" opacity="0.75"/><rect x="548.3" y="321.9" width="1" height="1" fill="#e03838" opacity="0.75"/><rect x="547.3" y="317.6" width="1" height="1" fill="#e03838" opacity="0.75"/><rect x="547.3" y="318.1" width="1" height="1" fill="#3a48d8" opacity="0.75"/><rect x="553.0" y="319.1" width="1" height="1" fill="#e03838" opacity="0.75"/><rect x="543.7" y="316.8" width="1" height="1" fill="#3a48d8" opacity="0.75"/><rect x="567.2" y="314.6" width="1" height="1" fill="#38b838" opacity="0.75"/><rect x="565.8" y="317.7" width="1" height="1" fill="#d8c838" opacity="0.75"/><rect x="556.0" y="311.1" width="1" height="1" fill="#e03838" opacity="0.75"/><rect x="538.6" y="315.9" width="1" height="1" fill="#e03838" opacity="0.75"/><rect x="555.0" y="320.7" width="1" height="1" fill="#e03838" opacity="0.75"/><rect x="544.9" y="317.4" width="1" height="1" fill="#3a48d8" opacity="0.75"/><rect x="555.6" y="320.4" width="1" height="1" fill="#3a48d8" opacity="0.75"/><rect x="543.8" y="312.7" width="1" height="1" fill="#38b838" opacity="0.75"/><rect x="560.0" y="315.6" width="1" height="1" fill="#38b838" opacity="0.75"/><rect x="566.3" y="310.9" width="1" height="1" fill="#d8c838" opacity="0.75"/><rect x="556.2" y="322.3" width="1" height="1" fill="#3a48d8" opacity="0.75"/><rect x="547.7" y="311.0" width="1" height="1" fill="#e03838" opacity="0.75"/><rect x="550.5" y="311.9" width="1" height="1" fill="#d8c838" opacity="0.75"/><rect x="539.9" y="318.5" width="1" height="1" fill="#e03838" opacity="0.75"/><rect x="543.3" y="309.5" width="1" height="1" fill="#38b838" opacity="0.75"/><rect x="546.9" y="314.8" width="1" height="1" fill="#d8c838" opacity="0.75"/><rect x="545.7" y="311.7" width="1" height="1" fill="#d8c838" opacity="0.75"/><rect x="550.9" y="308.4" width="1" height="1" fill="#d8c838" opacity="0.75"/><rect x="543.8" y="316.5" width="1" height="1" fill="#3a48d8" opacity="0.75"/><rect x="553.2" y="308.2" width="1" height="1" fill="#38b838" opacity="0.75"/><rect x="534.2" y="318.7" width="1" height="1" fill="#3a48d8" opacity="0.75"/><rect x="546.6" y="318.9" width="1" height="1" fill="#e03838" opacity="0.75"/><rect x="535.6" y="316.8" width="1" height="1" fill="#e03838" opacity="0.75"/><rect x="545.8" y="321.7" width="1" height="1" fill="#3a48d8" opacity="0.75"/><rect x="546.3" y="313.3" width="1" height="1" fill="#d8c838" opacity="0.75"/><rect x="548.3" y="318.0" width="1" height="1" fill="#3a48d8" opacity="0.75"/><rect x="539.3" y="315.6" width="1" height="1" fill="#e03838" opacity="0.75"/><rect x="546.4" y="318.0" width="1" height="1" fill="#e03838" opacity="0.75"/><rect x="569.4" y="315.5" width="1" height="1" fill="#3a48d8" opacity="0.75"/><rect x="557.6" y="313.5" width="1" height="1" fill="#e03838" opacity="0.75"/><rect x="547.4" y="321.0" width="1" height="1" fill="#3a48d8" opacity="0.75"/><rect x="571.1" y="317.4" width="1" height="1" fill="#e03838" opacity="0.75"/><rect x="565.3" y="316.6" width="1" height="1" fill="#3a48d8" opacity="0.75"/><rect x="558.8" y="318.6" width="1" height="1" fill="#d8c838" opacity="0.75"/><rect x="552.3" y="321.7" width="1" height="1" fill="#e03838" opacity="0.75"/><rect x="559.2" y="308.5" width="1" height="1" fill="#38b838" opacity="0.75"/><rect x="563.2" y="317.6" width="1" height="1" fill="#38b838" opacity="0.75"/><rect x="561.5" y="318.4" width="1" height="1" fill="#d8c838" opacity="0.75"/><rect x="555.9" y="323.4" width="1" height="1" fill="#e03838" opacity="0.75"/><rect x="546.7" y="309.8" width="1" height="1" fill="#38b838" opacity="0.75"/><rect x="571.3" y="315.8" width="1" height="1" fill="#e03838" opacity="0.75"/><rect x="547.7" y="307.1" width="1" height="1" fill="#d8c838" opacity="0.75"/><rect x="549.2" y="321.2" width="1" height="1" fill="#e03838" opacity="0.75"/><rect x="561.7" y="309.1" width="1" height="1" fill="#d8c838" opacity="0.75"/><ellipse cx="553.5" cy="312.3" rx="3.2" ry="2.3" fill="#c07858" opacity="0.55"/><path d="M548.5 306.5L548.5 313.7L573.7 318.0M548.5 313.7L533.3 320.9" stroke="#1d8585" stroke-width="1.1" fill="none" opacity="0.95"/><path d="M548.5 306.5L573.7 310.9L558.5 318.1L533.3 313.7Z M533.3 313.7L533.3 320.9L558.5 325.2L573.7 318.0L573.7 310.9 M558.5 318.1L558.5 325.2" stroke="#1d8383" stroke-width="1.3" fill="none" stroke-linejoin="round"/>
<polygon points="546.8,153.4 560.2,154.4 560.2,311.6 546.8,311.6" fill="rgba(82,141,202,0.80)"/><rect x="553.5" y="154.4" width="6.8" height="156.9" fill="rgba(255,255,255,0.05)"/>
<polygon points="634.2,323.0 651.0,325.9 651.0,331.9 640.8,336.7 624.0,333.8 624.0,327.8" fill="#c4c4c4" fill-opacity="0.68"/><polygon points="634.2,323.0 651.0,325.9 640.8,330.7 624.0,327.8" fill="#dadada" fill-opacity="0.35"/><rect x="649.1" y="328.3" width="1" height="1" fill="#e03838" opacity="0.75"/><rect x="636.3" y="332.1" width="1" height="1" fill="#3a48d8" opacity="0.75"/><rect x="637.1" y="324.0" width="1" height="1" fill="#d8c838" opacity="0.75"/><rect x="637.8" y="330.5" width="1" height="1" fill="#3a48d8" opacity="0.75"/><rect x="630.0" y="332.3" width="1" height="1" fill="#3a48d8" opacity="0.75"/><rect x="624.8" y="331.4" width="1" height="1" fill="#e03838" opacity="0.75"/><rect x="633.2" y="326.5" width="1" height="1" fill="#d8c838" opacity="0.75"/><rect x="628.5" y="333.5" width="1" height="1" fill="#3a48d8" opacity="0.75"/><rect x="642.3" y="325.9" width="1" height="1" fill="#d8c838" opacity="0.75"/><rect x="634.7" y="330.8" width="1" height="1" fill="#e03838" opacity="0.75"/><rect x="643.6" y="330.5" width="1" height="1" fill="#d8c838" opacity="0.75"/><rect x="639.7" y="324.7" width="1" height="1" fill="#e03838" opacity="0.75"/><rect x="630.6" y="331.3" width="1" height="1" fill="#e03838" opacity="0.75"/><rect x="633.4" y="330.6" width="1" height="1" fill="#3a48d8" opacity="0.75"/><rect x="630.9" y="324.4" width="1" height="1" fill="#d8c838" opacity="0.75"/><rect x="639.2" y="330.8" width="1" height="1" fill="#e03838" opacity="0.75"/><rect x="632.1" y="331.1" width="1" height="1" fill="#e03838" opacity="0.75"/><rect x="630.9" y="333.2" width="1" height="1" fill="#e03838" opacity="0.75"/><rect x="637.0" y="333.3" width="1" height="1" fill="#e03838" opacity="0.75"/><rect x="624.8" y="330.4" width="1" height="1" fill="#e03838" opacity="0.75"/><rect x="636.0" y="325.8" width="1" height="1" fill="#38b838" opacity="0.75"/><rect x="636.5" y="326.2" width="1" height="1" fill="#38b838" opacity="0.75"/><rect x="636.7" y="334.5" width="1" height="1" fill="#3a48d8" opacity="0.75"/><rect x="635.7" y="331.2" width="1" height="1" fill="#e03838" opacity="0.75"/><rect x="627.4" y="330.5" width="1" height="1" fill="#3a48d8" opacity="0.75"/><rect x="624.7" y="331.8" width="1" height="1" fill="#e03838" opacity="0.75"/><rect x="632.1" y="333.9" width="1" height="1" fill="#3a48d8" opacity="0.75"/><rect x="630.9" y="330.7" width="1" height="1" fill="#e03838" opacity="0.75"/><rect x="630.8" y="326.6" width="1" height="1" fill="#e03838" opacity="0.75"/><rect x="626.3" y="332.1" width="1" height="1" fill="#3a48d8" opacity="0.75"/><rect x="625.2" y="328.5" width="1" height="1" fill="#e03838" opacity="0.75"/><rect x="643.6" y="327.8" width="1" height="1" fill="#38b838" opacity="0.75"/><rect x="645.4" y="330.1" width="1" height="1" fill="#e03838" opacity="0.75"/><rect x="633.6" y="333.6" width="1" height="1" fill="#e03838" opacity="0.75"/><rect x="630.1" y="327.8" width="1" height="1" fill="#38b838" opacity="0.75"/><rect x="629.7" y="327.0" width="1" height="1" fill="#d8c838" opacity="0.75"/><rect x="642.9" y="326.3" width="1" height="1" fill="#38b838" opacity="0.75"/><rect x="638.8" y="333.9" width="1" height="1" fill="#3a48d8" opacity="0.75"/><rect x="633.7" y="326.6" width="1" height="1" fill="#38b838" opacity="0.75"/><rect x="625.0" y="331.6" width="1" height="1" fill="#e03838" opacity="0.75"/><ellipse cx="637.5" cy="326.9" rx="2.3" ry="1.7" fill="#c07858" opacity="0.55"/><path d="M634.2 323.0L634.2 329.0L651.0 331.9M634.2 329.0L624.0 333.8" stroke="#1d8585" stroke-width="1.1" fill="none" opacity="0.95"/><path d="M634.2 323.0L651.0 325.9L640.8 330.7L624.0 327.8Z M624.0 327.8L624.0 333.8L640.8 336.7L651.0 331.9L651.0 325.9 M640.8 330.7L640.8 336.7" stroke="#1d8383" stroke-width="1.3" fill="none" stroke-linejoin="round"/>
<polygon points="633.6,166.6 641.4,167.6 641.4,326.2 633.6,326.2" fill="rgba(82,141,202,0.80)"/><rect x="637.5" y="167.6" width="3.9" height="158.2" fill="rgba(255,255,255,0.05)"/>
<polygon points="497.8,330.5 523.0,334.9 523.0,342.0 507.9,349.2 482.7,344.9 482.7,337.7" fill="#c4c4c4" fill-opacity="0.68"/><polygon points="497.8,330.5 523.0,334.9 507.9,342.1 482.7,337.7" fill="#dadada" fill-opacity="0.35"/><rect x="499.3" y="336.7" width="1" height="1" fill="#e03838" opacity="0.75"/><rect x="495.1" y="343.8" width="1" height="1" fill="#e03838" opacity="0.75"/><rect x="498.9" y="344.0" width="1" height="1" fill="#e03838" opacity="0.75"/><rect x="493.5" y="341.4" width="1" height="1" fill="#3a48d8" opacity="0.75"/><rect x="519.9" y="336.6" width="1" height="1" fill="#3a48d8" opacity="0.75"/><rect x="502.2" y="344.9" width="1" height="1" fill="#e03838" opacity="0.75"/><rect x="505.1" y="334.3" width="1" height="1" fill="#38b838" opacity="0.75"/><rect x="520.8" y="336.1" width="1" height="1" fill="#3a48d8" opacity="0.75"/><rect x="503.7" y="334.4" width="1" height="1" fill="#d8c838" opacity="0.75"/><rect x="501.3" y="333.6" width="1" height="1" fill="#d8c838" opacity="0.75"/><rect x="497.3" y="340.8" width="1" height="1" fill="#3a48d8" opacity="0.75"/><rect x="505.6" y="343.3" width="1" height="1" fill="#e03838" opacity="0.75"/><rect x="499.2" y="344.5" width="1" height="1" fill="#e03838" opacity="0.75"/><rect x="504.8" y="345.8" width="1" height="1" fill="#3a48d8" opacity="0.75"/><rect x="493.9" y="343.2" width="1" height="1" fill="#3a48d8" opacity="0.75"/><rect x="505.1" y="347.1" width="1" height="1" fill="#3a48d8" opacity="0.75"/><rect x="498.7" y="341.6" width="1" height="1" fill="#3a48d8" opacity="0.75"/><rect x="490.5" y="340.1" width="1" height="1" fill="#3a48d8" opacity="0.75"/><rect x="495.5" y="340.9" width="1" height="1" fill="#e03838" opacity="0.75"/><rect x="489.8" y="340.1" width="1" height="1" fill="#e03838" opacity="0.75"/><rect x="504.7" y="347.2" width="1" height="1" fill="#e03838" opacity="0.75"/><rect x="506.0" y="343.5" width="1" height="1" fill="#3a48d8" opacity="0.75"/><rect x="488.6" y="336.5" width="1" height="1" fill="#e03838" opacity="0.75"/><rect x="511.1" y="343.8" width="1" height="1" fill="#e03838" opacity="0.75"/><rect x="490.3" y="342.0" width="1" height="1" fill="#e03838" opacity="0.75"/><rect x="507.4" y="339.8" width="1" height="1" fill="#38b838" opacity="0.75"/><rect x="493.5" y="337.3" width="1" height="1" fill="#38b838" opacity="0.75"/><rect x="492.7" y="340.4" width="1" height="1" fill="#e03838" opacity="0.75"/><rect x="508.2" y="345.8" width="1" height="1" fill="#38b838" opacity="0.75"/><rect x="485.5" y="341.0" width="1" height="1" fill="#3a48d8" opacity="0.75"/><rect x="490.7" y="341.6" width="1" height="1" fill="#e03838" opacity="0.75"/><rect x="499.3" y="345.0" width="1" height="1" fill="#e03838" opacity="0.75"/><rect x="489.9" y="340.8" width="1" height="1" fill="#3a48d8" opacity="0.75"/><rect x="500.0" y="344.7" width="1" height="1" fill="#e03838" opacity="0.75"/><rect x="501.6" y="335.5" width="1" height="1" fill="#e03838" opacity="0.75"/><rect x="495.4" y="343.8" width="1" height="1" fill="#3a48d8" opacity="0.75"/><rect x="495.9" y="342.0" width="1" height="1" fill="#3a48d8" opacity="0.75"/><rect x="492.1" y="341.8" width="1" height="1" fill="#3a48d8" opacity="0.75"/><rect x="512.0" y="336.9" width="1" height="1" fill="#d8c838" opacity="0.75"/><rect x="483.7" y="340.3" width="1" height="1" fill="#e03838" opacity="0.75"/><rect x="496.7" y="341.7" width="1" height="1" fill="#e03838" opacity="0.75"/><rect x="486.6" y="340.5" width="1" height="1" fill="#e03838" opacity="0.75"/><rect x="484.1" y="340.1" width="1" height="1" fill="#e03838" opacity="0.75"/><rect x="502.2" y="346.6" width="1" height="1" fill="#e03838" opacity="0.75"/><rect x="495.0" y="341.4" width="1" height="1" fill="#e03838" opacity="0.75"/><rect x="519.2" y="341.4" width="1" height="1" fill="#e03838" opacity="0.75"/><rect x="510.9" y="342.8" width="1" height="1" fill="#3a48d8" opacity="0.75"/><rect x="506.7" y="333.4" width="1" height="1" fill="#e03838" opacity="0.75"/><rect x="497.7" y="343.1" width="1" height="1" fill="#e03838" opacity="0.75"/><rect x="484.9" y="342.7" width="1" height="1" fill="#e03838" opacity="0.75"/><rect x="490.8" y="343.0" width="1" height="1" fill="#e03838" opacity="0.75"/><rect x="498.0" y="342.0" width="1" height="1" fill="#3a48d8" opacity="0.75"/><rect x="518.9" y="334.7" width="1" height="1" fill="#e03838" opacity="0.75"/><rect x="495.3" y="340.7" width="1" height="1" fill="#3a48d8" opacity="0.75"/><rect x="502.1" y="343.7" width="1" height="1" fill="#3a48d8" opacity="0.75"/><rect x="498.4" y="341.9" width="1" height="1" fill="#3a48d8" opacity="0.75"/><rect x="496.6" y="343.4" width="1" height="1" fill="#3a48d8" opacity="0.75"/><rect x="498.1" y="337.0" width="1" height="1" fill="#d8c838" opacity="0.75"/><rect x="514.7" y="335.4" width="1" height="1" fill="#38b838" opacity="0.75"/><rect x="504.5" y="346.6" width="1" height="1" fill="#e03838" opacity="0.75"/><ellipse cx="502.9" cy="336.3" rx="3.2" ry="2.3" fill="#c07858" opacity="0.55"/><path d="M497.8 330.5L497.8 337.7L523.0 342.0M497.8 337.7L482.7 344.9" stroke="#1d8585" stroke-width="1.1" fill="none" opacity="0.95"/><path d="M497.8 330.5L523.0 334.9L507.9 342.1L482.7 337.7Z M482.7 337.7L482.7 344.9L507.9 349.2L523.0 342.0L523.0 334.9 M507.9 342.1L507.9 349.2" stroke="#1d8383" stroke-width="1.3" fill="none" stroke-linejoin="round"/>
<polygon points="718.2,337.5 735.0,340.5 735.0,346.5 724.8,351.3 708.0,348.4 708.0,342.3" fill="#c4c4c4" fill-opacity="0.68"/><polygon points="718.2,337.5 735.0,340.5 724.8,345.3 708.0,342.3" fill="#dadada" fill-opacity="0.35"/><rect x="721.0" y="346.2" width="1" height="1" fill="#3a48d8" opacity="0.75"/><rect x="719.9" y="338.9" width="1" height="1" fill="#38b838" opacity="0.75"/><rect x="721.0" y="347.1" width="1" height="1" fill="#3a48d8" opacity="0.75"/><rect x="714.3" y="346.6" width="1" height="1" fill="#3a48d8" opacity="0.75"/><rect x="717.3" y="348.0" width="1" height="1" fill="#3a48d8" opacity="0.75"/><rect x="718.4" y="347.9" width="1" height="1" fill="#e03838" opacity="0.75"/><rect x="708.5" y="346.8" width="1" height="1" fill="#e03838" opacity="0.75"/><rect x="728.3" y="340.5" width="1" height="1" fill="#e03838" opacity="0.75"/><rect x="713.2" y="347.7" width="1" height="1" fill="#e03838" opacity="0.75"/><rect x="715.5" y="342.2" width="1" height="1" fill="#d8c838" opacity="0.75"/><rect x="714.5" y="339.2" width="1" height="1" fill="#38b838" opacity="0.75"/><rect x="719.9" y="342.9" width="1" height="1" fill="#e03838" opacity="0.75"/><rect x="731.8" y="344.8" width="1" height="1" fill="#3a48d8" opacity="0.75"/><rect x="716.2" y="345.8" width="1" height="1" fill="#e03838" opacity="0.75"/><rect x="708.6" y="345.6" width="1" height="1" fill="#3a48d8" opacity="0.75"/><rect x="722.6" y="349.6" width="1" height="1" fill="#3a48d8" opacity="0.75"/><rect x="722.6" y="346.8" width="1" height="1" fill="#3a48d8" opacity="0.75"/><rect x="733.4" y="342.9" width="1" height="1" fill="#d8c838" opacity="0.75"/><rect x="729.0" y="343.3" width="1" height="1" fill="#e03838" opacity="0.75"/><rect x="723.6" y="339.7" width="1" height="1" fill="#38b838" opacity="0.75"/><rect x="714.1" y="344.1" width="1" height="1" fill="#e03838" opacity="0.75"/><rect x="731.6" y="340.2" width="1" height="1" fill="#38b838" opacity="0.75"/><rect x="710.3" y="344.4" width="1" height="1" fill="#3a48d8" opacity="0.75"/><rect x="733.2" y="344.3" width="1" height="1" fill="#38b838" opacity="0.75"/><rect x="719.4" y="338.8" width="1" height="1" fill="#e03838" opacity="0.75"/><rect x="722.8" y="349.2" width="1" height="1" fill="#3a48d8" opacity="0.75"/><rect x="708.8" y="344.4" width="1" height="1" fill="#3a48d8" opacity="0.75"/><rect x="716.9" y="339.1" width="1" height="1" fill="#d8c838" opacity="0.75"/><rect x="718.9" y="344.5" width="1" height="1" fill="#3a48d8" opacity="0.75"/><rect x="722.9" y="343.1" width="1" height="1" fill="#d8c838" opacity="0.75"/><rect x="721.2" y="347.1" width="1" height="1" fill="#3a48d8" opacity="0.75"/><rect x="726.0" y="345.0" width="1" height="1" fill="#3a48d8" opacity="0.75"/><rect x="721.5" y="348.5" width="1" height="1" fill="#e03838" opacity="0.75"/><rect x="712.9" y="344.3" width="1" height="1" fill="#3a48d8" opacity="0.75"/><rect x="723.1" y="338.3" width="1" height="1" fill="#38b838" opacity="0.75"/><rect x="714.3" y="345.4" width="1" height="1" fill="#3a48d8" opacity="0.75"/><rect x="718.9" y="343.0" width="1" height="1" fill="#38b838" opacity="0.75"/><rect x="729.9" y="341.3" width="1" height="1" fill="#38b838" opacity="0.75"/><rect x="717.3" y="339.7" width="1" height="1" fill="#e03838" opacity="0.75"/><rect x="718.2" y="347.5" width="1" height="1" fill="#e03838" opacity="0.75"/><ellipse cx="721.5" cy="341.4" rx="2.3" ry="1.7" fill="#c07858" opacity="0.55"/><path d="M718.2 337.5L718.2 343.6L735.0 346.5M718.2 343.6L708.0 348.4" stroke="#1d8585" stroke-width="1.1" fill="none" opacity="0.95"/><path d="M718.2 337.5L735.0 340.5L724.8 345.3L708.0 342.3Z M708.0 342.3L708.0 348.4L724.8 351.3L735.0 346.5L735.0 340.5 M724.8 345.3L724.8 351.3" stroke="#1d8383" stroke-width="1.3" fill="none" stroke-linejoin="round"/>
<polygon points="496.1,175.0 509.6,176.0 509.6,335.6 496.1,335.6" fill="rgba(82,141,202,0.80)"/><rect x="502.9" y="176.0" width="6.8" height="159.3" fill="rgba(255,255,255,0.05)"/>
<polygon points="717.6,181.2 725.4,182.2 725.4,340.7 717.6,340.7" fill="rgba(82,141,202,0.80)"/><rect x="721.5" y="182.2" width="3.9" height="158.2" fill="rgba(255,255,255,0.05)"/>
<polygon points="553.5,148.4 679.5,163.0 805.5,192.0 805.5,200.5 679.5,171.5 553.5,156.8" fill="rgba(84,146,208,0.78)"/><polyline points="553.5,149.5 679.5,164.2 805.5,193.1" fill="none" stroke="#f0f4ff" stroke-width="1" stroke-dasharray="1 1.6" opacity="0.85"/>
<polygon points="800.5,350.2 825.7,354.5 825.7,361.7 810.5,368.9 785.3,364.5 785.3,357.4" fill="#c4c4c4" fill-opacity="0.68"/><polygon points="800.5,350.2 825.7,354.5 810.5,361.7 785.3,357.4" fill="#dadada" fill-opacity="0.35"/><rect x="811.4" y="353.1" width="1" height="1" fill="#d8c838" opacity="0.75"/><rect x="790.9" y="363.7" width="1" height="1" fill="#3a48d8" opacity="0.75"/><rect x="792.2" y="363.7" width="1" height="1" fill="#3a48d8" opacity="0.75"/><rect x="805.5" y="355.8" width="1" height="1" fill="#38b838" opacity="0.75"/><rect x="786.8" y="359.5" width="1" height="1" fill="#e03838" opacity="0.75"/><rect x="813.0" y="364.4" width="1" height="1" fill="#3a48d8" opacity="0.75"/><rect x="799.7" y="354.7" width="1" height="1" fill="#e03838" opacity="0.75"/><rect x="795.0" y="362.6" width="1" height="1" fill="#e03838" opacity="0.75"/><rect x="807.7" y="366.2" width="1" height="1" fill="#e03838" opacity="0.75"/><rect x="817.1" y="355.5" width="1" height="1" fill="#38b838" opacity="0.75"/><rect x="808.4" y="365.2" width="1" height="1" fill="#3a48d8" opacity="0.75"/><rect x="820.6" y="357.9" width="1" height="1" fill="#e03838" opacity="0.75"/><rect x="792.7" y="362.1" width="1" height="1" fill="#e03838" opacity="0.75"/><rect x="821.7" y="359.0" width="1" height="1" fill="#d8c838" opacity="0.75"/><rect x="819.8" y="360.1" width="1" height="1" fill="#3a48d8" opacity="0.75"/><rect x="794.5" y="359.7" width="1" height="1" fill="#e03838" opacity="0.75"/><rect x="793.0" y="356.8" width="1" height="1" fill="#38b838" opacity="0.75"/><rect x="807.0" y="360.2" width="1" height="1" fill="#e03838" opacity="0.75"/><rect x="803.3" y="351.4" width="1" height="1" fill="#d8c838" opacity="0.75"/><rect x="808.2" y="352.0" width="1" height="1" fill="#e03838" opacity="0.75"/><rect x="802.3" y="354.5" width="1" height="1" fill="#d8c838" opacity="0.75"/><rect x="794.6" y="363.1" width="1" height="1" fill="#e03838" opacity="0.75"/><rect x="795.1" y="359.8" width="1" height="1" fill="#3a48d8" opacity="0.75"/><rect x="789.1" y="361.9" width="1" height="1" fill="#3a48d8" opacity="0.75"/><rect x="792.3" y="357.6" width="1" height="1" fill="#38b838" opacity="0.75"/><rect x="814.0" y="364.4" width="1" height="1" fill="#e03838" opacity="0.75"/><rect x="792.8" y="359.2" width="1" height="1" fill="#3a48d8" opacity="0.75"/><rect x="812.2" y="362.7" width="1" height="1" fill="#e03838" opacity="0.75"/><rect x="799.4" y="353.6" width="1" height="1" fill="#e03838" opacity="0.75"/><rect x="806.4" y="355.3" width="1" height="1" fill="#38b838" opacity="0.75"/><rect x="812.0" y="363.7" width="1" height="1" fill="#e03838" opacity="0.75"/><rect x="799.3" y="362.4" width="1" height="1" fill="#e03838" opacity="0.75"/><rect x="820.5" y="358.6" width="1" height="1" fill="#38b838" opacity="0.75"/><rect x="797.7" y="364.9" width="1" height="1" fill="#e03838" opacity="0.75"/><rect x="802.7" y="363.0" width="1" height="1" fill="#3a48d8" opacity="0.75"/><rect x="799.4" y="355.9" width="1" height="1" fill="#d8c838" opacity="0.75"/><rect x="820.9" y="354.8" width="1" height="1" fill="#38b838" opacity="0.75"/><rect x="810.1" y="354.9" width="1" height="1" fill="#e03838" opacity="0.75"/><rect x="795.3" y="356.9" width="1" height="1" fill="#d8c838" opacity="0.75"/><rect x="792.3" y="356.3" width="1" height="1" fill="#d8c838" opacity="0.75"/><rect x="814.2" y="365.4" width="1" height="1" fill="#3a48d8" opacity="0.75"/><rect x="801.4" y="361.9" width="1" height="1" fill="#3a48d8" opacity="0.75"/><rect x="794.1" y="363.0" width="1" height="1" fill="#3a48d8" opacity="0.75"/><rect x="796.1" y="363.3" width="1" height="1" fill="#3a48d8" opacity="0.75"/><rect x="794.9" y="353.5" width="1" height="1" fill="#d8c838" opacity="0.75"/><rect x="798.3" y="363.3" width="1" height="1" fill="#e03838" opacity="0.75"/><rect x="822.1" y="354.6" width="1" height="1" fill="#d8c838" opacity="0.75"/><rect x="801.5" y="353.0" width="1" height="1" fill="#e03838" opacity="0.75"/><rect x="811.4" y="359.3" width="1" height="1" fill="#d8c838" opacity="0.75"/><rect x="799.7" y="351.6" width="1" height="1" fill="#e03838" opacity="0.75"/><rect x="816.7" y="363.3" width="1" height="1" fill="#d8c838" opacity="0.75"/><rect x="810.9" y="357.3" width="1" height="1" fill="#38b838" opacity="0.75"/><rect x="807.8" y="367.0" width="1" height="1" fill="#3a48d8" opacity="0.75"/><rect x="800.5" y="365.0" width="1" height="1" fill="#3a48d8" opacity="0.75"/><rect x="788.8" y="363.8" width="1" height="1" fill="#3a48d8" opacity="0.75"/><rect x="796.7" y="358.2" width="1" height="1" fill="#e03838" opacity="0.75"/><rect x="792.6" y="356.8" width="1" height="1" fill="#e03838" opacity="0.75"/><rect x="795.5" y="354.2" width="1" height="1" fill="#e03838" opacity="0.75"/><rect x="823.3" y="361.0" width="1" height="1" fill="#e03838" opacity="0.75"/><rect x="809.9" y="358.0" width="1" height="1" fill="#38b838" opacity="0.75"/><ellipse cx="805.5" cy="356.0" rx="3.2" ry="2.3" fill="#c07858" opacity="0.55"/><path d="M800.5 350.2L800.5 357.3L825.7 361.7M800.5 357.3L785.3 364.5" stroke="#1d8585" stroke-width="1.1" fill="none" opacity="0.95"/><path d="M800.5 350.2L825.7 354.5L810.5 361.7L785.3 357.4Z M785.3 357.4L785.3 364.5L810.5 368.9L825.7 361.7L825.7 354.5 M810.5 361.7L810.5 368.9" stroke="#1d8383" stroke-width="1.3" fill="none" stroke-linejoin="round"/>
<polygon points="447.2,354.5 472.4,358.9 472.4,366.0 457.2,373.2 432.0,368.9 432.0,361.7" fill="#c4c4c4" fill-opacity="0.68"/><polygon points="447.2,354.5 472.4,358.9 457.2,366.1 432.0,361.7" fill="#dadada" fill-opacity="0.35"/><rect x="439.7" y="367.7" width="1" height="1" fill="#3a48d8" opacity="0.75"/><rect x="457.0" y="356.6" width="1" height="1" fill="#d8c838" opacity="0.75"/><rect x="444.8" y="365.5" width="1" height="1" fill="#3a48d8" opacity="0.75"/><rect x="466.1" y="366.7" width="1" height="1" fill="#3a48d8" opacity="0.75"/><rect x="437.5" y="365.3" width="1" height="1" fill="#e03838" opacity="0.75"/><rect x="435.9" y="365.2" width="1" height="1" fill="#e03838" opacity="0.75"/><rect x="452.0" y="358.2" width="1" height="1" fill="#38b838" opacity="0.75"/><rect x="450.9" y="358.8" width="1" height="1" fill="#38b838" opacity="0.75"/><rect x="438.2" y="364.2" width="1" height="1" fill="#e03838" opacity="0.75"/><rect x="453.4" y="356.8" width="1" height="1" fill="#d8c838" opacity="0.75"/><rect x="456.6" y="364.6" width="1" height="1" fill="#d8c838" opacity="0.75"/><rect x="449.2" y="357.3" width="1" height="1" fill="#d8c838" opacity="0.75"/><rect x="440.0" y="365.9" width="1" height="1" fill="#e03838" opacity="0.75"/><rect x="461.8" y="364.0" width="1" height="1" fill="#d8c838" opacity="0.75"/><rect x="434.0" y="367.5" width="1" height="1" fill="#3a48d8" opacity="0.75"/><rect x="448.4" y="359.0" width="1" height="1" fill="#d8c838" opacity="0.75"/><rect x="439.7" y="368.8" width="1" height="1" fill="#e03838" opacity="0.75"/><rect x="465.5" y="365.0" width="1" height="1" fill="#e03838" opacity="0.75"/><rect x="449.9" y="363.3" width="1" height="1" fill="#e03838" opacity="0.75"/><rect x="441.5" y="365.7" width="1" height="1" fill="#3a48d8" opacity="0.75"/><rect x="442.7" y="367.9" width="1" height="1" fill="#3a48d8" opacity="0.75"/><rect x="448.4" y="361.5" width="1" height="1" fill="#d8c838" opacity="0.75"/><rect x="445.8" y="355.9" width="1" height="1" fill="#38b838" opacity="0.75"/><rect x="450.0" y="365.7" width="1" height="1" fill="#e03838" opacity="0.75"/><rect x="455.2" y="363.7" width="1" height="1" fill="#e03838" opacity="0.75"/><rect x="447.4" y="364.7" width="1" height="1" fill="#e03838" opacity="0.75"/><rect x="450.6" y="357.9" width="1" height="1" fill="#38b838" opacity="0.75"/><rect x="452.0" y="355.9" width="1" height="1" fill="#e03838" opacity="0.75"/><rect x="455.1" y="367.7" width="1" height="1" fill="#3a48d8" opacity="0.75"/><rect x="446.2" y="362.5" width="1" height="1" fill="#38b838" opacity="0.75"/><rect x="449.3" y="360.5" width="1" height="1" fill="#e03838" opacity="0.75"/><rect x="434.5" y="361.0" width="1" height="1" fill="#38b838" opacity="0.75"/><rect x="444.2" y="357.6" width="1" height="1" fill="#38b838" opacity="0.75"/><rect x="447.3" y="369.7" width="1" height="1" fill="#3a48d8" opacity="0.75"/><rect x="450.4" y="370.6" width="1" height="1" fill="#3a48d8" opacity="0.75"/><rect x="444.5" y="358.9" width="1" height="1" fill="#38b838" opacity="0.75"/><rect x="452.3" y="357.2" width="1" height="1" fill="#e03838" opacity="0.75"/><rect x="458.1" y="360.2" width="1" height="1" fill="#38b838" opacity="0.75"/><rect x="438.4" y="363.5" width="1" height="1" fill="#3a48d8" opacity="0.75"/><rect x="446.1" y="356.3" width="1" height="1" fill="#e03838" opacity="0.75"/><rect x="459.2" y="369.3" width="1" height="1" fill="#3a48d8" opacity="0.75"/><rect x="453.6" y="359.4" width="1" height="1" fill="#d8c838" opacity="0.75"/><rect x="447.6" y="361.5" width="1" height="1" fill="#38b838" opacity="0.75"/><rect x="439.4" y="364.4" width="1" height="1" fill="#3a48d8" opacity="0.75"/><rect x="439.4" y="367.0" width="1" height="1" fill="#3a48d8" opacity="0.75"/><rect x="447.5" y="358.5" width="1" height="1" fill="#e03838" opacity="0.75"/><rect x="463.0" y="358.6" width="1" height="1" fill="#d8c838" opacity="0.75"/><rect x="446.9" y="355.9" width="1" height="1" fill="#d8c838" opacity="0.75"/><rect x="455.0" y="368.1" width="1" height="1" fill="#e03838" opacity="0.75"/><rect x="454.1" y="371.6" width="1" height="1" fill="#e03838" opacity="0.75"/><rect x="447.3" y="358.7" width="1" height="1" fill="#d8c838" opacity="0.75"/><rect x="449.7" y="368.1" width="1" height="1" fill="#3a48d8" opacity="0.75"/><rect x="444.9" y="364.5" width="1" height="1" fill="#3a48d8" opacity="0.75"/><rect x="457.9" y="367.8" width="1" height="1" fill="#d8c838" opacity="0.75"/><rect x="437.0" y="365.3" width="1" height="1" fill="#e03838" opacity="0.75"/><rect x="446.4" y="367.1" width="1" height="1" fill="#3a48d8" opacity="0.75"/><rect x="442.2" y="364.0" width="1" height="1" fill="#3a48d8" opacity="0.75"/><rect x="453.5" y="367.1" width="1" height="1" fill="#3a48d8" opacity="0.75"/><rect x="444.3" y="367.3" width="1" height="1" fill="#3a48d8" opacity="0.75"/><rect x="441.6" y="357.9" width="1" height="1" fill="#d8c838" opacity="0.75"/><ellipse cx="452.2" cy="360.3" rx="3.2" ry="2.3" fill="#c07858" opacity="0.55"/><path d="M447.2 354.5L447.2 361.7L472.4 366.0M447.2 361.7L432.0 368.9" stroke="#1d8585" stroke-width="1.1" fill="none" opacity="0.95"/><path d="M447.2 354.5L472.4 358.9L457.2 366.1L432.0 361.7Z M432.0 361.7L432.0 368.9L457.2 373.2L472.4 366.0L472.4 358.9 M457.2 366.1L457.2 373.2" stroke="#1d8383" stroke-width="1.3" fill="none" stroke-linejoin="round"/>
<polygon points="798.8,197.1 812.2,198.1 812.2,355.3 798.8,355.3" fill="rgba(82,141,202,0.80)"/><rect x="805.5" y="198.1" width="6.8" height="156.9" fill="rgba(255,255,255,0.05)"/>
<polygon points="445.4,199.0 458.9,200.0 458.9,359.6 445.4,359.6" fill="rgba(82,141,202,0.80)"/><rect x="452.2" y="200.0" width="6.8" height="159.3" fill="rgba(255,255,255,0.05)"/>
<polygon points="502.9,173.9 628.9,184.8 754.9,218.6 754.9,232.6 502.9,190.4" fill="rgba(84,146,208,0.78)"/><line x1="509.6" y1="182.4" x2="748.1" y2="223.7" stroke="#3f7fcf" stroke-width="1" stroke-dasharray="4 5" opacity="0.8"/>
<polygon points="749.8,374.2 775.0,378.5 775.0,385.7 759.9,392.9 734.7,388.5 734.7,381.4" fill="#c4c4c4" fill-opacity="0.68"/><polygon points="749.8,374.2 775.0,378.5 759.9,385.7 734.7,381.4" fill="#dadada" fill-opacity="0.35"/><rect x="746.5" y="385.4" width="1" height="1" fill="#e03838" opacity="0.75"/><rect x="756.0" y="389.1" width="1" height="1" fill="#3a48d8" opacity="0.75"/><rect x="746.2" y="384.0" width="1" height="1" fill="#3a48d8" opacity="0.75"/><rect x="759.5" y="378.4" width="1" height="1" fill="#e03838" opacity="0.75"/><rect x="759.8" y="378.4" width="1" height="1" fill="#38b838" opacity="0.75"/><rect x="768.0" y="382.4" width="1" height="1" fill="#3a48d8" opacity="0.75"/><rect x="754.1" y="386.1" width="1" height="1" fill="#3a48d8" opacity="0.75"/><rect x="741.3" y="386.8" width="1" height="1" fill="#e03838" opacity="0.75"/><rect x="749.0" y="387.5" width="1" height="1" fill="#3a48d8" opacity="0.75"/><rect x="756.7" y="389.5" width="1" height="1" fill="#e03838" opacity="0.75"/><rect x="752.1" y="375.8" width="1" height="1" fill="#e03838" opacity="0.75"/><rect x="764.4" y="381.7" width="1" height="1" fill="#d8c838" opacity="0.75"/><rect x="770.9" y="383.6" width="1" height="1" fill="#38b838" opacity="0.75"/><rect x="763.1" y="386.2" width="1" height="1" fill="#3a48d8" opacity="0.75"/><rect x="751.2" y="389.1" width="1" height="1" fill="#e03838" opacity="0.75"/><rect x="760.7" y="379.8" width="1" height="1" fill="#d8c838" opacity="0.75"/><rect x="737.6" y="384.6" width="1" height="1" fill="#3a48d8" opacity="0.75"/><rect x="745.3" y="381.6" width="1" height="1" fill="#38b838" opacity="0.75"/><rect x="766.9" y="378.3" width="1" height="1" fill="#d8c838" opacity="0.75"/><rect x="753.8" y="379.0" width="1" height="1" fill="#38b838" opacity="0.75"/><rect x="752.9" y="389.7" width="1" height="1" fill="#3a48d8" opacity="0.75"/><rect x="746.5" y="380.3" width="1" height="1" fill="#d8c838" opacity="0.75"/><rect x="754.0" y="378.1" width="1" height="1" fill="#d8c838" opacity="0.75"/><rect x="768.0" y="379.5" width="1" height="1" fill="#38b838" opacity="0.75"/><rect x="738.4" y="387.6" width="1" height="1" fill="#3a48d8" opacity="0.75"/><rect x="763.0" y="387.1" width="1" height="1" fill="#e03838" opacity="0.75"/><rect x="745.0" y="386.1" width="1" height="1" fill="#3a48d8" opacity="0.75"/><rect x="748.4" y="376.3" width="1" height="1" fill="#38b838" opacity="0.75"/><rect x="765.0" y="378.1" width="1" height="1" fill="#e03838" opacity="0.75"/><rect x="761.1" y="383.5" width="1" height="1" fill="#e03838" opacity="0.75"/><rect x="745.1" y="385.3" width="1" height="1" fill="#e03838" opacity="0.75"/><rect x="759.2" y="379.0" width="1" height="1" fill="#e03838" opacity="0.75"/><rect x="750.9" y="379.0" width="1" height="1" fill="#38b838" opacity="0.75"/><rect x="766.2" y="384.8" width="1" height="1" fill="#d8c838" opacity="0.75"/><rect x="753.6" y="382.1" width="1" height="1" fill="#d8c838" opacity="0.75"/><rect x="755.1" y="388.6" width="1" height="1" fill="#e03838" opacity="0.75"/><rect x="770.4" y="384.9" width="1" height="1" fill="#3a48d8" opacity="0.75"/><rect x="750.3" y="381.5" width="1" height="1" fill="#38b838" opacity="0.75"/><rect x="754.5" y="389.7" width="1" height="1" fill="#3a48d8" opacity="0.75"/><rect x="761.5" y="376.5" width="1" height="1" fill="#e03838" opacity="0.75"/><rect x="751.8" y="387.7" width="1" height="1" fill="#e03838" opacity="0.75"/><rect x="769.7" y="379.5" width="1" height="1" fill="#e03838" opacity="0.75"/><rect x="758.5" y="379.0" width="1" height="1" fill="#e03838" opacity="0.75"/><rect x="744.5" y="388.0" width="1" height="1" fill="#3a48d8" opacity="0.75"/><rect x="755.9" y="377.1" width="1" height="1" fill="#38b838" opacity="0.75"/><rect x="769.1" y="381.9" width="1" height="1" fill="#d8c838" opacity="0.75"/><rect x="739.7" y="385.7" width="1" height="1" fill="#3a48d8" opacity="0.75"/><rect x="752.5" y="382.7" width="1" height="1" fill="#d8c838" opacity="0.75"/><rect x="763.5" y="387.1" width="1" height="1" fill="#e03838" opacity="0.75"/><rect x="773.5" y="381.8" width="1" height="1" fill="#e03838" opacity="0.75"/><rect x="738.7" y="381.0" width="1" height="1" fill="#e03838" opacity="0.75"/><rect x="753.1" y="376.7" width="1" height="1" fill="#e03838" opacity="0.75"/><rect x="763.6" y="389.5" width="1" height="1" fill="#e03838" opacity="0.75"/><rect x="762.5" y="389.9" width="1" height="1" fill="#e03838" opacity="0.75"/><rect x="755.4" y="390.7" width="1" height="1" fill="#3a48d8" opacity="0.75"/><rect x="763.6" y="378.0" width="1" height="1" fill="#38b838" opacity="0.75"/><rect x="766.7" y="379.5" width="1" height="1" fill="#38b838" opacity="0.75"/><rect x="760.5" y="381.5" width="1" height="1" fill="#38b838" opacity="0.75"/><rect x="751.5" y="389.2" width="1" height="1" fill="#3a48d8" opacity="0.75"/><rect x="754.0" y="382.6" width="1" height="1" fill="#e03838" opacity="0.75"/><ellipse cx="754.9" cy="380.0" rx="3.2" ry="2.3" fill="#c07858" opacity="0.55"/><path d="M749.8 374.2L749.8 381.3L775.0 385.7M749.8 381.3L734.7 388.5" stroke="#1d8585" stroke-width="1.1" fill="none" opacity="0.95"/><path d="M749.8 374.2L775.0 378.5L759.9 385.7L734.7 381.4Z M734.7 381.4L734.7 388.5L759.9 392.9L775.0 385.7L775.0 378.5 M759.9 385.7L759.9 392.9" stroke="#1d8383" stroke-width="1.3" fill="none" stroke-linejoin="round"/>
<polygon points="396.5,378.5 421.7,382.9 421.7,390.0 406.6,397.2 381.4,392.9 381.4,385.7" fill="#c4c4c4" fill-opacity="0.68"/><polygon points="396.5,378.5 421.7,382.9 406.6,390.1 381.4,385.7" fill="#dadada" fill-opacity="0.35"/><rect x="400.1" y="391.9" width="1" height="1" fill="#3a48d8" opacity="0.75"/><rect x="397.3" y="392.0" width="1" height="1" fill="#e03838" opacity="0.75"/><rect x="417.3" y="387.2" width="1" height="1" fill="#e03838" opacity="0.75"/><rect x="384.4" y="387.6" width="1" height="1" fill="#e03838" opacity="0.75"/><rect x="395.6" y="379.4" width="1" height="1" fill="#d8c838" opacity="0.75"/><rect x="398.8" y="386.0" width="1" height="1" fill="#e03838" opacity="0.75"/><rect x="394.1" y="391.4" width="1" height="1" fill="#e03838" opacity="0.75"/><rect x="394.6" y="389.3" width="1" height="1" fill="#3a48d8" opacity="0.75"/><rect x="405.0" y="384.1" width="1" height="1" fill="#d8c838" opacity="0.75"/><rect x="390.4" y="389.6" width="1" height="1" fill="#e03838" opacity="0.75"/><rect x="401.8" y="381.6" width="1" height="1" fill="#38b838" opacity="0.75"/><rect x="398.2" y="383.9" width="1" height="1" fill="#e03838" opacity="0.75"/><rect x="393.1" y="393.2" width="1" height="1" fill="#e03838" opacity="0.75"/><rect x="401.2" y="383.7" width="1" height="1" fill="#e03838" opacity="0.75"/><rect x="398.4" y="390.5" width="1" height="1" fill="#e03838" opacity="0.75"/><rect x="406.1" y="387.8" width="1" height="1" fill="#e03838" opacity="0.75"/><rect x="414.8" y="391.0" width="1" height="1" fill="#38b838" opacity="0.75"/><rect x="412.5" y="384.1" width="1" height="1" fill="#38b838" opacity="0.75"/><rect x="395.5" y="381.6" width="1" height="1" fill="#38b838" opacity="0.75"/><rect x="391.6" y="391.8" width="1" height="1" fill="#e03838" opacity="0.75"/><rect x="393.0" y="392.9" width="1" height="1" fill="#e03838" opacity="0.75"/><rect x="404.0" y="381.9" width="1" height="1" fill="#e03838" opacity="0.75"/><rect x="395.1" y="380.3" width="1" height="1" fill="#d8c838" opacity="0.75"/><rect x="385.2" y="390.5" width="1" height="1" fill="#e03838" opacity="0.75"/><rect x="386.0" y="387.9" width="1" height="1" fill="#e03838" opacity="0.75"/><rect x="384.8" y="391.8" width="1" height="1" fill="#3a48d8" opacity="0.75"/><rect x="395.3" y="388.5" width="1" height="1" fill="#3a48d8" opacity="0.75"/><rect x="404.1" y="380.6" width="1" height="1" fill="#d8c838" opacity="0.75"/><rect x="391.0" y="388.4" width="1" height="1" fill="#3a48d8" opacity="0.75"/><rect x="384.7" y="391.8" width="1" height="1" fill="#e03838" opacity="0.75"/><rect x="406.9" y="383.6" width="1" height="1" fill="#e03838" opacity="0.75"/><rect x="400.4" y="386.4" width="1" height="1" fill="#d8c838" opacity="0.75"/><rect x="413.2" y="387.6" width="1" height="1" fill="#38b838" opacity="0.75"/><rect x="393.9" y="380.7" width="1" height="1" fill="#e03838" opacity="0.75"/><rect x="402.6" y="385.2" width="1" height="1" fill="#e03838" opacity="0.75"/><rect x="405.4" y="381.1" width="1" height="1" fill="#e03838" opacity="0.75"/><rect x="404.7" y="385.3" width="1" height="1" fill="#d8c838" opacity="0.75"/><rect x="393.1" y="392.1" width="1" height="1" fill="#3a48d8" opacity="0.75"/><rect x="399.2" y="393.3" width="1" height="1" fill="#e03838" opacity="0.75"/><rect x="419.8" y="384.6" width="1" height="1" fill="#38b838" opacity="0.75"/><rect x="387.7" y="389.1" width="1" height="1" fill="#3a48d8" opacity="0.75"/><rect x="409.4" y="389.1" width="1" height="1" fill="#e03838" opacity="0.75"/><rect x="412.4" y="391.2" width="1" height="1" fill="#3a48d8" opacity="0.75"/><rect x="389.5" y="383.6" width="1" height="1" fill="#d8c838" opacity="0.75"/><rect x="400.6" y="392.7" width="1" height="1" fill="#3a48d8" opacity="0.75"/><rect x="400.2" y="390.3" width="1" height="1" fill="#e03838" opacity="0.75"/><rect x="390.5" y="392.4" width="1" height="1" fill="#3a48d8" opacity="0.75"/><rect x="415.2" y="389.1" width="1" height="1" fill="#3a48d8" opacity="0.75"/><rect x="400.6" y="384.0" width="1" height="1" fill="#e03838" opacity="0.75"/><rect x="393.1" y="392.2" width="1" height="1" fill="#3a48d8" opacity="0.75"/><rect x="393.3" y="390.7" width="1" height="1" fill="#3a48d8" opacity="0.75"/><rect x="383.0" y="390.0" width="1" height="1" fill="#e03838" opacity="0.75"/><rect x="406.1" y="388.1" width="1" height="1" fill="#e03838" opacity="0.75"/><rect x="420.1" y="387.2" width="1" height="1" fill="#d8c838" opacity="0.75"/><rect x="396.1" y="386.7" width="1" height="1" fill="#e03838" opacity="0.75"/><rect x="411.2" y="381.8" width="1" height="1" fill="#38b838" opacity="0.75"/><rect x="402.7" y="386.2" width="1" height="1" fill="#38b838" opacity="0.75"/><rect x="414.5" y="390.6" width="1" height="1" fill="#e03838" opacity="0.75"/><rect x="408.8" y="384.3" width="1" height="1" fill="#d8c838" opacity="0.75"/><rect x="393.4" y="391.2" width="1" height="1" fill="#3a48d8" opacity="0.75"/><ellipse cx="401.5" cy="384.3" rx="3.2" ry="2.3" fill="#c07858" opacity="0.55"/><path d="M396.5 378.5L396.5 385.7L421.7 390.0M396.5 385.7L381.4 392.9" stroke="#1d8585" stroke-width="1.1" fill="none" opacity="0.95"/><path d="M396.5 378.5L421.7 382.9L406.6 390.1L381.4 385.7Z M381.4 385.7L381.4 392.9L406.6 397.2L421.7 390.0L421.7 382.9 M406.6 390.1L406.6 397.2" stroke="#1d8383" stroke-width="1.3" fill="none" stroke-linejoin="round"/>
<polygon points="748.1,218.6 761.6,219.6 761.6,379.3 748.1,379.3" fill="rgba(82,141,202,0.80)"/><rect x="754.9" y="219.6" width="6.8" height="159.3" fill="rgba(255,255,255,0.05)"/>
<polygon points="394.8,223.0 408.3,224.0 408.3,383.6 394.8,383.6" fill="rgba(82,141,202,0.80)"/><rect x="401.5" y="224.0" width="6.8" height="159.3" fill="rgba(255,255,255,0.05)"/>
<polygon points="452.2,197.9 578.2,208.8 704.2,242.6 704.2,256.6 452.2,214.4" fill="rgba(84,146,208,0.78)"/><line x1="458.9" y1="206.4" x2="697.5" y2="247.7" stroke="#3f7fcf" stroke-width="1" stroke-dasharray="4 5" opacity="0.8"/>
<polygon points="699.2,398.2 724.4,402.5 724.4,409.7 709.2,416.9 684.0,412.5 684.0,405.4" fill="#c4c4c4" fill-opacity="0.68"/><polygon points="699.2,398.2 724.4,402.5 709.2,409.7 684.0,405.4" fill="#dadada" fill-opacity="0.35"/><rect x="715.8" y="404.6" width="1" height="1" fill="#e03838" opacity="0.75"/><rect x="696.7" y="411.8" width="1" height="1" fill="#3a48d8" opacity="0.75"/><rect x="700.7" y="404.3" width="1" height="1" fill="#38b838" opacity="0.75"/><rect x="713.8" y="411.3" width="1" height="1" fill="#3a48d8" opacity="0.75"/><rect x="689.8" y="405.2" width="1" height="1" fill="#e03838" opacity="0.75"/><rect x="703.1" y="411.9" width="1" height="1" fill="#3a48d8" opacity="0.75"/><rect x="700.5" y="405.5" width="1" height="1" fill="#e03838" opacity="0.75"/><rect x="708.9" y="402.7" width="1" height="1" fill="#d8c838" opacity="0.75"/><rect x="698.6" y="410.9" width="1" height="1" fill="#3a48d8" opacity="0.75"/><rect x="715.3" y="410.3" width="1" height="1" fill="#e03838" opacity="0.75"/><rect x="698.0" y="409.3" width="1" height="1" fill="#e03838" opacity="0.75"/><rect x="707.9" y="404.9" width="1" height="1" fill="#38b838" opacity="0.75"/><rect x="687.9" y="410.5" width="1" height="1" fill="#3a48d8" opacity="0.75"/><rect x="702.6" y="404.3" width="1" height="1" fill="#38b838" opacity="0.75"/><rect x="688.3" y="411.9" width="1" height="1" fill="#e03838" opacity="0.75"/><rect x="693.3" y="404.6" width="1" height="1" fill="#38b838" opacity="0.75"/><rect x="709.7" y="403.2" width="1" height="1" fill="#e03838" opacity="0.75"/><rect x="704.9" y="404.8" width="1" height="1" fill="#e03838" opacity="0.75"/><rect x="703.9" y="411.0" width="1" height="1" fill="#3a48d8" opacity="0.75"/><rect x="700.9" y="408.8" width="1" height="1" fill="#e03838" opacity="0.75"/><rect x="686.6" y="409.4" width="1" height="1" fill="#3a48d8" opacity="0.75"/><rect x="687.8" y="403.8" width="1" height="1" fill="#e03838" opacity="0.75"/><rect x="696.8" y="401.4" width="1" height="1" fill="#38b838" opacity="0.75"/><rect x="686.3" y="407.5" width="1" height="1" fill="#e03838" opacity="0.75"/><rect x="691.9" y="407.3" width="1" height="1" fill="#e03838" opacity="0.75"/><rect x="692.5" y="412.1" width="1" height="1" fill="#3a48d8" opacity="0.75"/><rect x="706.9" y="406.9" width="1" height="1" fill="#d8c838" opacity="0.75"/><rect x="703.1" y="401.9" width="1" height="1" fill="#d8c838" opacity="0.75"/><rect x="686.7" y="408.1" width="1" height="1" fill="#3a48d8" opacity="0.75"/><rect x="695.4" y="410.3" width="1" height="1" fill="#e03838" opacity="0.75"/><rect x="705.6" y="401.0" width="1" height="1" fill="#e03838" opacity="0.75"/><rect x="690.2" y="410.4" width="1" height="1" fill="#e03838" opacity="0.75"/><rect x="703.3" y="406.6" width="1" height="1" fill="#d8c838" opacity="0.75"/><rect x="706.8" y="406.3" width="1" height="1" fill="#d8c838" opacity="0.75"/><rect x="701.1" y="410.2" width="1" height="1" fill="#e03838" opacity="0.75"/><rect x="695.1" y="409.5" width="1" height="1" fill="#3a48d8" opacity="0.75"/><rect x="697.6" y="408.6" width="1" height="1" fill="#3a48d8" opacity="0.75"/><rect x="700.6" y="413.9" width="1" height="1" fill="#3a48d8" opacity="0.75"/><rect x="691.7" y="412.2" width="1" height="1" fill="#e03838" opacity="0.75"/><rect x="695.6" y="410.5" width="1" height="1" fill="#3a48d8" opacity="0.75"/><rect x="685.9" y="409.5" width="1" height="1" fill="#3a48d8" opacity="0.75"/><rect x="691.7" y="408.0" width="1" height="1" fill="#3a48d8" opacity="0.75"/><rect x="718.8" y="410.8" width="1" height="1" fill="#e03838" opacity="0.75"/><rect x="699.9" y="401.1" width="1" height="1" fill="#38b838" opacity="0.75"/><rect x="702.7" y="414.5" width="1" height="1" fill="#e03838" opacity="0.75"/><rect x="703.9" y="411.9" width="1" height="1" fill="#e03838" opacity="0.75"/><rect x="691.2" y="411.5" width="1" height="1" fill="#e03838" opacity="0.75"/><rect x="696.1" y="401.5" width="1" height="1" fill="#e03838" opacity="0.75"/><rect x="698.4" y="410.8" width="1" height="1" fill="#3a48d8" opacity="0.75"/><rect x="700.6" y="409.9" width="1" height="1" fill="#e03838" opacity="0.75"/><rect x="692.6" y="405.5" width="1" height="1" fill="#38b838" opacity="0.75"/><rect x="689.8" y="407.4" width="1" height="1" fill="#e03838" opacity="0.75"/><rect x="702.6" y="402.8" width="1" height="1" fill="#d8c838" opacity="0.75"/><rect x="690.2" y="409.6" width="1" height="1" fill="#e03838" opacity="0.75"/><rect x="691.8" y="402.1" width="1" height="1" fill="#e03838" opacity="0.75"/><rect x="702.9" y="403.1" width="1" height="1" fill="#38b838" opacity="0.75"/><rect x="701.7" y="412.6" width="1" height="1" fill="#e03838" opacity="0.75"/><rect x="701.9" y="408.9" width="1" height="1" fill="#3a48d8" opacity="0.75"/><rect x="715.0" y="407.1" width="1" height="1" fill="#3a48d8" opacity="0.75"/><rect x="709.2" y="404.7" width="1" height="1" fill="#d8c838" opacity="0.75"/><ellipse cx="704.2" cy="404.0" rx="3.2" ry="2.3" fill="#c07858" opacity="0.55"/><path d="M699.2 398.2L699.2 405.3L724.4 409.7M699.2 405.3L684.0 412.5" stroke="#1d8585" stroke-width="1.1" fill="none" opacity="0.95"/><path d="M699.2 398.2L724.4 402.5L709.2 409.7L684.0 405.4Z M684.0 405.4L684.0 412.5L709.2 416.9L724.4 409.7L724.4 402.5 M709.2 409.7L709.2 416.9" stroke="#1d8383" stroke-width="1.3" fill="none" stroke-linejoin="round"/>
<polygon points="345.9,402.5 371.1,406.9 371.1,414.0 355.9,421.2 330.7,416.9 330.7,409.7" fill="#c4c4c4" fill-opacity="0.68"/><polygon points="345.9,402.5 371.1,406.9 355.9,414.1 330.7,409.7" fill="#dadada" fill-opacity="0.35"/><rect x="343.9" y="407.1" width="1" height="1" fill="#e03838" opacity="0.75"/><rect x="361.6" y="416.6" width="1" height="1" fill="#e03838" opacity="0.75"/><rect x="337.6" y="410.0" width="1" height="1" fill="#d8c838" opacity="0.75"/><rect x="340.5" y="413.0" width="1" height="1" fill="#3a48d8" opacity="0.75"/><rect x="353.5" y="409.9" width="1" height="1" fill="#e03838" opacity="0.75"/><rect x="332.4" y="415.0" width="1" height="1" fill="#3a48d8" opacity="0.75"/><rect x="349.5" y="411.4" width="1" height="1" fill="#d8c838" opacity="0.75"/><rect x="353.3" y="416.0" width="1" height="1" fill="#3a48d8" opacity="0.75"/><rect x="337.6" y="409.7" width="1" height="1" fill="#d8c838" opacity="0.75"/><rect x="358.4" y="416.1" width="1" height="1" fill="#d8c838" opacity="0.75"/><rect x="346.8" y="410.8" width="1" height="1" fill="#d8c838" opacity="0.75"/><rect x="359.2" y="410.8" width="1" height="1" fill="#e03838" opacity="0.75"/><rect x="352.0" y="417.8" width="1" height="1" fill="#e03838" opacity="0.75"/><rect x="351.5" y="404.1" width="1" height="1" fill="#38b838" opacity="0.75"/><rect x="339.3" y="416.6" width="1" height="1" fill="#3a48d8" opacity="0.75"/><rect x="351.4" y="411.3" width="1" height="1" fill="#38b838" opacity="0.75"/><rect x="346.4" y="407.9" width="1" height="1" fill="#d8c838" opacity="0.75"/><rect x="342.9" y="413.9" width="1" height="1" fill="#e03838" opacity="0.75"/><rect x="353.0" y="415.5" width="1" height="1" fill="#e03838" opacity="0.75"/><rect x="353.7" y="416.1" width="1" height="1" fill="#3a48d8" opacity="0.75"/><rect x="342.5" y="409.7" width="1" height="1" fill="#e03838" opacity="0.75"/><rect x="361.4" y="416.9" width="1" height="1" fill="#d8c838" opacity="0.75"/><rect x="345.8" y="418.0" width="1" height="1" fill="#e03838" opacity="0.75"/><rect x="343.3" y="412.3" width="1" height="1" fill="#e03838" opacity="0.75"/><rect x="331.9" y="413.8" width="1" height="1" fill="#e03838" opacity="0.75"/><rect x="347.2" y="408.8" width="1" height="1" fill="#e03838" opacity="0.75"/><rect x="342.6" y="417.5" width="1" height="1" fill="#e03838" opacity="0.75"/><rect x="337.2" y="414.5" width="1" height="1" fill="#e03838" opacity="0.75"/><rect x="335.7" y="415.7" width="1" height="1" fill="#3a48d8" opacity="0.75"/><rect x="337.2" y="408.3" width="1" height="1" fill="#38b838" opacity="0.75"/><rect x="338.5" y="416.0" width="1" height="1" fill="#3a48d8" opacity="0.75"/><rect x="352.4" y="409.5" width="1" height="1" fill="#d8c838" opacity="0.75"/><rect x="358.1" y="406.7" width="1" height="1" fill="#38b838" opacity="0.75"/><rect x="360.9" y="416.7" width="1" height="1" fill="#3a48d8" opacity="0.75"/><rect x="349.3" y="418.7" width="1" height="1" fill="#3a48d8" opacity="0.75"/><rect x="351.1" y="418.3" width="1" height="1" fill="#e03838" opacity="0.75"/><rect x="353.5" y="407.6" width="1" height="1" fill="#d8c838" opacity="0.75"/><rect x="339.3" y="413.9" width="1" height="1" fill="#3a48d8" opacity="0.75"/><rect x="349.4" y="403.2" width="1" height="1" fill="#e03838" opacity="0.75"/><rect x="341.3" y="417.2" width="1" height="1" fill="#3a48d8" opacity="0.75"/><rect x="350.4" y="416.4" width="1" height="1" fill="#e03838" opacity="0.75"/><rect x="354.3" y="411.7" width="1" height="1" fill="#38b838" opacity="0.75"/><rect x="363.7" y="406.1" width="1" height="1" fill="#38b838" opacity="0.75"/><rect x="351.8" y="417.0" width="1" height="1" fill="#e03838" opacity="0.75"/><rect x="365.7" y="413.2" width="1" height="1" fill="#d8c838" opacity="0.75"/><rect x="332.7" y="411.0" width="1" height="1" fill="#3a48d8" opacity="0.75"/><rect x="349.9" y="414.6" width="1" height="1" fill="#e03838" opacity="0.75"/><rect x="339.0" y="408.4" width="1" height="1" fill="#38b838" opacity="0.75"/><rect x="349.1" y="408.2" width="1" height="1" fill="#38b838" opacity="0.75"/><rect x="362.6" y="413.3" width="1" height="1" fill="#e03838" opacity="0.75"/><rect x="350.9" y="413.8" width="1" height="1" fill="#3a48d8" opacity="0.75"/><rect x="358.2" y="413.5" width="1" height="1" fill="#38b838" opacity="0.75"/><rect x="335.0" y="413.0" width="1" height="1" fill="#e03838" opacity="0.75"/><rect x="339.6" y="413.4" width="1" height="1" fill="#e03838" opacity="0.75"/><rect x="347.7" y="413.4" width="1" height="1" fill="#e03838" opacity="0.75"/><rect x="347.5" y="408.6" width="1" height="1" fill="#38b838" opacity="0.75"/><rect x="363.9" y="412.4" width="1" height="1" fill="#3a48d8" opacity="0.75"/><rect x="338.6" y="413.8" width="1" height="1" fill="#3a48d8" opacity="0.75"/><rect x="343.6" y="412.7" width="1" height="1" fill="#3a48d8" opacity="0.75"/><rect x="348.5" y="403.3" width="1" height="1" fill="#e03838" opacity="0.75"/><ellipse cx="350.9" cy="408.3" rx="3.2" ry="2.3" fill="#c07858" opacity="0.55"/><path d="M345.9 402.5L345.9 409.7L371.1 414.0M345.9 409.7L330.7 416.9" stroke="#1d8585" stroke-width="1.1" fill="none" opacity="0.95"/><path d="M345.9 402.5L371.1 406.9L355.9 414.1L330.7 409.7Z M330.7 409.7L330.7 416.9L355.9 421.2L371.1 414.0L371.1 406.9 M355.9 414.1L355.9 421.2" stroke="#1d8383" stroke-width="1.3" fill="none" stroke-linejoin="round"/>
<polygon points="697.5,242.6 711.0,243.6 711.0,403.3 697.5,403.3" fill="rgba(82,141,202,0.80)"/><rect x="704.2" y="243.6" width="6.8" height="159.3" fill="rgba(255,255,255,0.05)"/>
<polygon points="344.1,249.4 357.6,250.4 357.6,407.6 344.1,407.6" fill="rgba(82,141,202,0.80)"/><rect x="350.9" y="250.4" width="6.8" height="156.9" fill="rgba(255,255,255,0.05)"/>
<polygon points="401.5,221.9 527.5,232.8 653.5,266.6 653.5,280.6 401.5,238.4" fill="rgba(84,146,208,0.78)"/><line x1="408.3" y1="230.4" x2="646.8" y2="271.7" stroke="#3f7fcf" stroke-width="1" stroke-dasharray="4 5" opacity="0.8"/><polyline points="401.5,222.6 527.5,234.1 653.5,266.3" fill="none" stroke="#e8eeff" stroke-width="1" stroke-dasharray="1 1.6" opacity="0.75"/><line x1="401.5" y1="237.3" x2="653.5" y2="279.8" stroke="#e8eeff" stroke-width="1" stroke-dasharray="1 1.6" opacity="0.6"/>
<polygon points="431.6,419.0 448.4,421.9 448.4,427.9 438.2,432.7 421.4,429.8 421.4,423.8" fill="#c4c4c4" fill-opacity="0.68"/><polygon points="431.6,419.0 448.4,421.9 438.2,426.7 421.4,423.8" fill="#dadada" fill-opacity="0.35"/><rect x="431.7" y="426.8" width="1" height="1" fill="#3a48d8" opacity="0.75"/><rect x="422.7" y="427.4" width="1" height="1" fill="#3a48d8" opacity="0.75"/><rect x="443.4" y="427.9" width="1" height="1" fill="#3a48d8" opacity="0.75"/><rect x="425.5" y="428.0" width="1" height="1" fill="#e03838" opacity="0.75"/><rect x="421.9" y="424.1" width="1" height="1" fill="#3a48d8" opacity="0.75"/><rect x="424.0" y="428.6" width="1" height="1" fill="#3a48d8" opacity="0.75"/><rect x="428.3" y="421.7" width="1" height="1" fill="#38b838" opacity="0.75"/><rect x="428.0" y="427.7" width="1" height="1" fill="#3a48d8" opacity="0.75"/><rect x="432.7" y="426.6" width="1" height="1" fill="#e03838" opacity="0.75"/><rect x="437.7" y="420.1" width="1" height="1" fill="#e03838" opacity="0.75"/><rect x="434.8" y="419.6" width="1" height="1" fill="#e03838" opacity="0.75"/><rect x="433.8" y="425.1" width="1" height="1" fill="#d8c838" opacity="0.75"/><rect x="435.4" y="430.5" width="1" height="1" fill="#3a48d8" opacity="0.75"/><rect x="434.4" y="424.0" width="1" height="1" fill="#38b838" opacity="0.75"/><rect x="428.9" y="426.2" width="1" height="1" fill="#3a48d8" opacity="0.75"/><rect x="438.3" y="428.8" width="1" height="1" fill="#3a48d8" opacity="0.75"/><rect x="442.2" y="428.3" width="1" height="1" fill="#e03838" opacity="0.75"/><rect x="434.3" y="421.7" width="1" height="1" fill="#e03838" opacity="0.75"/><rect x="434.6" y="429.5" width="1" height="1" fill="#3a48d8" opacity="0.75"/><rect x="436.1" y="420.7" width="1" height="1" fill="#d8c838" opacity="0.75"/><rect x="430.3" y="427.3" width="1" height="1" fill="#e03838" opacity="0.75"/><rect x="422.7" y="427.6" width="1" height="1" fill="#e03838" opacity="0.75"/><rect x="429.9" y="428.5" width="1" height="1" fill="#e03838" opacity="0.75"/><rect x="432.5" y="424.1" width="1" height="1" fill="#38b838" opacity="0.75"/><rect x="436.6" y="423.0" width="1" height="1" fill="#38b838" opacity="0.75"/><rect x="438.9" y="421.1" width="1" height="1" fill="#d8c838" opacity="0.75"/><rect x="431.7" y="423.7" width="1" height="1" fill="#38b838" opacity="0.75"/><rect x="431.0" y="420.2" width="1" height="1" fill="#38b838" opacity="0.75"/><rect x="430.6" y="421.8" width="1" height="1" fill="#d8c838" opacity="0.75"/><rect x="442.0" y="423.3" width="1" height="1" fill="#38b838" opacity="0.75"/><rect x="424.4" y="425.5" width="1" height="1" fill="#e03838" opacity="0.75"/><rect x="443.0" y="426.1" width="1" height="1" fill="#d8c838" opacity="0.75"/><rect x="422.9" y="424.4" width="1" height="1" fill="#3a48d8" opacity="0.75"/><rect x="434.9" y="427.1" width="1" height="1" fill="#e03838" opacity="0.75"/><rect x="431.6" y="422.3" width="1" height="1" fill="#d8c838" opacity="0.75"/><rect x="435.1" y="422.0" width="1" height="1" fill="#38b838" opacity="0.75"/><rect x="428.2" y="425.7" width="1" height="1" fill="#e03838" opacity="0.75"/><rect x="435.1" y="430.2" width="1" height="1" fill="#e03838" opacity="0.75"/><rect x="444.6" y="425.0" width="1" height="1" fill="#3a48d8" opacity="0.75"/><rect x="432.0" y="427.5" width="1" height="1" fill="#3a48d8" opacity="0.75"/><ellipse cx="434.9" cy="422.9" rx="2.3" ry="1.7" fill="#c07858" opacity="0.55"/><path d="M431.6 419.0L431.6 425.0L448.4 427.9M431.6 425.0L421.4 429.8" stroke="#1d8585" stroke-width="1.1" fill="none" opacity="0.95"/><path d="M431.6 419.0L448.4 421.9L438.2 426.7L421.4 423.8Z M421.4 423.8L421.4 429.8L438.2 432.7L448.4 427.9L448.4 421.9 M438.2 426.7L438.2 432.7" stroke="#1d8383" stroke-width="1.3" fill="none" stroke-linejoin="round"/>
<polygon points="648.5,422.2 673.7,426.5 673.7,433.7 658.6,440.9 633.4,436.5 633.4,429.4" fill="#c4c4c4" fill-opacity="0.68"/><polygon points="648.5,422.2 673.7,426.5 658.6,433.7 633.4,429.4" fill="#dadada" fill-opacity="0.35"/><rect x="642.4" y="433.2" width="1" height="1" fill="#e03838" opacity="0.75"/><rect x="644.9" y="432.6" width="1" height="1" fill="#3a48d8" opacity="0.75"/><rect x="644.9" y="434.7" width="1" height="1" fill="#3a48d8" opacity="0.75"/><rect x="668.1" y="432.4" width="1" height="1" fill="#38b838" opacity="0.75"/><rect x="653.7" y="436.5" width="1" height="1" fill="#3a48d8" opacity="0.75"/><rect x="649.3" y="435.1" width="1" height="1" fill="#e03838" opacity="0.75"/><rect x="660.1" y="430.4" width="1" height="1" fill="#d8c838" opacity="0.75"/><rect x="653.1" y="426.3" width="1" height="1" fill="#38b838" opacity="0.75"/><rect x="643.3" y="435.3" width="1" height="1" fill="#3a48d8" opacity="0.75"/><rect x="649.7" y="432.7" width="1" height="1" fill="#e03838" opacity="0.75"/><rect x="638.3" y="432.5" width="1" height="1" fill="#e03838" opacity="0.75"/><rect x="663.0" y="433.7" width="1" height="1" fill="#3a48d8" opacity="0.75"/><rect x="655.7" y="437.5" width="1" height="1" fill="#3a48d8" opacity="0.75"/><rect x="641.7" y="428.9" width="1" height="1" fill="#d8c838" opacity="0.75"/><rect x="652.6" y="424.2" width="1" height="1" fill="#e03838" opacity="0.75"/><rect x="647.4" y="437.2" width="1" height="1" fill="#3a48d8" opacity="0.75"/><rect x="653.0" y="437.4" width="1" height="1" fill="#3a48d8" opacity="0.75"/><rect x="655.7" y="424.4" width="1" height="1" fill="#d8c838" opacity="0.75"/><rect x="662.4" y="427.8" width="1" height="1" fill="#e03838" opacity="0.75"/><rect x="648.8" y="436.8" width="1" height="1" fill="#e03838" opacity="0.75"/><rect x="656.4" y="426.1" width="1" height="1" fill="#d8c838" opacity="0.75"/><rect x="650.6" y="436.6" width="1" height="1" fill="#3a48d8" opacity="0.75"/><rect x="660.4" y="426.2" width="1" height="1" fill="#d8c838" opacity="0.75"/><rect x="649.9" y="428.2" width="1" height="1" fill="#38b838" opacity="0.75"/><rect x="647.1" y="430.5" width="1" height="1" fill="#d8c838" opacity="0.75"/><rect x="667.5" y="425.8" width="1" height="1" fill="#e03838" opacity="0.75"/><rect x="665.6" y="428.0" width="1" height="1" fill="#38b838" opacity="0.75"/><rect x="659.7" y="437.7" width="1" height="1" fill="#3a48d8" opacity="0.75"/><rect x="650.1" y="427.2" width="1" height="1" fill="#d8c838" opacity="0.75"/><rect x="661.3" y="432.5" width="1" height="1" fill="#d8c838" opacity="0.75"/><rect x="653.9" y="435.7" width="1" height="1" fill="#3a48d8" opacity="0.75"/><rect x="644.5" y="428.8" width="1" height="1" fill="#d8c838" opacity="0.75"/><rect x="661.6" y="428.6" width="1" height="1" fill="#d8c838" opacity="0.75"/><rect x="664.5" y="426.0" width="1" height="1" fill="#e03838" opacity="0.75"/><rect x="646.4" y="435.6" width="1" height="1" fill="#e03838" opacity="0.75"/><rect x="671.8" y="427.9" width="1" height="1" fill="#3a48d8" opacity="0.75"/><rect x="638.6" y="435.1" width="1" height="1" fill="#3a48d8" opacity="0.75"/><rect x="671.3" y="429.9" width="1" height="1" fill="#e03838" opacity="0.75"/><rect x="657.7" y="431.1" width="1" height="1" fill="#d8c838" opacity="0.75"/><rect x="651.8" y="433.4" width="1" height="1" fill="#e03838" opacity="0.75"/><rect x="649.4" y="433.5" width="1" height="1" fill="#e03838" opacity="0.75"/><rect x="635.8" y="433.9" width="1" height="1" fill="#3a48d8" opacity="0.75"/><rect x="648.7" y="437.4" width="1" height="1" fill="#3a48d8" opacity="0.75"/><rect x="648.2" y="434.3" width="1" height="1" fill="#3a48d8" opacity="0.75"/><rect x="643.7" y="426.9" width="1" height="1" fill="#38b838" opacity="0.75"/><rect x="660.8" y="437.4" width="1" height="1" fill="#38b838" opacity="0.75"/><rect x="649.9" y="435.0" width="1" height="1" fill="#e03838" opacity="0.75"/><rect x="644.0" y="432.9" width="1" height="1" fill="#3a48d8" opacity="0.75"/><rect x="639.2" y="436.2" width="1" height="1" fill="#3a48d8" opacity="0.75"/><rect x="647.4" y="429.7" width="1" height="1" fill="#38b838" opacity="0.75"/><rect x="647.8" y="433.5" width="1" height="1" fill="#3a48d8" opacity="0.75"/><rect x="637.9" y="428.6" width="1" height="1" fill="#38b838" opacity="0.75"/><rect x="641.5" y="436.3" width="1" height="1" fill="#3a48d8" opacity="0.75"/><rect x="643.8" y="428.8" width="1" height="1" fill="#e03838" opacity="0.75"/><rect x="647.1" y="434.1" width="1" height="1" fill="#3a48d8" opacity="0.75"/><rect x="654.0" y="423.4" width="1" height="1" fill="#d8c838" opacity="0.75"/><rect x="651.2" y="430.3" width="1" height="1" fill="#d8c838" opacity="0.75"/><rect x="635.2" y="434.8" width="1" height="1" fill="#e03838" opacity="0.75"/><rect x="647.9" y="427.3" width="1" height="1" fill="#38b838" opacity="0.75"/><rect x="671.4" y="431.0" width="1" height="1" fill="#e03838" opacity="0.75"/><ellipse cx="653.5" cy="428.0" rx="3.2" ry="2.3" fill="#c07858" opacity="0.55"/><path d="M648.5 422.2L648.5 429.3L673.7 433.7M648.5 429.3L633.4 436.5" stroke="#1d8585" stroke-width="1.1" fill="none" opacity="0.95"/><path d="M648.5 422.2L673.7 426.5L658.6 433.7L633.4 429.4Z M633.4 429.4L633.4 436.5L658.6 440.9L673.7 433.7L673.7 426.5 M658.6 433.7L658.6 440.9" stroke="#1d8383" stroke-width="1.3" fill="none" stroke-linejoin="round"/>
<polygon points="431.0,262.6 438.8,263.6 438.8,422.2 431.0,422.2" fill="rgba(82,141,202,0.80)"/><rect x="434.9" y="263.6" width="3.9" height="158.2" fill="rgba(255,255,255,0.05)"/>
<polygon points="646.8,266.6 660.3,267.6 660.3,427.3 646.8,427.3" fill="rgba(82,141,202,0.80)"/><rect x="653.5" y="267.6" width="6.8" height="159.3" fill="rgba(255,255,255,0.05)"/>
<polygon points="515.6,433.5 532.4,436.5 532.4,442.5 522.2,447.3 505.4,444.4 505.4,438.3" fill="#c4c4c4" fill-opacity="0.68"/><polygon points="515.6,433.5 532.4,436.5 522.2,441.3 505.4,438.3" fill="#dadada" fill-opacity="0.35"/><rect x="518.4" y="437.7" width="1" height="1" fill="#d8c838" opacity="0.75"/><rect x="513.9" y="438.5" width="1" height="1" fill="#d8c838" opacity="0.75"/><rect x="526.1" y="438.0" width="1" height="1" fill="#38b838" opacity="0.75"/><rect x="525.6" y="436.1" width="1" height="1" fill="#e03838" opacity="0.75"/><rect x="515.3" y="438.4" width="1" height="1" fill="#d8c838" opacity="0.75"/><rect x="513.8" y="437.9" width="1" height="1" fill="#38b838" opacity="0.75"/><rect x="518.2" y="441.0" width="1" height="1" fill="#e03838" opacity="0.75"/><rect x="516.3" y="438.6" width="1" height="1" fill="#d8c838" opacity="0.75"/><rect x="524.0" y="444.4" width="1" height="1" fill="#3a48d8" opacity="0.75"/><rect x="527.3" y="441.3" width="1" height="1" fill="#d8c838" opacity="0.75"/><rect x="514.7" y="442.7" width="1" height="1" fill="#3a48d8" opacity="0.75"/><rect x="508.4" y="441.9" width="1" height="1" fill="#3a48d8" opacity="0.75"/><rect x="527.4" y="442.2" width="1" height="1" fill="#3a48d8" opacity="0.75"/><rect x="511.5" y="436.7" width="1" height="1" fill="#38b838" opacity="0.75"/><rect x="511.1" y="440.5" width="1" height="1" fill="#3a48d8" opacity="0.75"/><rect x="529.8" y="441.6" width="1" height="1" fill="#3a48d8" opacity="0.75"/><rect x="516.5" y="441.0" width="1" height="1" fill="#e03838" opacity="0.75"/><rect x="507.9" y="442.9" width="1" height="1" fill="#e03838" opacity="0.75"/><rect x="510.7" y="440.9" width="1" height="1" fill="#3a48d8" opacity="0.75"/><rect x="514.0" y="440.2" width="1" height="1" fill="#3a48d8" opacity="0.75"/><rect x="516.7" y="443.7" width="1" height="1" fill="#3a48d8" opacity="0.75"/><rect x="513.4" y="435.0" width="1" height="1" fill="#38b838" opacity="0.75"/><rect x="518.6" y="442.7" width="1" height="1" fill="#e03838" opacity="0.75"/><rect x="518.4" y="441.4" width="1" height="1" fill="#e03838" opacity="0.75"/><rect x="515.6" y="438.0" width="1" height="1" fill="#e03838" opacity="0.75"/><rect x="506.7" y="440.3" width="1" height="1" fill="#3a48d8" opacity="0.75"/><rect x="512.9" y="443.5" width="1" height="1" fill="#3a48d8" opacity="0.75"/><rect x="519.6" y="443.7" width="1" height="1" fill="#3a48d8" opacity="0.75"/><rect x="506.9" y="443.5" width="1" height="1" fill="#e03838" opacity="0.75"/><rect x="519.6" y="438.9" width="1" height="1" fill="#e03838" opacity="0.75"/><rect x="527.2" y="437.2" width="1" height="1" fill="#e03838" opacity="0.75"/><rect x="522.7" y="435.0" width="1" height="1" fill="#e03838" opacity="0.75"/><rect x="522.2" y="439.2" width="1" height="1" fill="#d8c838" opacity="0.75"/><rect x="512.1" y="441.7" width="1" height="1" fill="#3a48d8" opacity="0.75"/><rect x="523.3" y="442.5" width="1" height="1" fill="#d8c838" opacity="0.75"/><rect x="523.1" y="436.1" width="1" height="1" fill="#38b838" opacity="0.75"/><rect x="515.3" y="438.3" width="1" height="1" fill="#e03838" opacity="0.75"/><rect x="528.8" y="440.5" width="1" height="1" fill="#3a48d8" opacity="0.75"/><rect x="521.6" y="440.1" width="1" height="1" fill="#38b838" opacity="0.75"/><rect x="509.6" y="442.2" width="1" height="1" fill="#e03838" opacity="0.75"/><ellipse cx="518.9" cy="437.4" rx="2.3" ry="1.7" fill="#c07858" opacity="0.55"/><path d="M515.6 433.5L515.6 439.6L532.4 442.5M515.6 439.6L505.4 444.4" stroke="#1d8585" stroke-width="1.1" fill="none" opacity="0.95"/><path d="M515.6 433.5L532.4 436.5L522.2 441.3L505.4 438.3Z M505.4 438.3L505.4 444.4L522.2 447.3L532.4 442.5L532.4 436.5 M522.2 441.3L522.2 447.3" stroke="#1d8383" stroke-width="1.3" fill="none" stroke-linejoin="round"/>
<polygon points="515.0,277.2 522.8,278.2 522.8,436.7 515.0,436.7" fill="rgba(82,141,202,0.80)"/><rect x="518.9" y="278.2" width="3.9" height="158.2" fill="rgba(255,255,255,0.05)"/>
<polygon points="350.9,244.4 476.9,259.0 602.9,288.0 602.9,296.5 476.9,267.5 350.9,252.8" fill="rgba(84,146,208,0.78)"/><polyline points="350.9,245.5 476.9,260.2 602.9,289.1" fill="none" stroke="#f0f4ff" stroke-width="1" stroke-dasharray="1 1.6" opacity="0.85"/><polyline points="350.9,251.9 476.9,266.6 602.9,295.5" fill="none" stroke="#e4ecff" stroke-width="1" stroke-dasharray="1 1.6" opacity="0.7"/>
<polygon points="597.9,446.2 623.1,450.5 623.1,457.7 607.9,464.9 582.7,460.5 582.7,453.4" fill="#c4c4c4" fill-opacity="0.68"/><polygon points="597.9,446.2 623.1,450.5 607.9,457.7 582.7,453.4" fill="#dadada" fill-opacity="0.35"/><rect x="601.3" y="458.1" width="1" height="1" fill="#e03838" opacity="0.75"/><rect x="600.3" y="459.4" width="1" height="1" fill="#e03838" opacity="0.75"/><rect x="597.1" y="461.9" width="1" height="1" fill="#3a48d8" opacity="0.75"/><rect x="588.9" y="455.3" width="1" height="1" fill="#3a48d8" opacity="0.75"/><rect x="589.2" y="458.0" width="1" height="1" fill="#3a48d8" opacity="0.75"/><rect x="602.0" y="461.7" width="1" height="1" fill="#3a48d8" opacity="0.75"/><rect x="589.6" y="456.2" width="1" height="1" fill="#e03838" opacity="0.75"/><rect x="602.5" y="453.5" width="1" height="1" fill="#d8c838" opacity="0.75"/><rect x="601.9" y="451.4" width="1" height="1" fill="#d8c838" opacity="0.75"/><rect x="598.0" y="452.0" width="1" height="1" fill="#38b838" opacity="0.75"/><rect x="596.3" y="461.5" width="1" height="1" fill="#3a48d8" opacity="0.75"/><rect x="592.4" y="456.0" width="1" height="1" fill="#3a48d8" opacity="0.75"/><rect x="615.4" y="451.9" width="1" height="1" fill="#d8c838" opacity="0.75"/><rect x="618.2" y="451.2" width="1" height="1" fill="#d8c838" opacity="0.75"/><rect x="590.6" y="460.3" width="1" height="1" fill="#e03838" opacity="0.75"/><rect x="596.9" y="459.3" width="1" height="1" fill="#e03838" opacity="0.75"/><rect x="589.9" y="460.0" width="1" height="1" fill="#3a48d8" opacity="0.75"/><rect x="603.2" y="461.4" width="1" height="1" fill="#e03838" opacity="0.75"/><rect x="604.1" y="454.7" width="1" height="1" fill="#38b838" opacity="0.75"/><rect x="605.3" y="450.2" width="1" height="1" fill="#d8c838" opacity="0.75"/><rect x="602.1" y="458.5" width="1" height="1" fill="#3a48d8" opacity="0.75"/><rect x="602.8" y="449.0" width="1" height="1" fill="#38b838" opacity="0.75"/><rect x="593.8" y="458.6" width="1" height="1" fill="#e03838" opacity="0.75"/><rect x="602.2" y="459.6" width="1" height="1" fill="#e03838" opacity="0.75"/><rect x="598.5" y="461.5" width="1" height="1" fill="#e03838" opacity="0.75"/><rect x="605.3" y="454.4" width="1" height="1" fill="#e03838" opacity="0.75"/><rect x="596.5" y="461.0" width="1" height="1" fill="#3a48d8" opacity="0.75"/><rect x="602.3" y="447.4" width="1" height="1" fill="#38b838" opacity="0.75"/><rect x="617.3" y="454.9" width="1" height="1" fill="#3a48d8" opacity="0.75"/><rect x="593.4" y="458.3" width="1" height="1" fill="#3a48d8" opacity="0.75"/><rect x="594.6" y="453.2" width="1" height="1" fill="#38b838" opacity="0.75"/><rect x="602.7" y="459.2" width="1" height="1" fill="#e03838" opacity="0.75"/><rect x="617.3" y="456.5" width="1" height="1" fill="#e03838" opacity="0.75"/><rect x="598.8" y="452.7" width="1" height="1" fill="#38b838" opacity="0.75"/><rect x="610.5" y="450.0" width="1" height="1" fill="#d8c838" opacity="0.75"/><rect x="592.3" y="450.1" width="1" height="1" fill="#38b838" opacity="0.75"/><rect x="605.7" y="459.8" width="1" height="1" fill="#3a48d8" opacity="0.75"/><rect x="615.2" y="454.3" width="1" height="1" fill="#d8c838" opacity="0.75"/><rect x="610.2" y="453.2" width="1" height="1" fill="#38b838" opacity="0.75"/><rect x="598.6" y="457.0" width="1" height="1" fill="#e03838" opacity="0.75"/><rect x="584.1" y="458.0" width="1" height="1" fill="#3a48d8" opacity="0.75"/><rect x="590.9" y="460.7" width="1" height="1" fill="#e03838" opacity="0.75"/><rect x="621.6" y="452.3" width="1" height="1" fill="#e03838" opacity="0.75"/><rect x="594.8" y="450.9" width="1" height="1" fill="#d8c838" opacity="0.75"/><rect x="604.1" y="450.9" width="1" height="1" fill="#d8c838" opacity="0.75"/><rect x="603.0" y="458.5" width="1" height="1" fill="#e03838" opacity="0.75"/><rect x="602.5" y="450.5" width="1" height="1" fill="#d8c838" opacity="0.75"/><rect x="590.1" y="459.2" width="1" height="1" fill="#e03838" opacity="0.75"/><rect x="609.1" y="461.3" width="1" height="1" fill="#d8c838" opacity="0.75"/><rect x="612.8" y="453.3" width="1" height="1" fill="#e03838" opacity="0.75"/><rect x="597.6" y="451.5" width="1" height="1" fill="#e03838" opacity="0.75"/><rect x="598.0" y="461.0" width="1" height="1" fill="#3a48d8" opacity="0.75"/><rect x="599.9" y="453.2" width="1" height="1" fill="#d8c838" opacity="0.75"/><rect x="590.4" y="451.1" width="1" height="1" fill="#d8c838" opacity="0.75"/><rect x="599.6" y="458.1" width="1" height="1" fill="#e03838" opacity="0.75"/><rect x="595.5" y="447.4" width="1" height="1" fill="#d8c838" opacity="0.75"/><rect x="598.8" y="458.6" width="1" height="1" fill="#e03838" opacity="0.75"/><rect x="583.5" y="456.6" width="1" height="1" fill="#e03838" opacity="0.75"/><rect x="619.4" y="454.9" width="1" height="1" fill="#38b838" opacity="0.75"/><rect x="603.0" y="459.1" width="1" height="1" fill="#e03838" opacity="0.75"/><ellipse cx="602.9" cy="452.0" rx="3.2" ry="2.3" fill="#c07858" opacity="0.55"/><path d="M597.9 446.2L597.9 453.3L623.1 457.7M597.9 453.3L582.7 460.5" stroke="#1d8585" stroke-width="1.1" fill="none" opacity="0.95"/><path d="M597.9 446.2L623.1 450.5L607.9 457.7L582.7 453.4Z M582.7 453.4L582.7 460.5L607.9 464.9L623.1 457.7L623.1 450.5 M607.9 457.7L607.9 464.9" stroke="#1d8383" stroke-width="1.3" fill="none" stroke-linejoin="round"/>
<polygon points="596.1,293.1 609.6,294.1 609.6,451.3 596.1,451.3" fill="rgba(82,141,202,0.80)"/><rect x="602.9" y="294.1" width="6.8" height="156.9" fill="rgba(255,255,255,0.05)"/>
<circle cx="556.5" cy="152.0" r="2" fill="#d02a2a" opacity="0.85"/>
<circle cx="558.5" cy="154.3" r="3.2" fill="#fdfdfd" stroke="#a0a0a0" stroke-width="0.8"/>
<circle cx="550.5" cy="149.8" r="3.2" fill="#fdfdfd" stroke="#a0a0a0" stroke-width="0.8"/>
<rect x="594.0" y="154.5" width="3" height="5" fill="#c04858" opacity="0.9"/>
<circle cx="592.5" cy="154.7" r="3.2" fill="#fdfdfd" stroke="#a0a0a0" stroke-width="0.8"/>
<circle cx="636.1" cy="168.3" r="3.2" fill="#fdfdfd" stroke="#a0a0a0" stroke-width="0.8"/>
<rect x="636.0" y="159.4" width="3" height="5" fill="#c04858" opacity="0.9"/>
<circle cx="634.5" cy="159.6" r="3.2" fill="#fdfdfd" stroke="#a0a0a0" stroke-width="0.8"/>
<rect x="678.0" y="164.3" width="3" height="5" fill="#c04858" opacity="0.9"/>
<circle cx="676.5" cy="164.5" r="3.2" fill="#fdfdfd" stroke="#a0a0a0" stroke-width="0.8"/>
<circle cx="505.9" cy="176.0" r="2" fill="#d02a2a" opacity="0.85"/>
<circle cx="508.7" cy="180.7" r="3.2" fill="#fdfdfd" stroke="#a0a0a0" stroke-width="0.8"/>
<line x1="544.9" y1="181.8" x2="544.9" y2="197.9" stroke="#8e8a92" stroke-width="2"/><circle cx="544.9" cy="181.8" r="2.2" fill="#bf4a5a"/>
<circle cx="720.1" cy="182.9" r="3.2" fill="#fdfdfd" stroke="#a0a0a0" stroke-width="0.8"/>
<rect x="720.0" y="174.0" width="3" height="5" fill="#c04858" opacity="0.9"/>
<circle cx="718.5" cy="174.1" r="3.2" fill="#fdfdfd" stroke="#a0a0a0" stroke-width="0.8"/>
<line x1="586.9" y1="186.7" x2="586.9" y2="202.8" stroke="#8e8a92" stroke-width="2"/><circle cx="586.9" cy="186.7" r="2.2" fill="#bf4a5a"/>
<rect x="762.0" y="183.6" width="3" height="5" fill="#c04858" opacity="0.9"/>
<circle cx="760.5" cy="183.8" r="3.2" fill="#fdfdfd" stroke="#a0a0a0" stroke-width="0.8"/>
<line x1="628.9" y1="191.6" x2="628.9" y2="207.7" stroke="#8e8a92" stroke-width="2"/><circle cx="628.9" cy="191.6" r="2.2" fill="#bf4a5a"/>
<circle cx="802.5" cy="195.6" r="2" fill="#d02a2a" opacity="0.85"/>
<circle cx="800.5" cy="196.2" r="3.2" fill="#fdfdfd" stroke="#a0a0a0" stroke-width="0.8"/>
<circle cx="802.5" cy="193.5" r="3.2" fill="#fdfdfd" stroke="#a0a0a0" stroke-width="0.8"/>
<circle cx="455.2" cy="200.0" r="2" fill="#d02a2a" opacity="0.85"/>
<line x1="670.9" y1="201.2" x2="670.9" y2="217.4" stroke="#8e8a92" stroke-width="2"/><circle cx="670.9" cy="201.2" r="2.2" fill="#bf4a5a"/>
<circle cx="458.1" cy="204.7" r="3.2" fill="#fdfdfd" stroke="#a0a0a0" stroke-width="0.8"/>
<line x1="494.2" y1="205.8" x2="494.2" y2="221.9" stroke="#8e8a92" stroke-width="2"/><circle cx="494.2" cy="205.8" r="2.2" fill="#bf4a5a"/>
<line x1="712.9" y1="210.9" x2="712.9" y2="227.0" stroke="#8e8a92" stroke-width="2"/><circle cx="712.9" cy="210.9" r="2.2" fill="#bf4a5a"/>
<line x1="536.2" y1="210.7" x2="536.2" y2="226.8" stroke="#8e8a92" stroke-width="2"/><circle cx="536.2" cy="210.7" r="2.2" fill="#bf4a5a"/>
<line x1="578.2" y1="215.6" x2="578.2" y2="231.7" stroke="#8e8a92" stroke-width="2"/><circle cx="578.2" cy="215.6" r="2.2" fill="#bf4a5a"/>
<circle cx="751.9" cy="219.6" r="2" fill="#d02a2a" opacity="0.85"/>
<circle cx="749.0" cy="222.3" r="3.2" fill="#fdfdfd" stroke="#a0a0a0" stroke-width="0.8"/>
<circle cx="404.5" cy="224.0" r="2" fill="#d02a2a" opacity="0.85"/>
<line x1="620.2" y1="225.2" x2="620.2" y2="241.4" stroke="#8e8a92" stroke-width="2"/><circle cx="620.2" cy="225.2" r="2.2" fill="#bf4a5a"/>
<circle cx="407.4" cy="228.7" r="3.2" fill="#fdfdfd" stroke="#a0a0a0" stroke-width="0.8"/>
<line x1="443.5" y1="229.8" x2="443.5" y2="245.9" stroke="#8e8a92" stroke-width="2"/><circle cx="443.5" cy="229.8" r="2.2" fill="#bf4a5a"/>
<line x1="662.2" y1="234.9" x2="662.2" y2="251.0" stroke="#8e8a92" stroke-width="2"/><circle cx="662.2" cy="234.9" r="2.2" fill="#bf4a5a"/>
<line x1="485.5" y1="234.7" x2="485.5" y2="250.8" stroke="#8e8a92" stroke-width="2"/><circle cx="485.5" cy="234.7" r="2.2" fill="#bf4a5a"/>
<line x1="527.5" y1="239.6" x2="527.5" y2="255.7" stroke="#8e8a92" stroke-width="2"/><circle cx="527.5" cy="239.6" r="2.2" fill="#bf4a5a"/>
<circle cx="701.2" cy="243.6" r="2" fill="#d02a2a" opacity="0.85"/>
<circle cx="698.3" cy="246.3" r="3.2" fill="#fdfdfd" stroke="#a0a0a0" stroke-width="0.8"/>
<circle cx="353.9" cy="242.9" r="3.2" fill="#fdfdfd" stroke="#a0a0a0" stroke-width="0.8"/>
<circle cx="353.9" cy="248.0" r="2" fill="#d02a2a" opacity="0.85"/>
<line x1="569.5" y1="249.2" x2="569.5" y2="265.4" stroke="#8e8a92" stroke-width="2"/><circle cx="569.5" cy="249.2" r="2.2" fill="#bf4a5a"/>
<circle cx="355.9" cy="250.3" r="3.2" fill="#fdfdfd" stroke="#a0a0a0" stroke-width="0.8"/>
<circle cx="395.9" cy="247.8" r="3.2" fill="#fdfdfd" stroke="#a0a0a0" stroke-width="0.8"/>
<line x1="611.5" y1="258.9" x2="611.5" y2="275.0" stroke="#8e8a92" stroke-width="2"/><circle cx="611.5" cy="258.9" r="2.2" fill="#bf4a5a"/>
<rect x="391.4" y="250.5" width="3" height="5" fill="#c04858" opacity="0.9"/>
<circle cx="437.9" cy="252.7" r="3.2" fill="#fdfdfd" stroke="#a0a0a0" stroke-width="0.8"/>
<circle cx="433.5" cy="264.3" r="3.2" fill="#fdfdfd" stroke="#a0a0a0" stroke-width="0.8"/>
<rect x="433.4" y="255.4" width="3" height="5" fill="#c04858" opacity="0.9"/>
<circle cx="650.5" cy="267.6" r="2" fill="#d02a2a" opacity="0.85"/>
<circle cx="647.7" cy="270.3" r="3.2" fill="#fdfdfd" stroke="#a0a0a0" stroke-width="0.8"/>
<circle cx="479.9" cy="257.6" r="3.2" fill="#fdfdfd" stroke="#a0a0a0" stroke-width="0.8"/>
<rect x="475.4" y="260.3" width="3" height="5" fill="#c04858" opacity="0.9"/>
<circle cx="521.9" cy="267.3" r="3.2" fill="#fdfdfd" stroke="#a0a0a0" stroke-width="0.8"/>
<circle cx="517.5" cy="278.9" r="3.2" fill="#fdfdfd" stroke="#a0a0a0" stroke-width="0.8"/>
<rect x="517.4" y="270.0" width="3" height="5" fill="#c04858" opacity="0.9"/>
<circle cx="563.9" cy="276.9" r="3.2" fill="#fdfdfd" stroke="#a0a0a0" stroke-width="0.8"/>
<rect x="559.4" y="279.6" width="3" height="5" fill="#c04858" opacity="0.9"/>
<circle cx="605.9" cy="286.6" r="3.2" fill="#fdfdfd" stroke="#a0a0a0" stroke-width="0.8"/>
<circle cx="599.9" cy="291.6" r="2" fill="#d02a2a" opacity="0.85"/>
<circle cx="597.9" cy="292.2" r="3.2" fill="#fdfdfd" stroke="#a0a0a0" stroke-width="0.8"/>
<g>
<line x1="350.9" y1="408.3" x2="379.9" y2="413.3" stroke="#ee0000" stroke-width="2.5"/>
<polygon points="377.9,409.3 385.9,414.3 376.9,417.3" fill="#ee0000"/>
<line x1="350.9" y1="408.3" x2="335.9" y2="415.3" stroke="#00dd00" stroke-width="2.5"/>
<polygon points="337.9,411.3 329.9,418.3 338.9,418.3" fill="#00dd00"/>
<line x1="350.9" y1="408.3" x2="350.9" y2="439.3" stroke="#000088" stroke-width="2.5"/>
<polygon points="347.4,437.3 354.4,437.3 350.9,445.3" fill="#000088"/>
<circle cx="350.9" cy="408.3" r="3.5" fill="#f0e000"/>
<text x="390.9" y="419.3" font-size="11" fill="#ee0000">X</text>
<text x="320.9" y="424.3" font-size="11" fill="#00bb00">Y</text>
<text x="346.9" y="461.3" font-size="11" fill="#000088">Z</text>
</g>
<polygon points="963.0,18.5 1022.4,28.3 986.5,45.2 927.6,35.4" fill="#8e8e8e"/>
<polygon points="927.6,35.4 986.5,45.2 986.5,111.0 927.6,101.3" fill="#d0d0d0"/>
<polygon points="986.5,45.2 1022.4,28.3 1022.4,93.5 986.5,111.0" fill="#b6b6b6"/>
<path d="M942.3 37.9L942.3 103.8M927.6 51.9L986.5 61.7M971.8 42.8L971.8 108.7M927.6 84.8L986.5 94.6M995.5 41.0L995.5 106.8M986.5 61.7L1022.4 44.8M1013.4 32.5L1013.4 98.3M986.5 94.5L1022.4 77.6M936.5 31.2L995.4 41.0M942.3 37.9L977.7 21.0M954.1 22.7L1013.0 32.5M971.8 42.8L1007.2 25.9" stroke="#7b7777" stroke-width="1.7" fill="none"/>
<path d="M927.6 35.4L986.5 45.2L1022.4 28.3M986.5 45.2L986.5 111" stroke="#8a8686" stroke-width="1" fill="none"/>
<polygon points="963.0,18.5 1022.4,28.3 986.5,45.2 927.6,35.4" fill="none" stroke="#9a9a9a" stroke-width="0.8"/>
<text x="951" y="80.5" font-size="13" font-weight="bold" fill="#35c035" transform="matrix(1,0.166,0,1,0,-158)" >-Y</text>
<g transform="translate(1004,71) matrix(1,-0.47,-0.18,1,0,0)"><text x="-5" y="5.5" font-size="12.5" fill="#d83a3a" font-weight="bold">-X</text></g>
<g transform="translate(975,33.7) matrix(1,0.166,-1.2,0.5,0,0)"><text x="-7" y="4" font-size="10" fill="#2c3c8c" font-weight="bold">+Z</text></g>
<g>
<line x1="53.6" y1="567.5" x2="80.6" y2="572.2" stroke="#ee0000" stroke-width="2.5"/>
<polygon points="79.1,568.0 88.1,573.5 78.1,576.5" fill="#ee0000"/>
<line x1="53.6" y1="567.5" x2="39.6" y2="574.5" stroke="#00dd00" stroke-width="2.5"/>
<polygon points="41.1,570.5 33.1,578.0 42.6,577.5" fill="#00dd00"/>
<line x1="53.6" y1="567.5" x2="53.6" y2="598.5" stroke="#000088" stroke-width="2.5"/>
<polygon points="50.1,596.5 57.1,596.5 53.6,605.5" fill="#000088"/>
<circle cx="53.6" cy="567.5" r="3.5" fill="#f0e000"/>
<text x="93.6" y="579.5" font-size="11" fill="#ee0000">X</text>
<text x="24.6" y="583.5" font-size="11" fill="#00bb00">Y</text>
<text x="49.7" y="620.5" font-size="11" fill="#000088">Z</text>
</g>
</svg>
<div class="abs" style="left:1043px;top:0;width:2px;height:627px;background:#f3f3f3"></div>
</div>
<div class="abs" style="left:0px;top:627px;width:1045px;height:216px;background:#f5f5f5"></div>
<div class="abs" style="left:0px;top:631px;width:1045px;height:21px;background:#d7e4f2"></div>
<div class="t" style="left:1px;top:636.34px;font-size:12px;line-height:12px;color:#3b3b3b;font-weight:bold;letter-spacing:-0.03px">Objects to Design | Concrete Foundations | EN 1992 | DIN | 2015-12 | &amp; | EN 1997 | DIN | 2022-10</div>
<div class="t" style="left:3.4px;top:658.19px;font-size:11px;line-height:11px;color:#000;font-weight:normal;">Go To</div>
<div class="t" style="left:49.4px;top:658.19px;font-size:11px;line-height:11px;color:#000;font-weight:normal;">Edit</div>
<div class="t" style="left:85.4px;top:658.19px;font-size:11px;line-height:11px;color:#000;font-weight:normal;">Selection</div>
<div class="t" style="left:148.1px;top:658.19px;font-size:11px;line-height:11px;color:#000;font-weight:normal;">View</div>
<div class="t" style="left:189.5px;top:658.19px;font-size:11px;line-height:11px;color:#000;font-weight:normal;">Settings</div>
<div class="abs" style="left:0px;top:672px;width:1045px;height:1px;background:#e6e6e6"></div>
<div class="abs" style="left:0px;top:675px;width:197px;height:21px;background:#e8e8f2"></div>
<svg class="abs" style="left:2px;top:678px" width="16" height="15" viewBox="0 0 16 15">
<rect x="0" y="12" width="15" height="3" fill="#8a5a1a"/><rect x="0" y="9" width="15" height="3" fill="#b08040"/>
<rect x="0" y="9" width="2" height="3" fill="#90d070"/><rect x="13" y="9" width="2" height="3" fill="#90d070"/>
<rect x="3" y="8" width="9" height="3" fill="#a0a0a0"/><rect x="6" y="0" width="3" height="9" fill="#b8b8b8"/></svg>
<div class="t" style="left:21.8px;top:679.78px;font-size:11.6px;line-height:11.6px;color:#000;font-weight:normal;letter-spacing:-0.05px">Concrete Foundations</div>
<svg class="abs" style="left:183px;top:682px" width="10" height="7" viewBox="0 0 10 7"><path d="M0.5 0.8 L5 5.3 L9.5 0.8" stroke="#555" stroke-width="1" fill="none"/></svg>
<div class="abs" style="left:198px;top:675px;width:14.7px;height:21px;background:#e8e8f2"></div>
<svg class="abs" style="left:198px;top:675px" width="15" height="21"><polygon points="4.8,10.5 9.4,6.8 9.4,14.2" fill="#111"/></svg>
<div class="abs" style="left:214px;top:675px;width:14.8px;height:21px;background:#cdcdcd"></div>
<svg class="abs" style="left:214px;top:675px" width="15" height="21"><polygon points="9.6,10.5 5,6.8 5,14.2" fill="#777"/></svg>
<div class="abs" style="left:232.3px;top:677px;width:1px;height:18px;background:#7a7a7a"></div>
<div class="abs" style="left:237px;top:672px;width:1px;height:28px;background:#e2e2e2"></div>
<div class="abs" style="left:240px;top:675px;width:270px;height:21px;background:#e8e8f2"></div>
<svg class="abs" style="left:245px;top:678px" width="14" height="14" viewBox="0 0 14 14">
<rect x="0" y="0" width="14" height="14" fill="#6a6a6a"/><rect x="1" y="1" width="12" height="2" fill="#2a3a9a"/>
<rect x="1" y="3" width="12" height="10" fill="#9a9a9a"/>
<path d="M2.5 11.5 L11.5 11.5 L11.5 4.5 Z" fill="none" stroke="#8ef08e" stroke-width="1.6"/></svg>
<div class="t" style="left:264.4px;top:680.21px;font-size:11.8px;line-height:11.8px;color:#000;font-weight:normal;letter-spacing:0.1px">Input Data</div>
<svg class="abs" style="left:497px;top:682px" width="10" height="7" viewBox="0 0 10 7"><path d="M0.5 0.8 L5 5.3 L9.5 0.8" stroke="#555" stroke-width="1" fill="none"/></svg>
<div class="abs" style="left:511px;top:675px;width:15px;height:21px;background:#cdcdcd"></div>
<svg class="abs" style="left:511px;top:675px" width="15" height="21"><polygon points="5,10.5 9.6,6.8 9.6,14.2" fill="#777"/></svg>
<div class="abs" style="left:526px;top:675px;width:15.5px;height:21px;background:#e8e8f2"></div>
<svg class="abs" style="left:526px;top:675px" width="16" height="21"><polygon points="10,10.5 5.4,6.8 5.4,14.2" fill="#111"/></svg>
<div class="abs" style="left:545.5px;top:677px;width:1px;height:18px;background:#7a7a7a"></div>
<div class="abs" style="left:548px;top:672px;width:346px;height:28px;background:#f9f9f9;border-left:1px solid #e4e4e4;border-right:1px solid #e4e4e4"></div>
<div class="abs" style="left:550.3px;top:674px;width:24.1px;height:22.4px;background:#cce4f7;border:1px solid #99c9ef;border-radius:3px"></div>
<div class="abs" style="left:576.2px;top:674px;width:24.4px;height:22.4px;background:#cce4f7;border:1px solid #99c9ef;border-radius:3px"></div>
<svg class="abs" style="left:548px;top:672px" width="84" height="26" viewBox="0 0 84 26">
<rect x="10.5" y="6.3" width="8.4" height="6.2" rx="1" fill="#e4e4e4" stroke="#8a8a8a" stroke-width="1.1"/>
<path d="M18 22 Q23 16 18.8 11.5" stroke="#3a78b8" stroke-width="1.9" fill="none"/><polygon points="15.5,10 21,9.5 19.5,14.5" fill="#3a78b8"/>
<rect x="36.5" y="6.3" width="8.4" height="6.2" rx="1" fill="#e4e4e4" stroke="#8a8a8a" stroke-width="1.1"/>
<path d="M37 12 Q31 16 36 20.5" stroke="#3a78b8" stroke-width="1.9" fill="none"/><polygon points="34.5,22.5 39.8,22.5 39,17" fill="#3a78b8"/>
<ellipse cx="72.5" cy="8.6" rx="4.2" ry="3" fill="#5a8ad8" stroke="#1a1a5a" stroke-width="1.3"/><circle cx="72.5" cy="8.6" r="1" fill="#111"/>
<polygon points="60,16 68,15.6 60,19.6" fill="#1a3aa8"/><polygon points="70,15.6 77.5,15.6 77.5,11" fill="#d82010"/>
<rect x="60" y="14.9" width="17.7" height="1.2" fill="#222"/>
</svg>
<svg class="abs" style="left:633px;top:676px" width="22" height="18" viewBox="0 0 22 18">
<text x="0.5" y="8" font-size="8.6" font-family="Liberation Sans" fill="#7a7a7a" font-weight="bold" letter-spacing="-0.2">x.xx</text>
<polygon points="1,14.5 19.5,10 19.5,13 1,17" fill="#8a8a8a"/></svg>
<div class="abs" style="left:602.3px;top:672px;width:1px;height:28px;background:#e4e4e4"></div>
<div class="abs" style="left:659.6px;top:677px;width:1px;height:18px;background:#8a8a8a"></div>
<div class="abs" style="left:666.5px;top:679px;width:13px;height:14px;background:transparent"></div>
<div class="abs" style="left:692.4px;top:679px;width:13px;height:14px;background:transparent"></div>
<div class="abs" style="left:719.5px;top:679px;width:13px;height:14px;background:transparent"></div>
<div class="abs" style="left:744.8px;top:679px;width:13px;height:14px;background:transparent"></div>
<svg class="abs" style="left:665px;top:676px" width="100" height="20" viewBox="0 0 100 20" fill="#bbb" stroke="#aaa">
<rect x="1" y="3" width="9" height="4" stroke="none" fill="#e6e6e6"/><rect x="1" y="7" width="9" height="4" stroke="none" fill="#bdbdbd"/><rect x="1" y="12" width="9" height="5" stroke="none" fill="#c8c8c8"/>
<path d="M10 9 Q17 9 17 13 Q17 16 12 16" fill="none" stroke-width="1.8"/>
<rect x="28" y="4" width="9" height="12" stroke="none" fill="#d6d6d6"/><rect x="28" y="8" width="9" height="4" stroke="none" fill="#b0b0b0"/>
<path d="M36 6 L44 14 M44 6 L36 14" stroke-width="2" fill="none"/>
<rect x="55" y="3" width="10" height="14" stroke="none" fill="#e0e0e0"/><path d="M57 10 L70 10" stroke-width="1.6"/><polygon points="56,10 60,7 60,13" stroke="none" fill="#aaa"/>
<rect x="80" y="3" width="10" height="14" stroke="none" fill="#e0e0e0"/><path d="M82 10 L94 10" stroke-width="1.6"/><polygon points="97,10 93,7 93,13" stroke="none" fill="#aaa"/>
</svg>
<div class="abs" style="left:770.5px;top:677px;width:1px;height:18px;background:#8a8a8a"></div>
<svg class="abs" style="left:778px;top:677px" width="19" height="19" viewBox="0 0 19 19">
<path d="M4 1 L14 1 L18 5 L18 16 L4 16 Z" fill="#f4f4f4" stroke="#777"/><rect x="1" y="4" width="9" height="9" fill="#3c8a3c"/>
<text x="2.5" y="11.5" font-size="8" font-weight="bold" fill="#fff" font-family="Liberation Sans">X</text>
<path d="M11 6h6M11 9h6M11 12h6M13 4v10M15.5 4v10" stroke="#3c8a3c" stroke-width="0.8"/>
<polygon points="8,16 14,16 11,19" fill="#3c8a3c"/></svg>
<div class="abs" style="left:803.8px;top:677px;width:1px;height:18px;background:#8a8a8a"></div>
<svg class="abs" style="left:811px;top:677px" width="18" height="18" viewBox="0 0 18 18">
<circle cx="8" cy="8" r="7.5" fill="#3aa0d8"/><path d="M3 5 Q6 2 9 4 Q8 8 4 9 Z M9 10 Q12 8 14 11 Q11 14 9 12Z" fill="#3c9a3c"/>
<circle cx="12" cy="12" r="5" fill="#4a6ad0"/><circle cx="12" cy="12" r="2" fill="#2a8a3a"/></svg>
<div class="abs" style="left:836.7px;top:677px;width:1px;height:18px;background:#8a8a8a"></div>
<svg class="abs" style="left:843px;top:677px" width="20" height="18" viewBox="0 0 20 18">
<rect x="1" y="6" width="17" height="11" fill="#d8d8d8" stroke="#999"/><path d="M1 6 L15 1 L18 5" fill="#ccc" stroke="#999"/>
<rect x="3" y="10" width="5" height="2" fill="#aaa"/><rect x="10" y="10" width="6" height="2" fill="#aaa"/></svg>
<svg class="abs" style="left:870px;top:676px" width="18" height="19" viewBox="0 0 18 19">
<circle cx="9.5" cy="8.5" r="7.5" fill="#555"/><polygon points="2,18 4,11 8,14" fill="#555"/>
<text x="6" y="13" font-size="11" font-weight="bold" fill="#fff" font-family="Liberation Sans">?</text></svg>
<div class="abs" style="left:0px;top:700px;width:1045px;height:1px;background:#cacad2"></div>
<div class="abs" style="left:0px;top:701px;width:1045px;height:9px;background:#e1e1e1"></div>
<div class="abs" style="left:426px;top:701px;width:264px;height:9px;background:#c6c6c6"></div>
<div class="abs" style="left:55px;top:701px;width:1px;height:9px;background:#fafafa"></div>
<div class="abs" style="left:355px;top:701px;width:1px;height:9px;background:#fafafa"></div>
<div class="abs" style="left:425px;top:701px;width:1px;height:9px;background:#fafafa"></div>
<div class="abs" style="left:690px;top:701px;width:1px;height:9px;background:#fafafa"></div>
<div class="abs" style="left:955px;top:701px;width:1px;height:9px;background:#fafafa"></div>
<div class="abs" style="left:0px;top:710px;width:1045px;height:1px;background:#f6f6f6"></div>
<div class="abs" style="left:0px;top:711px;width:55px;height:31px;background:#e3e3e3"></div>
<div class="abs" style="left:56px;top:711px;width:989px;height:31px;background:#efefef"></div>
<div class="abs" style="left:355px;top:711px;width:1px;height:63px;background:#d9d9d9"></div>
<div class="abs" style="left:425px;top:711px;width:1px;height:63px;background:#d9d9d9"></div>
<div class="abs" style="left:690px;top:711px;width:1px;height:63px;background:#d9d9d9"></div>
<div class="abs" style="left:955px;top:711px;width:1px;height:63px;background:#d9d9d9"></div>
<div class="abs" style="left:55px;top:711px;width:1px;height:31px;background:#f7f7f7"></div>
<div class="abs" style="left:55px;top:742px;width:1px;height:32px;background:#e6e6e6"></div>
<div class="t" style="left:7.6px;top:716.05px;font-size:11.4px;line-height:11.4px;color:#000;font-weight:normal;">Found.</div>
<div class="t" style="left:17.6px;top:729.39px;font-size:11px;line-height:11px;color:#000;font-weight:normal;">No.</div>
<div class="t" style="left:158.5px;top:715.54px;font-size:12px;line-height:12px;color:#000;font-weight:normal;letter-spacing:-0.12px">Single Foundation</div>
<div class="t" style="left:191.6px;top:729.39px;font-size:11px;line-height:11px;color:#000;font-weight:normal;letter-spacing:-0.3px">Name</div>
<div class="t" style="left:385px;top:716.39px;font-size:11px;line-height:11px;color:#000;font-weight:normal;">To</div>
<div class="t" style="left:373.7px;top:729.39px;font-size:11px;line-height:11px;color:#000;font-weight:normal;">Design</div>
<div class="t" style="left:519px;top:729.39px;font-size:11px;line-height:11px;color:#000;font-weight:normal;">Selected Nodes</div>
<div class="t" style="left:780.4px;top:728.97px;font-size:11.5px;line-height:11.5px;color:#000;font-weight:normal;letter-spacing:0px">Nodes to Design</div>
<div class="t" style="left:1014px;top:729.39px;font-size:11px;line-height:11px;color:#000;font-weight:normal;">Nodes</div>
<div class="abs" style="left:0px;top:742px;width:1045px;height:1px;background:#e0e0e0"></div>
<div class="abs" style="left:0px;top:743px;width:55px;height:15px;background:#c6c6c6"></div>
<div class="abs" style="left:0px;top:758px;width:55px;height:1px;background:#f0f0f0"></div>
<div class="abs" style="left:0px;top:759px;width:55px;height:15px;background:#e1e1e1"></div>
<div class="abs" style="left:56px;top:743px;width:299px;height:15px;background:#f9f9f4"></div>
<div class="abs" style="left:56px;top:759px;width:299px;height:15px;background:#f9f9f4"></div>
<div class="abs" style="left:356px;top:743px;width:69px;height:15px;background:#fff"></div>
<div class="abs" style="left:356px;top:759px;width:69px;height:15px;background:#fff"></div>
<div class="abs" style="left:426px;top:743px;width:264px;height:15px;background:#0a78d7"></div>
<div class="abs" style="left:426px;top:743px;width:264px;height:15px;border:1px dotted #e8a040"></div>
<div class="abs" style="left:426px;top:759px;width:264px;height:15px;background:#fff"></div>
<div class="abs" style="left:691px;top:743px;width:264px;height:15px;background:#f9f9f4"></div>
<div class="abs" style="left:691px;top:759px;width:264px;height:15px;background:#f9f9f4"></div>
<div class="abs" style="left:956px;top:743px;width:89px;height:15px;background:#fff"></div>
<div class="abs" style="left:956px;top:759px;width:89px;height:15px;background:#fff"></div>
<div class="abs" style="left:56px;top:758px;width:989px;height:1px;background:#e2e2e2"></div>
<div class="abs" style="left:0px;top:774px;width:1045px;height:1px;background:#e2e2e2"></div>
<div class="abs" style="left:0px;top:775px;width:55.5px;height:64px;background:#f5f5f5"></div>
<div class="abs" style="left:56px;top:775px;width:989px;height:64px;background:#fff"></div>
<div class="abs" style="left:0px;top:839px;width:1045px;height:4px;background:#eeeeee"></div>
<div class="t" style="left:23px;top:745.79px;font-size:11px;line-height:11px;color:#000;font-weight:normal;">1</div>
<div class="t" style="left:23px;top:761.79px;font-size:11px;line-height:11px;color:#000;font-weight:normal;">2</div>
<div class="abs" style="left:60px;top:745px;width:11px;height:10.5px;background:#c8fafc"></div>
<div class="abs" style="left:60px;top:761px;width:11px;height:10.5px;background:#f2c000"></div>
<div class="t" style="left:76.6px;top:745.20px;font-size:11.7px;line-height:11.7px;color:#000;font-weight:normal;letter-spacing:0.03px">Foundation Plate | without Groundwater (Nodal Su...</div>
<div class="t" style="left:76.6px;top:761.20px;font-size:11.7px;line-height:11.7px;color:#000;font-weight:normal;letter-spacing:0.03px">Foundation Plate | without Groundwater (Nodal Su...</div>
<svg class="abs" style="left:384px;top:744.1px" width="13" height="13" viewBox="0 0 13 13">
<rect x="0" y="0" width="13" height="13" rx="3" fill="#0f5fba"/><path d="M3.3 6.8 L5.5 9 L9.8 4.3" stroke="#fff" stroke-width="1" fill="none"/></svg>
<svg class="abs" style="left:384px;top:760.1px" width="13" height="13" viewBox="0 0 13 13">
<rect x="0" y="0" width="13" height="13" rx="3" fill="#0f5fba"/><path d="M3.3 6.8 L5.5 9 L9.8 4.3" stroke="#fff" stroke-width="1" fill="none"/></svg>
<div class="t" style="left:430.7px;top:745.79px;font-size:11px;line-height:11px;color:#fff;font-weight:normal;">All</div>
<div class="t" style="left:430.7px;top:761.79px;font-size:11px;line-height:11px;color:#000;font-weight:normal;">All</div>
<div class="t" style="left:695.4px;top:746.00px;font-size:10.75px;line-height:10.75px;color:#000;font-weight:normal;">1,3,5,8,10,13,15,17,28,30</div>
<div class="t" style="left:695.4px;top:762.04px;font-size:10.7px;line-height:10.7px;color:#000;font-weight:normal;">25,27,35,36</div>
<div class="abs" style="left:12px;top:10.5px;width:342px;height:221px;background:#fff;border:1px solid #c4c4c4;border-radius:4px;box-shadow:0 0 1px rgba(0,0,0,0.08)"></div>
<div class="abs" style="left:13px;top:11.5px;width:340px;height:29.5px;background:#f2f2f2;border-radius:3px 3px 0 0"></div>
<div class="t" style="left:21.7px;top:20.24px;font-size:12px;line-height:12px;color:#8c8c8c;font-weight:normal;">Nodes Assignment</div>
<div class="abs" style="left:333px;top:18.2px;width:19px;height:18.7px;background:#d9d9d9"></div>
<div class="t" style="left:333px;top:19px;width:19px;text-align:center;font-size:12px;line-height:16px;color:#f4f4f4">x</div>
<div class="abs" style="left:13px;top:41px;width:340px;height:148px;background:#d2d2d6"></div>
<div class="abs" style="left:22px;top:50px;width:322px;height:74px;background:#fff"></div>
<div class="abs" style="left:27px;top:54px;width:65px;height:65px;background:#f7f7f7"></div>
<svg class="abs" style="left:27px;top:54px" width="65" height="65" viewBox="0 0 65 65">
<rect x="28" y="24" width="9" height="9" fill="#e31e26"/>
<rect x="35" y="24" width="2" height="9" fill="#b0181e"/>
<rect x="28" y="31" width="9" height="2" fill="#a3171c"/>
<path d="M36 33 L36 51 L40.5 47 L44 54 L47 52.5 L43.5 46 L49 45.5 Z" fill="rgba(0,0,0,0.35)" transform="translate(1.8,1.8)" filter="url(#blur1)"/>
<path d="M34.5 31.5 L34.5 49.5 L39 45.5 L42.5 52.5 L45.5 51 L42 44.5 L47.5 44 Z" fill="#fff" stroke="#7a7a7a" stroke-width="0.9" stroke-linejoin="round"/>
<defs><filter id="blur1"><feGaussianBlur stdDeviation="1"/></filter></defs>
<polygon points="64,51.4 64,64 51.3,64" fill="#575757"/>
</svg>
<div class="t" style="left:98.7px;top:56.54px;font-size:12px;line-height:12px;color:#000;font-weight:normal;letter-spacing:-0.12px">Single Foundation</div>
<div class="abs" style="left:97px;top:74px;width:242px;height:21px;background:#e6e6e6"></div>
<div class="t" style="left:102.9px;top:79.64px;font-size:12px;line-height:12px;color:#000;font-weight:normal;letter-spacing:-0.07px">1 - Foundation Plate | without Groundwater...</div>
<div class="t" style="left:98.7px;top:107.54px;font-size:12px;line-height:12px;color:#000;font-weight:normal;letter-spacing:-0.27px">Select nodes to design</div>
<div class="abs" style="left:22px;top:134px;width:322px;height:47px;background:#fff"></div>
<div class="t" style="left:27px;top:138.49px;font-size:11px;line-height:11px;color:#5a6f96;font-weight:bold;">Selected Nodes No.</div>
<div class="abs" style="left:27px;top:156px;width:282px;height:20px;background:#e6e6f0"></div>
<div class="abs" style="left:314px;top:156px;width:25px;height:21px;background:#cce4f7"></div>
<svg class="abs" style="left:314px;top:156px" width="25" height="21" viewBox="0 0 25 21">
<path d="M7 4.5 L18 15.5 M18 4.5 L7 15.5" stroke="#e8141c" stroke-width="3" stroke-linecap="square"/></svg>
<div class="abs" style="left:171px;top:200px;width:81px;height:20.5px;background:#fdfdfd;border:1px solid #c4c4c4;border-radius:3px"></div>
<div class="t" style="left:171px;top:203px;width:81px;text-align:center;font-size:12px;line-height:14px">OK</div>
<div class="abs" style="left:262px;top:200px;width:80.5px;height:20.5px;background:#fdfdfd;border:1px solid #c4c4c4;border-radius:3px"></div>
<div class="t" style="left:262px;top:203px;width:80.5px;text-align:center;font-size:12px;line-height:14px">Cancel</div>
<svg class="abs" style="left:341px;top:219px" width="10" height="10" viewBox="0 0 10 10" fill="#a8a8a8">
<rect x="7" y="1" width="2" height="2"/><rect x="4" y="4" width="2" height="2"/><rect x="7" y="4" width="2" height="2"/>
<rect x="1" y="7" width="2" height="2"/><rect x="4" y="7" width="2" height="2"/><rect x="7" y="7" width="2" height="2"/></svg>
</body></html>
